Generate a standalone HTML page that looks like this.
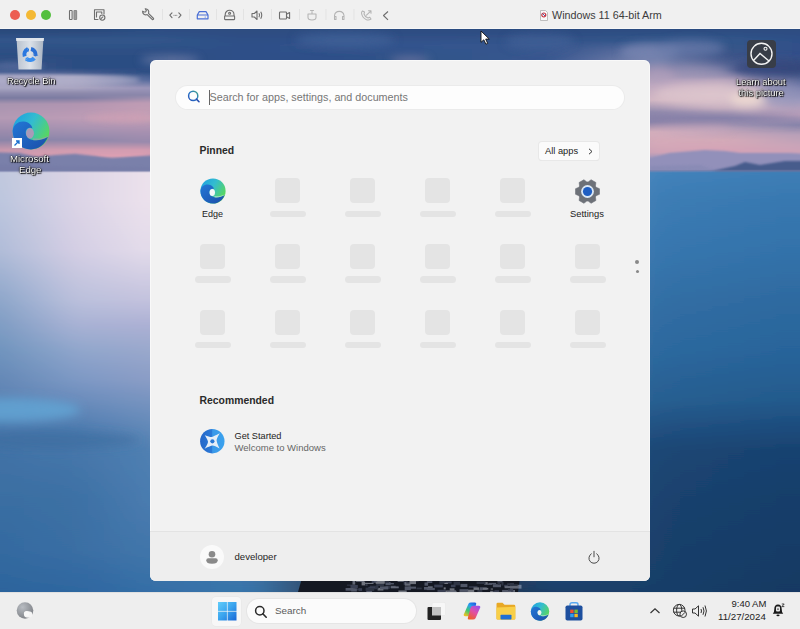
<!DOCTYPE html>
<html><head><meta charset="utf-8">
<style>
*{margin:0;padding:0;box-sizing:border-box}
html,body{width:800px;height:629px;overflow:hidden;background:#ececec;font-family:"Liberation Sans",sans-serif}
svg{display:block}
#titlebar{position:absolute;left:0;top:0;width:800px;height:29px;background:#f0f0f0;border-bottom:1px solid #f6f6f6}
#wall{position:absolute;left:0;top:29px;width:800px;height:563px;overflow:hidden;background:#3a6a9c}
#taskbar{position:absolute;left:0;top:592px;width:800px;height:37px;background:#eeeeee;border-top:1px solid #e0e0e0}
#start{position:absolute;left:150px;top:60px;width:500px;height:521px;background:#f2f2f2;border-radius:6px;overflow:hidden;box-shadow:inset 0 0 0 1px rgba(255,255,255,.55)}
#footer{position:absolute;left:0;top:471px;width:500px;height:50px;background:#eeeeee;border-top:1px solid #e3e3e3}
.ph{position:absolute;width:25px;height:25px;background:#e4e4e4;border-radius:4px}
.pl{position:absolute;width:36px;height:6.5px;background:#e4e4e4;border-radius:3.5px;margin-left:0.5px}
.t{position:absolute;white-space:nowrap;color:#1b1b1b;line-height:1}
.dt{position:absolute;white-space:nowrap;color:#fff;line-height:1;font-size:9.4px;text-align:center;text-shadow:0 0 1px #000,0 0 1px #000,1px 1px 1px #000,0 0 3px rgba(0,0,0,.5)}
.tl{position:absolute;width:10px;height:10px;border-radius:50%;top:10px}
#search{position:absolute;left:26px;top:26px;width:448px;height:23px;background:#fdfdfd;border-radius:12px;box-shadow:0 0 0 1px #ebebeb}
.sico{position:absolute;left:11px;top:4.2px}
#caret{position:absolute;left:33px;top:4px;width:1px;height:15px;background:#666}
#sph{left:33.5px;top:6px;font-size:10.75px;color:#767676}
.hd{font-size:10.4px;font-weight:bold;color:#2a2a2a}
#allapps{position:absolute;left:389px;top:82px;width:60px;height:18px;background:#fbfbfb;border-radius:3px;box-shadow:0 0 0 1px #e8e8e8,0 1px 0 #dcdcdc}
.dot{position:absolute;width:4px;height:4px;border-radius:50%;background:#888}
#avatar{position:absolute;left:50px;top:12.5px;width:24px;height:24px;border-radius:50%;background:#fafafa}
</style></head><body>
<div id="titlebar">
  <div class="tl" style="left:10px;background:#ec5d52"></div>
  <div class="tl" style="left:25.5px;background:#f4b935"></div>
  <div class="tl" style="left:41px;background:#54bf3e"></div>
  <svg style="position:absolute;left:0;top:0" width="400" height="29" viewBox="0 0 400 29">
   <g fill="none" stroke="#6e6e6e" stroke-width="1.1" stroke-linecap="round" stroke-linejoin="round">
    <rect x="69.5" y="10.5" width="2.6" height="9" rx="0.6"/>
    <rect x="74" y="10.5" width="2.6" height="9" rx="0.6" fill="#9a9a9a" stroke="#8a8a8a"/>
    <path d="M98 19.5 L94.5 19.5 L94.5 9.8 L104 9.8 L104 14"/>
    <path d="M96.5 17 L96.5 12 L101.8 12 L101.8 13.5"/>
    <circle cx="102.3" cy="17.6" r="2.6"/><path d="M101.2 18.4 L102.9 16.9"/>
    <path d="M142.6 11.2 A3.3 3.3 0 0 0 147.2 14.6 L152.4 19.7 A1 1 0 0 0 153.6 18.5 L148.5 13.3 A3.3 3.3 0 0 0 145.2 8.7 L146.4 10.6 L145.6 12 L144 12 Z"/>
    <path d="M172 12.8 L169.8 15.2 L172 17.6 M178.8 12.8 L181 15.2 L178.8 17.6"/>
    
   </g>
   <g fill="#6e6e6e"><circle cx="174" cy="15.2" r="0.5"/><circle cx="175.4" cy="15.2" r="0.5"/><circle cx="176.8" cy="15.2" r="0.5"/></g>
   <g fill="none" stroke="#4a6fd6" stroke-width="1.2" stroke-linejoin="round">
    <path d="M197.3 15 L199.3 11.6 L206 11.6 L208 15 L208 18.8 L197.3 18.8 Z M197.3 15 L208 15"/>
   </g>
   <circle cx="205.2" cy="17" r="0.6" fill="#4a6fd6"/>
   <g fill="none" stroke="#6e6e6e" stroke-width="1.1" stroke-linejoin="round">
    <path d="M225.2 16 L225.2 14.6 A4.4 4.4 0 0 1 234 14.6 L234 16"/><rect x="224.6" y="16" width="10" height="3.6" rx="0.5"/>
    <circle cx="229.6" cy="13.2" r="1"/>
    <path d="M252 13.5 L254.3 13.5 L257 11 L257 19.5 L254.3 17 L252 17 Z"/>
    <path d="M259 13.2 Q260.2 15.2 259 17.3 M260.7 11.8 Q262.8 15.2 260.7 18.7"/>
    <rect x="279.5" y="12" width="7" height="7" rx="0.8"/>
    <path d="M286.5 14.2 L289.6 12.5 L289.6 18.5 L286.5 16.8"/>
    <path d="M384 11.5 L388.5 15.5 L384 19.8" transform="translate(772,0) scale(-1,1)"/>
   </g>
   <g fill="none" stroke="#b4b4b4" stroke-width="1.05" stroke-linecap="round" stroke-linejoin="round">
    <path d="M308 14 L316 14 L316 17.5 A4 2.5 0 0 1 308 17.5 Z M312 14 L312 11.5 M310.5 10.5 L313.5 10.5"/>
    <path d="M334.5 19 L334.5 15.5 A4.8 4.8 0 0 1 344 15.5 L344 19 M334.5 16.5 L336 16.5 L336 19.5 L334.5 19.5 M344 16.5 L342.5 16.5 L342.5 19.5 L344 19.5"/>
    <path d="M362.5 11 L364.5 12 L364 14 Q365 17 368 18 L369.8 17.2 L371 19 Q369 20.5 366.5 19.8 Q362 17.5 361.5 13 Q361.7 11.5 362.5 11 Z M366.5 15.2 L371 10.8 M368.5 10.8 L371 10.8 L371 13.2"/>
   </g>
   <g stroke="#e3e3e3" stroke-width="1"><path d="M162.5 9 L162.5 20 M189.5 9 L189.5 20 M216.5 9 L216.5 20 M243.5 9 L243.5 20 M271.5 9 L271.5 20 M299.5 9 L299.5 20 M326 9 L326 20 M354 9 L354 20"/></g>
  </svg>
  <svg style="position:absolute;left:540px;top:9.5px" width="8" height="11" viewBox="0 0 8 11"><path d="M0.5 0.5 L5.5 0.5 L7.5 2.5 L7.5 10.5 L0.5 10.5Z" fill="#fafafa" stroke="#b0b0b0" stroke-width="0.8"/><circle cx="3.8" cy="5" r="2" fill="none" stroke="#c8303a" stroke-width="1.2"/><path d="M2.5 3.5 L5 6" stroke="#4050a0" stroke-width="0.9"/></svg>
  <span class="t" style="left:552px;top:9.5px;font-size:10.75px;color:#3c3c3c">Windows 11 64-bit Arm</span>
</div>
<div id="wall"><svg width="800" height="563" viewBox="0 0 800 563">
<defs><linearGradient id="c0" x1="0" y1="0" x2="0" y2="1"><stop offset="0.0000" stop-color="#2a4878"/><stop offset="0.0195" stop-color="#30548a"/><stop offset="0.0284" stop-color="#2f5287"/><stop offset="0.0373" stop-color="#2d5085"/><stop offset="0.0462" stop-color="#2c4e82"/><stop offset="0.0551" stop-color="#325285"/><stop offset="0.0586" stop-color="#355386"/><stop offset="0.0657" stop-color="#3a5688"/><stop offset="0.0693" stop-color="#3f5a8c"/><stop offset="0.0728" stop-color="#455e90"/><stop offset="0.0764" stop-color="#4a6294"/><stop offset="0.0782" stop-color="#60729f"/><stop offset="0.0835" stop-color="#a0a0c0"/><stop offset="0.0853" stop-color="#a1a0c0"/><stop offset="0.0906" stop-color="#a3a2c1"/><stop offset="0.0995" stop-color="#a6a4c2"/><stop offset="0.1048" stop-color="#a8a6c2"/><stop offset="0.1137" stop-color="#8e8cae"/><stop offset="0.1172" stop-color="#8685a8"/><stop offset="0.1226" stop-color="#7a7aa0"/><stop offset="0.1261" stop-color="#8983a5"/><stop offset="0.1314" stop-color="#a090ad"/><stop offset="0.1332" stop-color="#a894b0"/><stop offset="0.1403" stop-color="#ab96b1"/><stop offset="0.1474" stop-color="#af97b2"/><stop offset="0.1528" stop-color="#b199b3"/><stop offset="0.1581" stop-color="#b49ab4"/><stop offset="0.1652" stop-color="#ad95b2"/><stop offset="0.1705" stop-color="#a792b0"/><stop offset="0.1758" stop-color="#a18fae"/><stop offset="0.1829" stop-color="#9a8aac"/><stop offset="0.1883" stop-color="#9488aa"/><stop offset="0.1972" stop-color="#8a84a8"/><stop offset="0.2007" stop-color="#9688a9"/><stop offset="0.2060" stop-color="#a98eaa"/><stop offset="0.2149" stop-color="#c898ac"/><stop offset="0.2185" stop-color="#cc99ad"/><stop offset="0.2238" stop-color="#d29baf"/><stop offset="0.2256" stop-color="#d49cb0"/><stop offset="0.2327" stop-color="#7a7ea8"/><stop offset="0.2362" stop-color="#7a7ea8"/><stop offset="0.2433" stop-color="#7a7ea8"/><stop offset="0.2504" stop-color="#7a7ea8"/><stop offset="0.2522" stop-color="#c0c8de"/><stop offset="0.3037" stop-color="#bcc6de"/><stop offset="0.3925" stop-color="#b0bcd8"/><stop offset="0.4813" stop-color="#8ea6ca"/><stop offset="0.5258" stop-color="#7f9dc4"/><stop offset="0.5702" stop-color="#7094be"/><stop offset="0.6234" stop-color="#6488b6"/><stop offset="0.6501" stop-color="#5e84b4"/><stop offset="0.6590" stop-color="#5b82b3"/><stop offset="0.7034" stop-color="#4d7aad"/><stop offset="0.7123" stop-color="#4a78ac"/><stop offset="0.7478" stop-color="#4272a6"/><stop offset="0.8366" stop-color="#3a6ea2"/><stop offset="0.9254" stop-color="#346aa0"/><stop offset="0.9698" stop-color="#2f669e"/><stop offset="1.0000" stop-color="#2c649c"/></linearGradient><linearGradient id="c1" x1="0" y1="0" x2="0" y2="1"><stop offset="0.0000" stop-color="#2a4878"/><stop offset="0.0195" stop-color="#30548a"/><stop offset="0.0284" stop-color="#2f5287"/><stop offset="0.0373" stop-color="#2d5085"/><stop offset="0.0462" stop-color="#2c4e82"/><stop offset="0.0551" stop-color="#325285"/><stop offset="0.0586" stop-color="#355386"/><stop offset="0.0657" stop-color="#3a5688"/><stop offset="0.0693" stop-color="#3f5a8c"/><stop offset="0.0728" stop-color="#455e90"/><stop offset="0.0764" stop-color="#4a6294"/><stop offset="0.0782" stop-color="#60729f"/><stop offset="0.0835" stop-color="#a0a0c0"/><stop offset="0.0853" stop-color="#a1a0c0"/><stop offset="0.0906" stop-color="#a3a2c1"/><stop offset="0.0995" stop-color="#a6a4c2"/><stop offset="0.1048" stop-color="#a8a6c2"/><stop offset="0.1137" stop-color="#8e8cae"/><stop offset="0.1172" stop-color="#8685a8"/><stop offset="0.1226" stop-color="#7a7aa0"/><stop offset="0.1261" stop-color="#8983a5"/><stop offset="0.1314" stop-color="#a090ad"/><stop offset="0.1332" stop-color="#a894b0"/><stop offset="0.1403" stop-color="#ab96b1"/><stop offset="0.1474" stop-color="#af97b2"/><stop offset="0.1528" stop-color="#b199b3"/><stop offset="0.1581" stop-color="#b49ab4"/><stop offset="0.1652" stop-color="#ad95b2"/><stop offset="0.1705" stop-color="#a792b0"/><stop offset="0.1758" stop-color="#a18fae"/><stop offset="0.1829" stop-color="#9a8aac"/><stop offset="0.1883" stop-color="#9488aa"/><stop offset="0.1972" stop-color="#8a84a8"/><stop offset="0.2007" stop-color="#9688a9"/><stop offset="0.2060" stop-color="#a98eaa"/><stop offset="0.2149" stop-color="#c898ac"/><stop offset="0.2185" stop-color="#cc99ad"/><stop offset="0.2238" stop-color="#d29baf"/><stop offset="0.2256" stop-color="#d49cb0"/><stop offset="0.2327" stop-color="#7a7ea8"/><stop offset="0.2362" stop-color="#7a7ea8"/><stop offset="0.2433" stop-color="#7a7ea8"/><stop offset="0.2504" stop-color="#7a7ea8"/><stop offset="0.2522" stop-color="#c0c8de"/><stop offset="0.3037" stop-color="#bcc6de"/><stop offset="0.3925" stop-color="#b0bcd8"/><stop offset="0.4813" stop-color="#8ea6ca"/><stop offset="0.5258" stop-color="#7f9dc4"/><stop offset="0.5702" stop-color="#7094be"/><stop offset="0.6234" stop-color="#6488b6"/><stop offset="0.6501" stop-color="#5e84b4"/><stop offset="0.6590" stop-color="#5b82b3"/><stop offset="0.7034" stop-color="#4d7aad"/><stop offset="0.7123" stop-color="#4a78ac"/><stop offset="0.7478" stop-color="#4272a6"/><stop offset="0.8366" stop-color="#3a6ea2"/><stop offset="0.9254" stop-color="#346aa0"/><stop offset="0.9698" stop-color="#2f669e"/><stop offset="1.0000" stop-color="#2c649c"/></linearGradient><linearGradient id="c2" x1="0" y1="0" x2="0" y2="1"><stop offset="0.0000" stop-color="#2a4878"/><stop offset="0.0195" stop-color="#30548a"/><stop offset="0.0284" stop-color="#2f5287"/><stop offset="0.0373" stop-color="#2d5085"/><stop offset="0.0462" stop-color="#2c4e82"/><stop offset="0.0551" stop-color="#325285"/><stop offset="0.0586" stop-color="#355386"/><stop offset="0.0657" stop-color="#3a5688"/><stop offset="0.0693" stop-color="#3f5a8c"/><stop offset="0.0728" stop-color="#455e90"/><stop offset="0.0764" stop-color="#4a6294"/><stop offset="0.0782" stop-color="#60729f"/><stop offset="0.0835" stop-color="#a0a0c0"/><stop offset="0.0853" stop-color="#a1a0c0"/><stop offset="0.0906" stop-color="#a3a2c1"/><stop offset="0.0995" stop-color="#a6a4c2"/><stop offset="0.1048" stop-color="#a8a6c2"/><stop offset="0.1137" stop-color="#8e8cae"/><stop offset="0.1172" stop-color="#8685a8"/><stop offset="0.1226" stop-color="#7a7aa0"/><stop offset="0.1261" stop-color="#8983a5"/><stop offset="0.1314" stop-color="#a090ad"/><stop offset="0.1332" stop-color="#a894b0"/><stop offset="0.1403" stop-color="#ab96b1"/><stop offset="0.1474" stop-color="#af97b2"/><stop offset="0.1528" stop-color="#b199b3"/><stop offset="0.1581" stop-color="#b49ab4"/><stop offset="0.1652" stop-color="#ad95b2"/><stop offset="0.1705" stop-color="#a792b0"/><stop offset="0.1758" stop-color="#a18fae"/><stop offset="0.1829" stop-color="#9a8aac"/><stop offset="0.1883" stop-color="#9488aa"/><stop offset="0.1972" stop-color="#8a84a8"/><stop offset="0.2007" stop-color="#9688a9"/><stop offset="0.2060" stop-color="#a98eaa"/><stop offset="0.2149" stop-color="#c898ac"/><stop offset="0.2185" stop-color="#cc99ad"/><stop offset="0.2238" stop-color="#d29baf"/><stop offset="0.2256" stop-color="#d49cb0"/><stop offset="0.2327" stop-color="#7a7ea8"/><stop offset="0.2362" stop-color="#7a7ea8"/><stop offset="0.2433" stop-color="#7a7ea8"/><stop offset="0.2504" stop-color="#7a7ea8"/><stop offset="0.2522" stop-color="#c0c8de"/><stop offset="0.3037" stop-color="#bcc6de"/><stop offset="0.3925" stop-color="#b0bcd8"/><stop offset="0.4813" stop-color="#8ea6ca"/><stop offset="0.5258" stop-color="#7f9dc4"/><stop offset="0.5702" stop-color="#7094be"/><stop offset="0.6234" stop-color="#6488b6"/><stop offset="0.6501" stop-color="#5e84b4"/><stop offset="0.6590" stop-color="#5b82b3"/><stop offset="0.7034" stop-color="#4d7aad"/><stop offset="0.7123" stop-color="#4a78ac"/><stop offset="0.7478" stop-color="#4272a6"/><stop offset="0.8366" stop-color="#3a6ea2"/><stop offset="0.9254" stop-color="#346aa0"/><stop offset="0.9698" stop-color="#2f669e"/><stop offset="1.0000" stop-color="#2c649c"/></linearGradient><linearGradient id="c3" x1="0" y1="0" x2="0" y2="1"><stop offset="0.0000" stop-color="#2a4878"/><stop offset="0.0195" stop-color="#30548a"/><stop offset="0.0284" stop-color="#2f5287"/><stop offset="0.0373" stop-color="#2d5085"/><stop offset="0.0462" stop-color="#2c4e82"/><stop offset="0.0551" stop-color="#315184"/><stop offset="0.0586" stop-color="#335285"/><stop offset="0.0657" stop-color="#375487"/><stop offset="0.0693" stop-color="#3b578a"/><stop offset="0.0728" stop-color="#425c8e"/><stop offset="0.0764" stop-color="#496093"/><stop offset="0.0782" stop-color="#5b6d9c"/><stop offset="0.0835" stop-color="#9d9ebe"/><stop offset="0.0853" stop-color="#a3a2c1"/><stop offset="0.0906" stop-color="#a4a3c1"/><stop offset="0.0995" stop-color="#a7a5c2"/><stop offset="0.1048" stop-color="#a8a6c2"/><stop offset="0.1137" stop-color="#8e8cae"/><stop offset="0.1172" stop-color="#8685a8"/><stop offset="0.1226" stop-color="#7a7aa0"/><stop offset="0.1261" stop-color="#8a83a6"/><stop offset="0.1314" stop-color="#a290ad"/><stop offset="0.1332" stop-color="#aa94b0"/><stop offset="0.1403" stop-color="#ad96b1"/><stop offset="0.1474" stop-color="#b198b3"/><stop offset="0.1528" stop-color="#b399b3"/><stop offset="0.1581" stop-color="#b69ab4"/><stop offset="0.1652" stop-color="#ae96b2"/><stop offset="0.1705" stop-color="#a893b1"/><stop offset="0.1758" stop-color="#a390af"/><stop offset="0.1829" stop-color="#9b8bad"/><stop offset="0.1883" stop-color="#9589ab"/><stop offset="0.1972" stop-color="#8a84a8"/><stop offset="0.2007" stop-color="#9789a9"/><stop offset="0.2060" stop-color="#aa8fab"/><stop offset="0.2149" stop-color="#ca99ad"/><stop offset="0.2185" stop-color="#ce9aae"/><stop offset="0.2238" stop-color="#d49cb0"/><stop offset="0.2256" stop-color="#d69db0"/><stop offset="0.2327" stop-color="#7a7ea8"/><stop offset="0.2362" stop-color="#7a7ea8"/><stop offset="0.2433" stop-color="#7a7ea8"/><stop offset="0.2504" stop-color="#7a7ea8"/><stop offset="0.2522" stop-color="#c6cbdf"/><stop offset="0.3037" stop-color="#c3c9e0"/><stop offset="0.3925" stop-color="#b8c0db"/><stop offset="0.4813" stop-color="#97acce"/><stop offset="0.5258" stop-color="#88a1c7"/><stop offset="0.5702" stop-color="#7798c1"/><stop offset="0.6234" stop-color="#698bb9"/><stop offset="0.6501" stop-color="#6286b6"/><stop offset="0.6590" stop-color="#5e84b5"/><stop offset="0.7034" stop-color="#4e7aae"/><stop offset="0.7123" stop-color="#4a78ac"/><stop offset="0.7478" stop-color="#4373a7"/><stop offset="0.8366" stop-color="#3a6ea2"/><stop offset="0.9254" stop-color="#356ba1"/><stop offset="0.9698" stop-color="#30679e"/><stop offset="1.0000" stop-color="#2c649d"/></linearGradient><linearGradient id="c4" x1="0" y1="0" x2="0" y2="1"><stop offset="0.0000" stop-color="#2a4878"/><stop offset="0.0195" stop-color="#30548a"/><stop offset="0.0284" stop-color="#2f5287"/><stop offset="0.0373" stop-color="#2d5085"/><stop offset="0.0462" stop-color="#2c4e82"/><stop offset="0.0551" stop-color="#305084"/><stop offset="0.0586" stop-color="#315184"/><stop offset="0.0657" stop-color="#345285"/><stop offset="0.0693" stop-color="#375488"/><stop offset="0.0728" stop-color="#3f5a8c"/><stop offset="0.0764" stop-color="#475f91"/><stop offset="0.0782" stop-color="#566999"/><stop offset="0.0835" stop-color="#9a9cbc"/><stop offset="0.0853" stop-color="#a5a4c2"/><stop offset="0.0906" stop-color="#a6a4c2"/><stop offset="0.0995" stop-color="#a8a5c2"/><stop offset="0.1048" stop-color="#a9a6c2"/><stop offset="0.1137" stop-color="#8e8bad"/><stop offset="0.1172" stop-color="#8685a8"/><stop offset="0.1226" stop-color="#7b7ba1"/><stop offset="0.1261" stop-color="#8b83a6"/><stop offset="0.1314" stop-color="#a390ad"/><stop offset="0.1332" stop-color="#ab94b0"/><stop offset="0.1403" stop-color="#af96b1"/><stop offset="0.1474" stop-color="#b298b3"/><stop offset="0.1528" stop-color="#b599b4"/><stop offset="0.1581" stop-color="#b79bb5"/><stop offset="0.1652" stop-color="#b097b3"/><stop offset="0.1705" stop-color="#aa94b1"/><stop offset="0.1758" stop-color="#a491b0"/><stop offset="0.1829" stop-color="#9d8dae"/><stop offset="0.1883" stop-color="#968aac"/><stop offset="0.1972" stop-color="#8b85a9"/><stop offset="0.2007" stop-color="#9889aa"/><stop offset="0.2060" stop-color="#ab8fab"/><stop offset="0.2149" stop-color="#cb9aae"/><stop offset="0.2185" stop-color="#cf9baf"/><stop offset="0.2238" stop-color="#d59db0"/><stop offset="0.2256" stop-color="#d79eb1"/><stop offset="0.2327" stop-color="#7b7fa9"/><stop offset="0.2362" stop-color="#7b7fa9"/><stop offset="0.2433" stop-color="#7b7fa9"/><stop offset="0.2504" stop-color="#7b7fa9"/><stop offset="0.2522" stop-color="#cccde1"/><stop offset="0.3037" stop-color="#cacce1"/><stop offset="0.3925" stop-color="#bfc4dd"/><stop offset="0.4813" stop-color="#a1b1d2"/><stop offset="0.5258" stop-color="#90a6cb"/><stop offset="0.5702" stop-color="#7e9cc4"/><stop offset="0.6234" stop-color="#6e8fbc"/><stop offset="0.6501" stop-color="#6589b8"/><stop offset="0.6590" stop-color="#6186b7"/><stop offset="0.7034" stop-color="#4f7baf"/><stop offset="0.7123" stop-color="#4b79ad"/><stop offset="0.7478" stop-color="#4474a8"/><stop offset="0.8366" stop-color="#3b6fa3"/><stop offset="0.9254" stop-color="#376ca2"/><stop offset="0.9698" stop-color="#31689f"/><stop offset="1.0000" stop-color="#2d659e"/></linearGradient><linearGradient id="c5" x1="0" y1="0" x2="0" y2="1"><stop offset="0.0000" stop-color="#2a4878"/><stop offset="0.0195" stop-color="#31558a"/><stop offset="0.0284" stop-color="#2f5287"/><stop offset="0.0373" stop-color="#2e5085"/><stop offset="0.0462" stop-color="#2c4e82"/><stop offset="0.0551" stop-color="#2e4f83"/><stop offset="0.0586" stop-color="#2f4f83"/><stop offset="0.0657" stop-color="#315084"/><stop offset="0.0693" stop-color="#335286"/><stop offset="0.0728" stop-color="#3d578b"/><stop offset="0.0764" stop-color="#465d90"/><stop offset="0.0782" stop-color="#526595"/><stop offset="0.0835" stop-color="#9799ba"/><stop offset="0.0853" stop-color="#a7a5c3"/><stop offset="0.0906" stop-color="#a7a5c2"/><stop offset="0.0995" stop-color="#a9a6c2"/><stop offset="0.1048" stop-color="#a9a6c2"/><stop offset="0.1137" stop-color="#8e8bad"/><stop offset="0.1172" stop-color="#8785a8"/><stop offset="0.1226" stop-color="#7b7ba1"/><stop offset="0.1261" stop-color="#8c84a6"/><stop offset="0.1314" stop-color="#a590ae"/><stop offset="0.1332" stop-color="#ad94b0"/><stop offset="0.1403" stop-color="#b196b2"/><stop offset="0.1474" stop-color="#b498b3"/><stop offset="0.1528" stop-color="#b79ab4"/><stop offset="0.1581" stop-color="#b99bb5"/><stop offset="0.1652" stop-color="#b197b3"/><stop offset="0.1705" stop-color="#ab95b2"/><stop offset="0.1758" stop-color="#a692b0"/><stop offset="0.1829" stop-color="#9e8eaf"/><stop offset="0.1883" stop-color="#978bad"/><stop offset="0.1972" stop-color="#8b85a9"/><stop offset="0.2007" stop-color="#988aaa"/><stop offset="0.2060" stop-color="#ac90ac"/><stop offset="0.2149" stop-color="#cd9baf"/><stop offset="0.2185" stop-color="#d19caf"/><stop offset="0.2238" stop-color="#d79eb1"/><stop offset="0.2256" stop-color="#d99fb1"/><stop offset="0.2327" stop-color="#7b7fa9"/><stop offset="0.2362" stop-color="#7b7fa9"/><stop offset="0.2433" stop-color="#7b7fa9"/><stop offset="0.2504" stop-color="#7b7fa9"/><stop offset="0.2522" stop-color="#d2d0e2"/><stop offset="0.3037" stop-color="#d0cfe3"/><stop offset="0.3925" stop-color="#c7c8e0"/><stop offset="0.4813" stop-color="#aab7d6"/><stop offset="0.5258" stop-color="#99aace"/><stop offset="0.5702" stop-color="#84a0c7"/><stop offset="0.6234" stop-color="#7392bf"/><stop offset="0.6501" stop-color="#698bba"/><stop offset="0.6590" stop-color="#6589b9"/><stop offset="0.7034" stop-color="#507caf"/><stop offset="0.7123" stop-color="#4b79ad"/><stop offset="0.7478" stop-color="#4575a9"/><stop offset="0.8366" stop-color="#3b6fa3"/><stop offset="0.9254" stop-color="#386da3"/><stop offset="0.9698" stop-color="#3268a0"/><stop offset="1.0000" stop-color="#2d659f"/></linearGradient><linearGradient id="c6" x1="0" y1="0" x2="0" y2="1"><stop offset="0.0000" stop-color="#2a4878"/><stop offset="0.0195" stop-color="#31558a"/><stop offset="0.0284" stop-color="#2f5387"/><stop offset="0.0373" stop-color="#2e5085"/><stop offset="0.0462" stop-color="#2c4e82"/><stop offset="0.0551" stop-color="#2d4e82"/><stop offset="0.0586" stop-color="#2d4e83"/><stop offset="0.0657" stop-color="#2e4e83"/><stop offset="0.0693" stop-color="#2f4f83"/><stop offset="0.0728" stop-color="#3a5589"/><stop offset="0.0764" stop-color="#455c8e"/><stop offset="0.0782" stop-color="#4d6192"/><stop offset="0.0835" stop-color="#9497b8"/><stop offset="0.0853" stop-color="#a9a7c3"/><stop offset="0.0906" stop-color="#a9a7c3"/><stop offset="0.0995" stop-color="#a9a6c2"/><stop offset="0.1048" stop-color="#aaa6c2"/><stop offset="0.1137" stop-color="#8e8aac"/><stop offset="0.1172" stop-color="#8784a8"/><stop offset="0.1226" stop-color="#7c7ca2"/><stop offset="0.1261" stop-color="#8d84a6"/><stop offset="0.1314" stop-color="#a690ae"/><stop offset="0.1332" stop-color="#af94b0"/><stop offset="0.1403" stop-color="#b296b2"/><stop offset="0.1474" stop-color="#b698b3"/><stop offset="0.1528" stop-color="#b89ab4"/><stop offset="0.1581" stop-color="#bb9cb6"/><stop offset="0.1652" stop-color="#b398b4"/><stop offset="0.1705" stop-color="#ad95b3"/><stop offset="0.1758" stop-color="#a793b1"/><stop offset="0.1829" stop-color="#9f8faf"/><stop offset="0.1883" stop-color="#988cad"/><stop offset="0.1972" stop-color="#8c86aa"/><stop offset="0.2007" stop-color="#998aab"/><stop offset="0.2060" stop-color="#ad91ad"/><stop offset="0.2149" stop-color="#cf9baf"/><stop offset="0.2185" stop-color="#d39db0"/><stop offset="0.2238" stop-color="#d99fb1"/><stop offset="0.2256" stop-color="#db9fb2"/><stop offset="0.2327" stop-color="#7c80aa"/><stop offset="0.2362" stop-color="#7c80aa"/><stop offset="0.2433" stop-color="#7c80aa"/><stop offset="0.2504" stop-color="#7c80aa"/><stop offset="0.2522" stop-color="#d8d2e3"/><stop offset="0.3037" stop-color="#d7d2e5"/><stop offset="0.3925" stop-color="#cfcbe2"/><stop offset="0.4813" stop-color="#b4bcd9"/><stop offset="0.5258" stop-color="#a2afd2"/><stop offset="0.5702" stop-color="#8ba3ca"/><stop offset="0.6234" stop-color="#7896c2"/><stop offset="0.6501" stop-color="#6c8dbd"/><stop offset="0.6590" stop-color="#688bbb"/><stop offset="0.7034" stop-color="#507db0"/><stop offset="0.7123" stop-color="#4c7aae"/><stop offset="0.7478" stop-color="#4575a9"/><stop offset="0.8366" stop-color="#3c70a4"/><stop offset="0.9254" stop-color="#396da3"/><stop offset="0.9698" stop-color="#3269a1"/><stop offset="1.0000" stop-color="#2e669f"/></linearGradient><linearGradient id="c7" x1="0" y1="0" x2="0" y2="1"><stop offset="0.0000" stop-color="#2a4879"/><stop offset="0.0195" stop-color="#31558a"/><stop offset="0.0284" stop-color="#2f5387"/><stop offset="0.0373" stop-color="#2e5085"/><stop offset="0.0462" stop-color="#2c4e82"/><stop offset="0.0551" stop-color="#2c4e82"/><stop offset="0.0586" stop-color="#2c4d82"/><stop offset="0.0657" stop-color="#2c4d82"/><stop offset="0.0693" stop-color="#2c4d82"/><stop offset="0.0728" stop-color="#375387"/><stop offset="0.0764" stop-color="#425a8d"/><stop offset="0.0782" stop-color="#485d8f"/><stop offset="0.0835" stop-color="#8c92b4"/><stop offset="0.0853" stop-color="#a3a3c1"/><stop offset="0.0906" stop-color="#a4a3c1"/><stop offset="0.0995" stop-color="#a7a4c1"/><stop offset="0.1048" stop-color="#a9a5c1"/><stop offset="0.1137" stop-color="#8e8aac"/><stop offset="0.1172" stop-color="#8785a8"/><stop offset="0.1226" stop-color="#7e7da3"/><stop offset="0.1261" stop-color="#8f85a7"/><stop offset="0.1314" stop-color="#a991ae"/><stop offset="0.1332" stop-color="#b195b0"/><stop offset="0.1403" stop-color="#b497b2"/><stop offset="0.1474" stop-color="#b899b4"/><stop offset="0.1528" stop-color="#ba9bb5"/><stop offset="0.1581" stop-color="#bd9cb6"/><stop offset="0.1652" stop-color="#b599b4"/><stop offset="0.1705" stop-color="#af96b3"/><stop offset="0.1758" stop-color="#a994b2"/><stop offset="0.1829" stop-color="#a190b0"/><stop offset="0.1883" stop-color="#998cae"/><stop offset="0.1972" stop-color="#8d86aa"/><stop offset="0.2007" stop-color="#9a8aab"/><stop offset="0.2060" stop-color="#ae91ad"/><stop offset="0.2149" stop-color="#d09cb0"/><stop offset="0.2185" stop-color="#d49db1"/><stop offset="0.2238" stop-color="#da9fb2"/><stop offset="0.2256" stop-color="#dca0b2"/><stop offset="0.2327" stop-color="#7c80aa"/><stop offset="0.2362" stop-color="#7c80aa"/><stop offset="0.2433" stop-color="#7c80aa"/><stop offset="0.2504" stop-color="#7c80aa"/><stop offset="0.2522" stop-color="#ddd5e5"/><stop offset="0.3037" stop-color="#ddd5e6"/><stop offset="0.3925" stop-color="#d5cfe4"/><stop offset="0.4813" stop-color="#bbc0dc"/><stop offset="0.5258" stop-color="#a8b2d4"/><stop offset="0.5702" stop-color="#91a6cc"/><stop offset="0.6234" stop-color="#7d98c4"/><stop offset="0.6501" stop-color="#6f8fbe"/><stop offset="0.6590" stop-color="#6b8dbc"/><stop offset="0.7034" stop-color="#527eb1"/><stop offset="0.7123" stop-color="#4d7baf"/><stop offset="0.7478" stop-color="#4777ab"/><stop offset="0.8366" stop-color="#3d71a5"/><stop offset="0.9254" stop-color="#3b6fa4"/><stop offset="0.9698" stop-color="#336aa2"/><stop offset="1.0000" stop-color="#2e67a0"/></linearGradient><linearGradient id="c8" x1="0" y1="0" x2="0" y2="1"><stop offset="0.0000" stop-color="#2b497b"/><stop offset="0.0195" stop-color="#31558a"/><stop offset="0.0284" stop-color="#2f5388"/><stop offset="0.0373" stop-color="#2e5085"/><stop offset="0.0462" stop-color="#2c4e83"/><stop offset="0.0551" stop-color="#2c4e83"/><stop offset="0.0586" stop-color="#2c4e83"/><stop offset="0.0657" stop-color="#2c4d83"/><stop offset="0.0693" stop-color="#2c4d83"/><stop offset="0.0728" stop-color="#355287"/><stop offset="0.0764" stop-color="#3d578b"/><stop offset="0.0782" stop-color="#435a8d"/><stop offset="0.0835" stop-color="#7a85ac"/><stop offset="0.0853" stop-color="#8d93b6"/><stop offset="0.0906" stop-color="#9195b8"/><stop offset="0.0995" stop-color="#9e9dbc"/><stop offset="0.1048" stop-color="#a6a1bf"/><stop offset="0.1137" stop-color="#8e8aad"/><stop offset="0.1172" stop-color="#8885a9"/><stop offset="0.1226" stop-color="#8681a5"/><stop offset="0.1261" stop-color="#9688a9"/><stop offset="0.1314" stop-color="#ae93af"/><stop offset="0.1332" stop-color="#b596b1"/><stop offset="0.1403" stop-color="#b898b3"/><stop offset="0.1474" stop-color="#bb9ab4"/><stop offset="0.1528" stop-color="#bd9cb5"/><stop offset="0.1581" stop-color="#bf9db6"/><stop offset="0.1652" stop-color="#b799b4"/><stop offset="0.1705" stop-color="#b197b3"/><stop offset="0.1758" stop-color="#ab94b2"/><stop offset="0.1829" stop-color="#a290b0"/><stop offset="0.1883" stop-color="#9c8dae"/><stop offset="0.1972" stop-color="#9187ab"/><stop offset="0.2007" stop-color="#9a8aab"/><stop offset="0.2060" stop-color="#ae91ad"/><stop offset="0.2149" stop-color="#d19cb0"/><stop offset="0.2185" stop-color="#d59db1"/><stop offset="0.2238" stop-color="#da9fb2"/><stop offset="0.2256" stop-color="#dca0b2"/><stop offset="0.2327" stop-color="#7d81ab"/><stop offset="0.2362" stop-color="#7d81ab"/><stop offset="0.2433" stop-color="#7d81ab"/><stop offset="0.2504" stop-color="#7d81ab"/><stop offset="0.2522" stop-color="#e0d8e6"/><stop offset="0.3037" stop-color="#e0d8e8"/><stop offset="0.3925" stop-color="#d8d2e6"/><stop offset="0.4813" stop-color="#bdc1dd"/><stop offset="0.5258" stop-color="#a9b1d4"/><stop offset="0.5702" stop-color="#93a7cc"/><stop offset="0.6234" stop-color="#8099c5"/><stop offset="0.6501" stop-color="#7291bf"/><stop offset="0.6590" stop-color="#6e8ebd"/><stop offset="0.7034" stop-color="#5681b3"/><stop offset="0.7123" stop-color="#527eb1"/><stop offset="0.7478" stop-color="#4979ac"/><stop offset="0.8366" stop-color="#4073a7"/><stop offset="0.9254" stop-color="#3c70a6"/><stop offset="0.9698" stop-color="#356ba3"/><stop offset="1.0000" stop-color="#3068a2"/></linearGradient><linearGradient id="c9" x1="0" y1="0" x2="0" y2="1"><stop offset="0.0000" stop-color="#2b4a7d"/><stop offset="0.0195" stop-color="#31558a"/><stop offset="0.0284" stop-color="#2f5388"/><stop offset="0.0373" stop-color="#2e5085"/><stop offset="0.0462" stop-color="#2c4e83"/><stop offset="0.0551" stop-color="#2c4e83"/><stop offset="0.0586" stop-color="#2c4e83"/><stop offset="0.0657" stop-color="#2c4e83"/><stop offset="0.0693" stop-color="#2c4d83"/><stop offset="0.0728" stop-color="#325186"/><stop offset="0.0764" stop-color="#385489"/><stop offset="0.0782" stop-color="#3d588b"/><stop offset="0.0835" stop-color="#6978a3"/><stop offset="0.0853" stop-color="#7783ab"/><stop offset="0.0906" stop-color="#7e87af"/><stop offset="0.0995" stop-color="#9495b8"/><stop offset="0.1048" stop-color="#a29dbd"/><stop offset="0.1137" stop-color="#8e8aad"/><stop offset="0.1172" stop-color="#8885a9"/><stop offset="0.1226" stop-color="#8d85a8"/><stop offset="0.1261" stop-color="#9c8cab"/><stop offset="0.1314" stop-color="#b496b1"/><stop offset="0.1332" stop-color="#b898b2"/><stop offset="0.1403" stop-color="#bb9ab3"/><stop offset="0.1474" stop-color="#be9bb4"/><stop offset="0.1528" stop-color="#c09db5"/><stop offset="0.1581" stop-color="#c29eb6"/><stop offset="0.1652" stop-color="#b99ab4"/><stop offset="0.1705" stop-color="#b397b3"/><stop offset="0.1758" stop-color="#ad94b2"/><stop offset="0.1829" stop-color="#a490b0"/><stop offset="0.1883" stop-color="#9e8dae"/><stop offset="0.1972" stop-color="#9489ab"/><stop offset="0.2007" stop-color="#9a8aac"/><stop offset="0.2060" stop-color="#af91ad"/><stop offset="0.2149" stop-color="#d29cb0"/><stop offset="0.2185" stop-color="#d59db1"/><stop offset="0.2238" stop-color="#da9fb2"/><stop offset="0.2256" stop-color="#dca0b2"/><stop offset="0.2327" stop-color="#7e82ab"/><stop offset="0.2362" stop-color="#7e82ab"/><stop offset="0.2433" stop-color="#7e82ab"/><stop offset="0.2504" stop-color="#7e82ab"/><stop offset="0.2522" stop-color="#e4dbe8"/><stop offset="0.3037" stop-color="#e4dbe9"/><stop offset="0.3925" stop-color="#dcd5e7"/><stop offset="0.4813" stop-color="#bfc1dd"/><stop offset="0.5258" stop-color="#aab1d4"/><stop offset="0.5702" stop-color="#95a7cc"/><stop offset="0.6234" stop-color="#839ac5"/><stop offset="0.6501" stop-color="#7592c0"/><stop offset="0.6590" stop-color="#7190be"/><stop offset="0.7034" stop-color="#5a83b5"/><stop offset="0.7123" stop-color="#5681b3"/><stop offset="0.7478" stop-color="#4b7bae"/><stop offset="0.8366" stop-color="#4376aa"/><stop offset="0.9254" stop-color="#3e72a7"/><stop offset="0.9698" stop-color="#366da5"/><stop offset="1.0000" stop-color="#316aa3"/></linearGradient><linearGradient id="c10" x1="0" y1="0" x2="0" y2="1"><stop offset="0.0000" stop-color="#2b4c7f"/><stop offset="0.0195" stop-color="#31558a"/><stop offset="0.0284" stop-color="#2f5388"/><stop offset="0.0373" stop-color="#2e5086"/><stop offset="0.0462" stop-color="#2c4e83"/><stop offset="0.0551" stop-color="#2c4e83"/><stop offset="0.0586" stop-color="#2c4e83"/><stop offset="0.0657" stop-color="#2c4e83"/><stop offset="0.0693" stop-color="#2c4e83"/><stop offset="0.0728" stop-color="#305085"/><stop offset="0.0764" stop-color="#335287"/><stop offset="0.0782" stop-color="#385589"/><stop offset="0.0835" stop-color="#576b9b"/><stop offset="0.0853" stop-color="#6173a0"/><stop offset="0.0906" stop-color="#6a79a6"/><stop offset="0.0995" stop-color="#8b8db3"/><stop offset="0.1048" stop-color="#9f99bb"/><stop offset="0.1137" stop-color="#8e8aad"/><stop offset="0.1172" stop-color="#8986a9"/><stop offset="0.1226" stop-color="#9489aa"/><stop offset="0.1261" stop-color="#a38fad"/><stop offset="0.1314" stop-color="#b998b2"/><stop offset="0.1332" stop-color="#bc9ab3"/><stop offset="0.1403" stop-color="#be9bb4"/><stop offset="0.1474" stop-color="#c19db5"/><stop offset="0.1528" stop-color="#c39eb5"/><stop offset="0.1581" stop-color="#c49fb6"/><stop offset="0.1652" stop-color="#bc9bb4"/><stop offset="0.1705" stop-color="#b597b3"/><stop offset="0.1758" stop-color="#ae94b2"/><stop offset="0.1829" stop-color="#a690b0"/><stop offset="0.1883" stop-color="#a08eae"/><stop offset="0.1972" stop-color="#988aac"/><stop offset="0.2007" stop-color="#9a8aac"/><stop offset="0.2060" stop-color="#af91ad"/><stop offset="0.2149" stop-color="#d39cb0"/><stop offset="0.2185" stop-color="#d69db1"/><stop offset="0.2238" stop-color="#da9fb2"/><stop offset="0.2256" stop-color="#dca0b2"/><stop offset="0.2327" stop-color="#7f83ab"/><stop offset="0.2362" stop-color="#7f83ab"/><stop offset="0.2433" stop-color="#7f83ab"/><stop offset="0.2504" stop-color="#7f83ab"/><stop offset="0.2522" stop-color="#e7deea"/><stop offset="0.3037" stop-color="#e7deea"/><stop offset="0.3925" stop-color="#dfd8e8"/><stop offset="0.4813" stop-color="#c1c1dd"/><stop offset="0.5258" stop-color="#abb1d4"/><stop offset="0.5702" stop-color="#97a7cc"/><stop offset="0.6234" stop-color="#869bc5"/><stop offset="0.6501" stop-color="#7894c0"/><stop offset="0.6590" stop-color="#7492bf"/><stop offset="0.7034" stop-color="#5e86b6"/><stop offset="0.7123" stop-color="#5a84b5"/><stop offset="0.7478" stop-color="#4d7db0"/><stop offset="0.8366" stop-color="#4678ac"/><stop offset="0.9254" stop-color="#4074a8"/><stop offset="0.9698" stop-color="#386fa6"/><stop offset="1.0000" stop-color="#326ca4"/></linearGradient><linearGradient id="c11" x1="0" y1="0" x2="0" y2="1"><stop offset="0.0000" stop-color="#2c4d81"/><stop offset="0.0195" stop-color="#31558a"/><stop offset="0.0284" stop-color="#2f5388"/><stop offset="0.0373" stop-color="#2e5086"/><stop offset="0.0462" stop-color="#2c4e84"/><stop offset="0.0551" stop-color="#2c4e84"/><stop offset="0.0586" stop-color="#2c4e84"/><stop offset="0.0657" stop-color="#2c4e84"/><stop offset="0.0693" stop-color="#2c4e84"/><stop offset="0.0728" stop-color="#2d4e84"/><stop offset="0.0764" stop-color="#2e4f85"/><stop offset="0.0782" stop-color="#335287"/><stop offset="0.0835" stop-color="#455f92"/><stop offset="0.0853" stop-color="#4b6396"/><stop offset="0.0906" stop-color="#576b9d"/><stop offset="0.0995" stop-color="#8286ae"/><stop offset="0.1048" stop-color="#9b95b9"/><stop offset="0.1137" stop-color="#8f8aae"/><stop offset="0.1172" stop-color="#8a86aa"/><stop offset="0.1226" stop-color="#9c8dad"/><stop offset="0.1261" stop-color="#a992af"/><stop offset="0.1314" stop-color="#be9bb3"/><stop offset="0.1332" stop-color="#bf9cb4"/><stop offset="0.1403" stop-color="#c19db4"/><stop offset="0.1474" stop-color="#c49eb5"/><stop offset="0.1528" stop-color="#c59fb6"/><stop offset="0.1581" stop-color="#c7a0b6"/><stop offset="0.1652" stop-color="#be9bb4"/><stop offset="0.1705" stop-color="#b798b3"/><stop offset="0.1758" stop-color="#b094b2"/><stop offset="0.1829" stop-color="#a790b0"/><stop offset="0.1883" stop-color="#a38eaf"/><stop offset="0.1972" stop-color="#9b8bad"/><stop offset="0.2007" stop-color="#9a8aac"/><stop offset="0.2060" stop-color="#b091ad"/><stop offset="0.2149" stop-color="#d49cb0"/><stop offset="0.2185" stop-color="#d69db1"/><stop offset="0.2238" stop-color="#db9fb2"/><stop offset="0.2256" stop-color="#dca0b2"/><stop offset="0.2327" stop-color="#8084ac"/><stop offset="0.2362" stop-color="#8084ac"/><stop offset="0.2433" stop-color="#8084ac"/><stop offset="0.2504" stop-color="#8084ac"/><stop offset="0.2522" stop-color="#ebe1eb"/><stop offset="0.3037" stop-color="#ebe1ec"/><stop offset="0.3925" stop-color="#e3dbea"/><stop offset="0.4813" stop-color="#c3c2de"/><stop offset="0.5258" stop-color="#acb0d4"/><stop offset="0.5702" stop-color="#99a8cc"/><stop offset="0.6234" stop-color="#899cc6"/><stop offset="0.6501" stop-color="#7b95c1"/><stop offset="0.6590" stop-color="#7793c0"/><stop offset="0.7034" stop-color="#6289b8"/><stop offset="0.7123" stop-color="#5e87b7"/><stop offset="0.7478" stop-color="#4f7fb1"/><stop offset="0.8366" stop-color="#497baf"/><stop offset="0.9254" stop-color="#4175aa"/><stop offset="0.9698" stop-color="#3971a7"/><stop offset="1.0000" stop-color="#346da6"/></linearGradient><linearGradient id="c12" x1="0" y1="0" x2="0" y2="1"><stop offset="0.0000" stop-color="#2c4d82"/><stop offset="0.0195" stop-color="#31548a"/><stop offset="0.0284" stop-color="#2f5288"/><stop offset="0.0373" stop-color="#2e5086"/><stop offset="0.0462" stop-color="#2c4e84"/><stop offset="0.0551" stop-color="#2c4e84"/><stop offset="0.0586" stop-color="#2c4e84"/><stop offset="0.0657" stop-color="#2d4e84"/><stop offset="0.0693" stop-color="#2d4e84"/><stop offset="0.0728" stop-color="#2d4f84"/><stop offset="0.0764" stop-color="#2d4f84"/><stop offset="0.0782" stop-color="#325287"/><stop offset="0.0835" stop-color="#405c90"/><stop offset="0.0853" stop-color="#455f93"/><stop offset="0.0906" stop-color="#53699c"/><stop offset="0.0995" stop-color="#8086af"/><stop offset="0.1048" stop-color="#9995b9"/><stop offset="0.1137" stop-color="#8f8cb0"/><stop offset="0.1172" stop-color="#8a88ac"/><stop offset="0.1226" stop-color="#9d90af"/><stop offset="0.1261" stop-color="#a994b1"/><stop offset="0.1314" stop-color="#bb9cb5"/><stop offset="0.1332" stop-color="#bb9cb5"/><stop offset="0.1403" stop-color="#bd9db5"/><stop offset="0.1474" stop-color="#bf9eb6"/><stop offset="0.1528" stop-color="#c09eb6"/><stop offset="0.1581" stop-color="#c29fb6"/><stop offset="0.1652" stop-color="#b99bb5"/><stop offset="0.1705" stop-color="#b397b3"/><stop offset="0.1758" stop-color="#ad94b2"/><stop offset="0.1829" stop-color="#a590b0"/><stop offset="0.1883" stop-color="#a18eaf"/><stop offset="0.1972" stop-color="#9a8bad"/><stop offset="0.2007" stop-color="#988aad"/><stop offset="0.2060" stop-color="#ab90ae"/><stop offset="0.2149" stop-color="#cc9ab0"/><stop offset="0.2185" stop-color="#ce9bb1"/><stop offset="0.2238" stop-color="#d29db1"/><stop offset="0.2256" stop-color="#d39eb2"/><stop offset="0.2327" stop-color="#8084ac"/><stop offset="0.2362" stop-color="#8084ac"/><stop offset="0.2433" stop-color="#8084ac"/><stop offset="0.2504" stop-color="#8084ac"/><stop offset="0.2522" stop-color="#ece2ec"/><stop offset="0.3037" stop-color="#ebe1eb"/><stop offset="0.3925" stop-color="#e1dae9"/><stop offset="0.4813" stop-color="#c2c2dd"/><stop offset="0.5258" stop-color="#acb1d4"/><stop offset="0.5702" stop-color="#9aa9cc"/><stop offset="0.6234" stop-color="#8a9dc6"/><stop offset="0.6501" stop-color="#7e97c2"/><stop offset="0.6590" stop-color="#7995c0"/><stop offset="0.7034" stop-color="#668bba"/><stop offset="0.7123" stop-color="#628ab8"/><stop offset="0.7478" stop-color="#5382b3"/><stop offset="0.8366" stop-color="#4b7db0"/><stop offset="0.9254" stop-color="#4276aa"/><stop offset="0.9698" stop-color="#3a72a8"/><stop offset="1.0000" stop-color="#356fa7"/></linearGradient><linearGradient id="c13" x1="0" y1="0" x2="0" y2="1"><stop offset="0.0000" stop-color="#2c4d81"/><stop offset="0.0195" stop-color="#305389"/><stop offset="0.0284" stop-color="#2f5288"/><stop offset="0.0373" stop-color="#2e5087"/><stop offset="0.0462" stop-color="#2d4f85"/><stop offset="0.0551" stop-color="#2d4f85"/><stop offset="0.0586" stop-color="#2d4f85"/><stop offset="0.0657" stop-color="#2e4f85"/><stop offset="0.0693" stop-color="#2f4f85"/><stop offset="0.0728" stop-color="#2f4f85"/><stop offset="0.0764" stop-color="#305085"/><stop offset="0.0782" stop-color="#355388"/><stop offset="0.0835" stop-color="#445f92"/><stop offset="0.0853" stop-color="#496295"/><stop offset="0.0906" stop-color="#586d9e"/><stop offset="0.0995" stop-color="#838ab2"/><stop offset="0.1048" stop-color="#9797ba"/><stop offset="0.1137" stop-color="#8f8fb2"/><stop offset="0.1172" stop-color="#8b8caf"/><stop offset="0.1226" stop-color="#9a92b2"/><stop offset="0.1261" stop-color="#a496b3"/><stop offset="0.1314" stop-color="#b39bb6"/><stop offset="0.1332" stop-color="#b39cb6"/><stop offset="0.1403" stop-color="#b49cb6"/><stop offset="0.1474" stop-color="#b69db6"/><stop offset="0.1528" stop-color="#b79db6"/><stop offset="0.1581" stop-color="#b89db7"/><stop offset="0.1652" stop-color="#b199b5"/><stop offset="0.1705" stop-color="#ac97b4"/><stop offset="0.1758" stop-color="#a694b3"/><stop offset="0.1829" stop-color="#9f90b1"/><stop offset="0.1883" stop-color="#9c8fb0"/><stop offset="0.1972" stop-color="#978cae"/><stop offset="0.2007" stop-color="#958bae"/><stop offset="0.2060" stop-color="#a590af"/><stop offset="0.2149" stop-color="#bf97b0"/><stop offset="0.2185" stop-color="#c198b1"/><stop offset="0.2238" stop-color="#c49ab1"/><stop offset="0.2256" stop-color="#c59ab1"/><stop offset="0.2327" stop-color="#8085ad"/><stop offset="0.2362" stop-color="#8085ac"/><stop offset="0.2433" stop-color="#8084ac"/><stop offset="0.2504" stop-color="#8084ac"/><stop offset="0.2522" stop-color="#ede3ec"/><stop offset="0.3037" stop-color="#e9e0eb"/><stop offset="0.3925" stop-color="#ddd8e7"/><stop offset="0.4813" stop-color="#c0c1dc"/><stop offset="0.5258" stop-color="#abb2d3"/><stop offset="0.5702" stop-color="#9baacc"/><stop offset="0.6234" stop-color="#8b9fc6"/><stop offset="0.6501" stop-color="#7f99c2"/><stop offset="0.6590" stop-color="#7b97c1"/><stop offset="0.7034" stop-color="#698eba"/><stop offset="0.7123" stop-color="#668cb9"/><stop offset="0.7478" stop-color="#5885b4"/><stop offset="0.8366" stop-color="#4d7eb0"/><stop offset="0.9254" stop-color="#4175a9"/><stop offset="0.9698" stop-color="#3a72a8"/><stop offset="1.0000" stop-color="#3670a8"/></linearGradient><linearGradient id="c14" x1="0" y1="0" x2="0" y2="1"><stop offset="0.0000" stop-color="#2c4d81"/><stop offset="0.0195" stop-color="#2f5288"/><stop offset="0.0284" stop-color="#2f5288"/><stop offset="0.0373" stop-color="#2e5087"/><stop offset="0.0462" stop-color="#2d4f86"/><stop offset="0.0551" stop-color="#2d4f86"/><stop offset="0.0586" stop-color="#2e4f86"/><stop offset="0.0657" stop-color="#2f5086"/><stop offset="0.0693" stop-color="#305086"/><stop offset="0.0728" stop-color="#315086"/><stop offset="0.0764" stop-color="#325186"/><stop offset="0.0782" stop-color="#375589"/><stop offset="0.0835" stop-color="#476193"/><stop offset="0.0853" stop-color="#4d6597"/><stop offset="0.0906" stop-color="#5d72a1"/><stop offset="0.0995" stop-color="#868fb5"/><stop offset="0.1048" stop-color="#9699bb"/><stop offset="0.1137" stop-color="#8f92b5"/><stop offset="0.1172" stop-color="#8c90b2"/><stop offset="0.1226" stop-color="#9794b4"/><stop offset="0.1261" stop-color="#9f97b5"/><stop offset="0.1314" stop-color="#aa9bb7"/><stop offset="0.1332" stop-color="#ab9bb7"/><stop offset="0.1403" stop-color="#ac9bb7"/><stop offset="0.1474" stop-color="#ac9bb7"/><stop offset="0.1528" stop-color="#ad9bb7"/><stop offset="0.1581" stop-color="#ae9bb7"/><stop offset="0.1652" stop-color="#a898b6"/><stop offset="0.1705" stop-color="#a496b5"/><stop offset="0.1758" stop-color="#a093b3"/><stop offset="0.1829" stop-color="#9a90b2"/><stop offset="0.1883" stop-color="#988fb1"/><stop offset="0.1972" stop-color="#938caf"/><stop offset="0.2007" stop-color="#918baf"/><stop offset="0.2060" stop-color="#9e8faf"/><stop offset="0.2149" stop-color="#b295b0"/><stop offset="0.2185" stop-color="#b495b0"/><stop offset="0.2238" stop-color="#b696b1"/><stop offset="0.2256" stop-color="#b696b1"/><stop offset="0.2327" stop-color="#8185ad"/><stop offset="0.2362" stop-color="#8185ad"/><stop offset="0.2433" stop-color="#8085ac"/><stop offset="0.2504" stop-color="#8084ac"/><stop offset="0.2522" stop-color="#eee3ec"/><stop offset="0.3037" stop-color="#e8dfea"/><stop offset="0.3925" stop-color="#d9d6e5"/><stop offset="0.4813" stop-color="#bdc0da"/><stop offset="0.5258" stop-color="#aab3d2"/><stop offset="0.5702" stop-color="#9babcc"/><stop offset="0.6234" stop-color="#8ca0c6"/><stop offset="0.6501" stop-color="#819bc2"/><stop offset="0.6590" stop-color="#7d99c1"/><stop offset="0.7034" stop-color="#6d90bb"/><stop offset="0.7123" stop-color="#698eba"/><stop offset="0.7478" stop-color="#5c87b5"/><stop offset="0.8366" stop-color="#4f7fb0"/><stop offset="0.9254" stop-color="#4075a9"/><stop offset="0.9698" stop-color="#3a73a9"/><stop offset="1.0000" stop-color="#3771a9"/></linearGradient><linearGradient id="c15" x1="0" y1="0" x2="0" y2="1"><stop offset="0.0000" stop-color="#2c4c81"/><stop offset="0.0195" stop-color="#2f5187"/><stop offset="0.0284" stop-color="#2f5188"/><stop offset="0.0373" stop-color="#2e5087"/><stop offset="0.0462" stop-color="#2d4f86"/><stop offset="0.0551" stop-color="#2d4f86"/><stop offset="0.0586" stop-color="#2e5086"/><stop offset="0.0657" stop-color="#315086"/><stop offset="0.0693" stop-color="#325186"/><stop offset="0.0728" stop-color="#335186"/><stop offset="0.0764" stop-color="#345186"/><stop offset="0.0782" stop-color="#3a568a"/><stop offset="0.0835" stop-color="#4b6495"/><stop offset="0.0853" stop-color="#516999"/><stop offset="0.0906" stop-color="#6277a4"/><stop offset="0.0995" stop-color="#8994b8"/><stop offset="0.1048" stop-color="#949abc"/><stop offset="0.1137" stop-color="#8f95b7"/><stop offset="0.1172" stop-color="#8c93b5"/><stop offset="0.1226" stop-color="#9596b7"/><stop offset="0.1261" stop-color="#9a98b7"/><stop offset="0.1314" stop-color="#a29bb9"/><stop offset="0.1332" stop-color="#a29bb8"/><stop offset="0.1403" stop-color="#a39ab8"/><stop offset="0.1474" stop-color="#a39ab8"/><stop offset="0.1528" stop-color="#a49ab8"/><stop offset="0.1581" stop-color="#a49ab7"/><stop offset="0.1652" stop-color="#a097b6"/><stop offset="0.1705" stop-color="#9c95b5"/><stop offset="0.1758" stop-color="#9993b4"/><stop offset="0.1829" stop-color="#9590b3"/><stop offset="0.1883" stop-color="#938fb2"/><stop offset="0.1972" stop-color="#8f8db0"/><stop offset="0.2007" stop-color="#8e8cb0"/><stop offset="0.2060" stop-color="#978eb0"/><stop offset="0.2149" stop-color="#a592b0"/><stop offset="0.2185" stop-color="#a692b0"/><stop offset="0.2238" stop-color="#a892b0"/><stop offset="0.2256" stop-color="#a892b0"/><stop offset="0.2327" stop-color="#8186ad"/><stop offset="0.2362" stop-color="#8186ad"/><stop offset="0.2433" stop-color="#8085ad"/><stop offset="0.2504" stop-color="#8084ac"/><stop offset="0.2522" stop-color="#eee3ec"/><stop offset="0.3037" stop-color="#e6dee9"/><stop offset="0.3925" stop-color="#d5d3e3"/><stop offset="0.4813" stop-color="#bac0d9"/><stop offset="0.5258" stop-color="#a9b4d2"/><stop offset="0.5702" stop-color="#9baccc"/><stop offset="0.6234" stop-color="#8ca2c6"/><stop offset="0.6501" stop-color="#829dc3"/><stop offset="0.6590" stop-color="#7f9bc2"/><stop offset="0.7034" stop-color="#7093bc"/><stop offset="0.7123" stop-color="#6d91bb"/><stop offset="0.7478" stop-color="#618ab7"/><stop offset="0.8366" stop-color="#5180b1"/><stop offset="0.9254" stop-color="#4075a9"/><stop offset="0.9698" stop-color="#3b74a9"/><stop offset="1.0000" stop-color="#3773a9"/></linearGradient><linearGradient id="c16" x1="0" y1="0" x2="0" y2="1"><stop offset="0.0000" stop-color="#2c4c81"/><stop offset="0.0195" stop-color="#2e5087"/><stop offset="0.0284" stop-color="#2e5188"/><stop offset="0.0373" stop-color="#2e5087"/><stop offset="0.0462" stop-color="#2d4f87"/><stop offset="0.0551" stop-color="#2d4f87"/><stop offset="0.0586" stop-color="#2f5087"/><stop offset="0.0657" stop-color="#325187"/><stop offset="0.0693" stop-color="#335187"/><stop offset="0.0728" stop-color="#355287"/><stop offset="0.0764" stop-color="#365287"/><stop offset="0.0782" stop-color="#3c588b"/><stop offset="0.0835" stop-color="#4f6797"/><stop offset="0.0853" stop-color="#556c9a"/><stop offset="0.0906" stop-color="#677ba6"/><stop offset="0.0995" stop-color="#8b98bb"/><stop offset="0.1048" stop-color="#929cbd"/><stop offset="0.1137" stop-color="#8f98ba"/><stop offset="0.1172" stop-color="#8d97b9"/><stop offset="0.1226" stop-color="#9298b9"/><stop offset="0.1261" stop-color="#9599b9"/><stop offset="0.1314" stop-color="#9a9bba"/><stop offset="0.1332" stop-color="#9a9aba"/><stop offset="0.1403" stop-color="#9a9ab9"/><stop offset="0.1474" stop-color="#9a99b8"/><stop offset="0.1528" stop-color="#9a98b8"/><stop offset="0.1581" stop-color="#9a98b8"/><stop offset="0.1652" stop-color="#9796b7"/><stop offset="0.1705" stop-color="#9594b6"/><stop offset="0.1758" stop-color="#9393b5"/><stop offset="0.1829" stop-color="#9090b4"/><stop offset="0.1883" stop-color="#8e8fb3"/><stop offset="0.1972" stop-color="#8c8db1"/><stop offset="0.2007" stop-color="#8b8cb1"/><stop offset="0.2060" stop-color="#908db1"/><stop offset="0.2149" stop-color="#998fb1"/><stop offset="0.2185" stop-color="#998fb0"/><stop offset="0.2238" stop-color="#9a8fb0"/><stop offset="0.2256" stop-color="#9a8fb0"/><stop offset="0.2327" stop-color="#8186ae"/><stop offset="0.2362" stop-color="#8186ad"/><stop offset="0.2433" stop-color="#8185ad"/><stop offset="0.2504" stop-color="#8084ac"/><stop offset="0.2522" stop-color="#efe3ec"/><stop offset="0.3037" stop-color="#e5dde8"/><stop offset="0.3925" stop-color="#d1d1e1"/><stop offset="0.4813" stop-color="#b8bfd7"/><stop offset="0.5258" stop-color="#a9b5d1"/><stop offset="0.5702" stop-color="#9badcc"/><stop offset="0.6234" stop-color="#8da4c6"/><stop offset="0.6501" stop-color="#849fc3"/><stop offset="0.6590" stop-color="#819dc2"/><stop offset="0.7034" stop-color="#7395bd"/><stop offset="0.7123" stop-color="#7193bc"/><stop offset="0.7478" stop-color="#658db8"/><stop offset="0.8366" stop-color="#5281b1"/><stop offset="0.9254" stop-color="#3f75a9"/><stop offset="0.9698" stop-color="#3b74aa"/><stop offset="1.0000" stop-color="#3874aa"/></linearGradient><linearGradient id="c17" x1="0" y1="0" x2="0" y2="1"><stop offset="0.0000" stop-color="#2c4c80"/><stop offset="0.0195" stop-color="#2e4f86"/><stop offset="0.0284" stop-color="#2e5088"/><stop offset="0.0373" stop-color="#2e5088"/><stop offset="0.0462" stop-color="#2e5088"/><stop offset="0.0551" stop-color="#2e5088"/><stop offset="0.0586" stop-color="#305088"/><stop offset="0.0657" stop-color="#335288"/><stop offset="0.0693" stop-color="#355288"/><stop offset="0.0728" stop-color="#375388"/><stop offset="0.0764" stop-color="#395388"/><stop offset="0.0782" stop-color="#3f598c"/><stop offset="0.0835" stop-color="#526a98"/><stop offset="0.0853" stop-color="#596f9c"/><stop offset="0.0906" stop-color="#6c80a9"/><stop offset="0.0995" stop-color="#8e9dbe"/><stop offset="0.1048" stop-color="#909ebf"/><stop offset="0.1137" stop-color="#8f9bbd"/><stop offset="0.1172" stop-color="#8e9abc"/><stop offset="0.1226" stop-color="#8f9abb"/><stop offset="0.1261" stop-color="#909abb"/><stop offset="0.1314" stop-color="#929abb"/><stop offset="0.1332" stop-color="#929abb"/><stop offset="0.1403" stop-color="#9199ba"/><stop offset="0.1474" stop-color="#9198b9"/><stop offset="0.1528" stop-color="#9097b9"/><stop offset="0.1581" stop-color="#9096b8"/><stop offset="0.1652" stop-color="#8e95b7"/><stop offset="0.1705" stop-color="#8d93b6"/><stop offset="0.1758" stop-color="#8c92b5"/><stop offset="0.1829" stop-color="#8a90b4"/><stop offset="0.1883" stop-color="#8a8fb4"/><stop offset="0.1972" stop-color="#888eb2"/><stop offset="0.2007" stop-color="#878db2"/><stop offset="0.2060" stop-color="#898db1"/><stop offset="0.2149" stop-color="#8c8cb1"/><stop offset="0.2185" stop-color="#8c8cb0"/><stop offset="0.2238" stop-color="#8c8bb0"/><stop offset="0.2256" stop-color="#8c8bb0"/><stop offset="0.2327" stop-color="#8287ae"/><stop offset="0.2362" stop-color="#8186ae"/><stop offset="0.2433" stop-color="#8185ad"/><stop offset="0.2504" stop-color="#8084ac"/><stop offset="0.2522" stop-color="#f0e4ec"/><stop offset="0.3037" stop-color="#e3dce7"/><stop offset="0.3925" stop-color="#cdcedf"/><stop offset="0.4813" stop-color="#b5bed6"/><stop offset="0.5258" stop-color="#a8b6d1"/><stop offset="0.5702" stop-color="#9caecc"/><stop offset="0.6234" stop-color="#8da5c6"/><stop offset="0.6501" stop-color="#86a1c4"/><stop offset="0.6590" stop-color="#839fc3"/><stop offset="0.7034" stop-color="#7797be"/><stop offset="0.7123" stop-color="#7496bd"/><stop offset="0.7478" stop-color="#6a90b9"/><stop offset="0.8366" stop-color="#5482b1"/><stop offset="0.9254" stop-color="#3e74a8"/><stop offset="0.9698" stop-color="#3b75aa"/><stop offset="1.0000" stop-color="#3975ab"/></linearGradient><linearGradient id="c18" x1="0" y1="0" x2="0" y2="1"><stop offset="0.0000" stop-color="#2c4c80"/><stop offset="0.0195" stop-color="#2e4f86"/><stop offset="0.0284" stop-color="#2e5088"/><stop offset="0.0373" stop-color="#2e5088"/><stop offset="0.0462" stop-color="#2e5088"/><stop offset="0.0551" stop-color="#2e5088"/><stop offset="0.0586" stop-color="#305188"/><stop offset="0.0657" stop-color="#345288"/><stop offset="0.0693" stop-color="#365388"/><stop offset="0.0728" stop-color="#385388"/><stop offset="0.0764" stop-color="#3a5488"/><stop offset="0.0782" stop-color="#415a8c"/><stop offset="0.0835" stop-color="#546b99"/><stop offset="0.0853" stop-color="#5b719e"/><stop offset="0.0906" stop-color="#6f83aa"/><stop offset="0.0995" stop-color="#90a0c0"/><stop offset="0.1048" stop-color="#8f9fbf"/><stop offset="0.1137" stop-color="#8e9dbe"/><stop offset="0.1172" stop-color="#8e9dbe"/><stop offset="0.1226" stop-color="#8e9cbd"/><stop offset="0.1261" stop-color="#8d9bbc"/><stop offset="0.1314" stop-color="#8d9abc"/><stop offset="0.1332" stop-color="#8c9abc"/><stop offset="0.1403" stop-color="#8c98bb"/><stop offset="0.1474" stop-color="#8b97ba"/><stop offset="0.1528" stop-color="#8a96b9"/><stop offset="0.1581" stop-color="#8a95b8"/><stop offset="0.1652" stop-color="#8994b7"/><stop offset="0.1705" stop-color="#8893b7"/><stop offset="0.1758" stop-color="#8892b6"/><stop offset="0.1829" stop-color="#8791b5"/><stop offset="0.1883" stop-color="#8790b4"/><stop offset="0.1972" stop-color="#868eb3"/><stop offset="0.2007" stop-color="#858db3"/><stop offset="0.2060" stop-color="#858cb2"/><stop offset="0.2149" stop-color="#848bb1"/><stop offset="0.2185" stop-color="#838ab0"/><stop offset="0.2238" stop-color="#8389b0"/><stop offset="0.2256" stop-color="#8389af"/><stop offset="0.2327" stop-color="#8287ae"/><stop offset="0.2362" stop-color="#8287ae"/><stop offset="0.2433" stop-color="#8185ad"/><stop offset="0.2504" stop-color="#8084ac"/><stop offset="0.2522" stop-color="#f0e4ec"/><stop offset="0.3037" stop-color="#e2dbe7"/><stop offset="0.3925" stop-color="#cbcdde"/><stop offset="0.4813" stop-color="#b3bed5"/><stop offset="0.5258" stop-color="#a8b6d0"/><stop offset="0.5702" stop-color="#9cafcc"/><stop offset="0.6234" stop-color="#8ea6c7"/><stop offset="0.6501" stop-color="#87a2c4"/><stop offset="0.6590" stop-color="#84a0c3"/><stop offset="0.7034" stop-color="#7999be"/><stop offset="0.7123" stop-color="#7697be"/><stop offset="0.7478" stop-color="#6d92ba"/><stop offset="0.8366" stop-color="#5583b1"/><stop offset="0.9254" stop-color="#3e74a8"/><stop offset="0.9698" stop-color="#3b71a4"/><stop offset="1.0000" stop-color="#3972a6"/></linearGradient><linearGradient id="c19" x1="0" y1="0" x2="0" y2="1"><stop offset="0.0000" stop-color="#2c4c80"/><stop offset="0.0195" stop-color="#2e4f86"/><stop offset="0.0284" stop-color="#2f5089"/><stop offset="0.0373" stop-color="#2f5089"/><stop offset="0.0462" stop-color="#2e5088"/><stop offset="0.0551" stop-color="#2e5088"/><stop offset="0.0586" stop-color="#305188"/><stop offset="0.0657" stop-color="#345288"/><stop offset="0.0693" stop-color="#365388"/><stop offset="0.0728" stop-color="#385388"/><stop offset="0.0764" stop-color="#3a5488"/><stop offset="0.0782" stop-color="#415a8c"/><stop offset="0.0835" stop-color="#546b99"/><stop offset="0.0853" stop-color="#5b719e"/><stop offset="0.0906" stop-color="#6f83aa"/><stop offset="0.0995" stop-color="#90a0c0"/><stop offset="0.1048" stop-color="#8f9fbf"/><stop offset="0.1137" stop-color="#8e9dbe"/><stop offset="0.1172" stop-color="#8e9dbe"/><stop offset="0.1226" stop-color="#8e9cbd"/><stop offset="0.1261" stop-color="#8d9bbc"/><stop offset="0.1314" stop-color="#8d9abc"/><stop offset="0.1332" stop-color="#8c9abc"/><stop offset="0.1403" stop-color="#8c98bb"/><stop offset="0.1474" stop-color="#8b97ba"/><stop offset="0.1528" stop-color="#8a96b9"/><stop offset="0.1581" stop-color="#8a95b8"/><stop offset="0.1652" stop-color="#8994b7"/><stop offset="0.1705" stop-color="#8893b7"/><stop offset="0.1758" stop-color="#8892b6"/><stop offset="0.1829" stop-color="#8791b5"/><stop offset="0.1883" stop-color="#8790b4"/><stop offset="0.1972" stop-color="#868eb3"/><stop offset="0.2007" stop-color="#858db3"/><stop offset="0.2060" stop-color="#858cb2"/><stop offset="0.2149" stop-color="#848bb1"/><stop offset="0.2185" stop-color="#838ab0"/><stop offset="0.2238" stop-color="#8389b0"/><stop offset="0.2256" stop-color="#8389af"/><stop offset="0.2327" stop-color="#8287ae"/><stop offset="0.2362" stop-color="#8287ae"/><stop offset="0.2433" stop-color="#8185ad"/><stop offset="0.2504" stop-color="#8084ac"/><stop offset="0.2522" stop-color="#f0e4ec"/><stop offset="0.3037" stop-color="#e2dbe7"/><stop offset="0.3925" stop-color="#cbcdde"/><stop offset="0.4813" stop-color="#b3bed5"/><stop offset="0.5258" stop-color="#a8b6d0"/><stop offset="0.5702" stop-color="#9cafcc"/><stop offset="0.6234" stop-color="#8ea6c7"/><stop offset="0.6501" stop-color="#87a2c4"/><stop offset="0.6590" stop-color="#84a0c3"/><stop offset="0.7034" stop-color="#7999be"/><stop offset="0.7123" stop-color="#7697be"/><stop offset="0.7478" stop-color="#6d92ba"/><stop offset="0.8366" stop-color="#5583b1"/><stop offset="0.9254" stop-color="#3e74a8"/><stop offset="0.9698" stop-color="#386795"/><stop offset="1.0000" stop-color="#366796"/></linearGradient><linearGradient id="c20" x1="0" y1="0" x2="0" y2="1"><stop offset="0.0000" stop-color="#2c4c80"/><stop offset="0.0195" stop-color="#2e4f87"/><stop offset="0.0284" stop-color="#30518a"/><stop offset="0.0373" stop-color="#2f5189"/><stop offset="0.0462" stop-color="#2f5089"/><stop offset="0.0551" stop-color="#2e5088"/><stop offset="0.0586" stop-color="#305188"/><stop offset="0.0657" stop-color="#345288"/><stop offset="0.0693" stop-color="#365388"/><stop offset="0.0728" stop-color="#385388"/><stop offset="0.0764" stop-color="#3a5488"/><stop offset="0.0782" stop-color="#415a8c"/><stop offset="0.0835" stop-color="#546b99"/><stop offset="0.0853" stop-color="#5b719e"/><stop offset="0.0906" stop-color="#6f83aa"/><stop offset="0.0995" stop-color="#90a0c0"/><stop offset="0.1048" stop-color="#8f9fbf"/><stop offset="0.1137" stop-color="#8e9dbe"/><stop offset="0.1172" stop-color="#8e9dbe"/><stop offset="0.1226" stop-color="#8e9cbd"/><stop offset="0.1261" stop-color="#8d9bbc"/><stop offset="0.1314" stop-color="#8d9abc"/><stop offset="0.1332" stop-color="#8c9abc"/><stop offset="0.1403" stop-color="#8c98bb"/><stop offset="0.1474" stop-color="#8b97ba"/><stop offset="0.1528" stop-color="#8a96b9"/><stop offset="0.1581" stop-color="#8a95b8"/><stop offset="0.1652" stop-color="#8994b7"/><stop offset="0.1705" stop-color="#8893b7"/><stop offset="0.1758" stop-color="#8892b6"/><stop offset="0.1829" stop-color="#8791b5"/><stop offset="0.1883" stop-color="#8790b4"/><stop offset="0.1972" stop-color="#868eb3"/><stop offset="0.2007" stop-color="#858db3"/><stop offset="0.2060" stop-color="#858cb2"/><stop offset="0.2149" stop-color="#848bb1"/><stop offset="0.2185" stop-color="#838ab0"/><stop offset="0.2238" stop-color="#8389b0"/><stop offset="0.2256" stop-color="#8389af"/><stop offset="0.2327" stop-color="#8287ae"/><stop offset="0.2362" stop-color="#8287ae"/><stop offset="0.2433" stop-color="#8185ad"/><stop offset="0.2504" stop-color="#8084ac"/><stop offset="0.2522" stop-color="#f0e4ec"/><stop offset="0.3037" stop-color="#e2dbe7"/><stop offset="0.3925" stop-color="#cbcdde"/><stop offset="0.4813" stop-color="#b3bed5"/><stop offset="0.5258" stop-color="#a8b6d0"/><stop offset="0.5702" stop-color="#9cafcc"/><stop offset="0.6234" stop-color="#8ea6c7"/><stop offset="0.6501" stop-color="#87a2c4"/><stop offset="0.6590" stop-color="#84a0c3"/><stop offset="0.7034" stop-color="#7999be"/><stop offset="0.7123" stop-color="#7697be"/><stop offset="0.7478" stop-color="#6d92ba"/><stop offset="0.8366" stop-color="#5583b1"/><stop offset="0.9254" stop-color="#3e74a8"/><stop offset="0.9698" stop-color="#355c85"/><stop offset="1.0000" stop-color="#345d86"/></linearGradient><linearGradient id="c21" x1="0" y1="0" x2="0" y2="1"><stop offset="0.0000" stop-color="#2c4c80"/><stop offset="0.0195" stop-color="#2f4f87"/><stop offset="0.0284" stop-color="#30518a"/><stop offset="0.0373" stop-color="#2f5189"/><stop offset="0.0462" stop-color="#2f5089"/><stop offset="0.0551" stop-color="#2e5088"/><stop offset="0.0586" stop-color="#305188"/><stop offset="0.0657" stop-color="#345288"/><stop offset="0.0693" stop-color="#365388"/><stop offset="0.0728" stop-color="#385388"/><stop offset="0.0764" stop-color="#3a5488"/><stop offset="0.0782" stop-color="#415a8c"/><stop offset="0.0835" stop-color="#546b99"/><stop offset="0.0853" stop-color="#5b719e"/><stop offset="0.0906" stop-color="#6f83aa"/><stop offset="0.0995" stop-color="#90a0c0"/><stop offset="0.1048" stop-color="#8f9fbf"/><stop offset="0.1137" stop-color="#8e9dbe"/><stop offset="0.1172" stop-color="#8e9dbe"/><stop offset="0.1226" stop-color="#8e9cbd"/><stop offset="0.1261" stop-color="#8d9bbc"/><stop offset="0.1314" stop-color="#8d9abc"/><stop offset="0.1332" stop-color="#8c9abc"/><stop offset="0.1403" stop-color="#8c98bb"/><stop offset="0.1474" stop-color="#8b97ba"/><stop offset="0.1528" stop-color="#8a96b9"/><stop offset="0.1581" stop-color="#8a95b8"/><stop offset="0.1652" stop-color="#8994b7"/><stop offset="0.1705" stop-color="#8893b7"/><stop offset="0.1758" stop-color="#8892b6"/><stop offset="0.1829" stop-color="#8791b5"/><stop offset="0.1883" stop-color="#8790b4"/><stop offset="0.1972" stop-color="#868eb3"/><stop offset="0.2007" stop-color="#858db3"/><stop offset="0.2060" stop-color="#858cb2"/><stop offset="0.2149" stop-color="#848bb1"/><stop offset="0.2185" stop-color="#838ab0"/><stop offset="0.2238" stop-color="#8389b0"/><stop offset="0.2256" stop-color="#8389af"/><stop offset="0.2327" stop-color="#8287ae"/><stop offset="0.2362" stop-color="#8287ae"/><stop offset="0.2433" stop-color="#8185ad"/><stop offset="0.2504" stop-color="#8084ac"/><stop offset="0.2522" stop-color="#f0e4ec"/><stop offset="0.3037" stop-color="#e2dbe7"/><stop offset="0.3925" stop-color="#cbcdde"/><stop offset="0.4813" stop-color="#b3bed5"/><stop offset="0.5258" stop-color="#a8b6d0"/><stop offset="0.5702" stop-color="#9cafcc"/><stop offset="0.6234" stop-color="#8ea6c7"/><stop offset="0.6501" stop-color="#87a2c4"/><stop offset="0.6590" stop-color="#84a0c3"/><stop offset="0.7034" stop-color="#7999be"/><stop offset="0.7123" stop-color="#7697be"/><stop offset="0.7478" stop-color="#6d92ba"/><stop offset="0.8366" stop-color="#5583b1"/><stop offset="0.9254" stop-color="#3e74a8"/><stop offset="0.9698" stop-color="#325275"/><stop offset="1.0000" stop-color="#315276"/></linearGradient><linearGradient id="c22" x1="0" y1="0" x2="0" y2="1"><stop offset="0.0000" stop-color="#2c4c80"/><stop offset="0.0195" stop-color="#2f5087"/><stop offset="0.0284" stop-color="#31518b"/><stop offset="0.0373" stop-color="#30518a"/><stop offset="0.0462" stop-color="#2f5089"/><stop offset="0.0551" stop-color="#2e5088"/><stop offset="0.0586" stop-color="#305188"/><stop offset="0.0657" stop-color="#345288"/><stop offset="0.0693" stop-color="#365388"/><stop offset="0.0728" stop-color="#385388"/><stop offset="0.0764" stop-color="#3a5488"/><stop offset="0.0782" stop-color="#415a8c"/><stop offset="0.0835" stop-color="#546b99"/><stop offset="0.0853" stop-color="#5b719e"/><stop offset="0.0906" stop-color="#6f83aa"/><stop offset="0.0995" stop-color="#90a0c0"/><stop offset="0.1048" stop-color="#8f9fbf"/><stop offset="0.1137" stop-color="#8e9dbe"/><stop offset="0.1172" stop-color="#8e9dbe"/><stop offset="0.1226" stop-color="#8e9cbd"/><stop offset="0.1261" stop-color="#8d9bbc"/><stop offset="0.1314" stop-color="#8d9abc"/><stop offset="0.1332" stop-color="#8c9abc"/><stop offset="0.1403" stop-color="#8c98bb"/><stop offset="0.1474" stop-color="#8b97ba"/><stop offset="0.1528" stop-color="#8a96b9"/><stop offset="0.1581" stop-color="#8a95b8"/><stop offset="0.1652" stop-color="#8994b7"/><stop offset="0.1705" stop-color="#8893b7"/><stop offset="0.1758" stop-color="#8892b6"/><stop offset="0.1829" stop-color="#8791b5"/><stop offset="0.1883" stop-color="#8790b4"/><stop offset="0.1972" stop-color="#868eb3"/><stop offset="0.2007" stop-color="#858db3"/><stop offset="0.2060" stop-color="#858cb2"/><stop offset="0.2149" stop-color="#848bb1"/><stop offset="0.2185" stop-color="#838ab0"/><stop offset="0.2238" stop-color="#8389b0"/><stop offset="0.2256" stop-color="#8389af"/><stop offset="0.2327" stop-color="#8287ae"/><stop offset="0.2362" stop-color="#8287ae"/><stop offset="0.2433" stop-color="#8185ad"/><stop offset="0.2504" stop-color="#8084ac"/><stop offset="0.2522" stop-color="#f0e4ec"/><stop offset="0.3037" stop-color="#e2dbe7"/><stop offset="0.3925" stop-color="#cbcdde"/><stop offset="0.4813" stop-color="#b3bed5"/><stop offset="0.5258" stop-color="#a8b6d0"/><stop offset="0.5702" stop-color="#9cafcc"/><stop offset="0.6234" stop-color="#8ea6c7"/><stop offset="0.6501" stop-color="#87a2c4"/><stop offset="0.6590" stop-color="#84a0c3"/><stop offset="0.7034" stop-color="#7999be"/><stop offset="0.7123" stop-color="#7697be"/><stop offset="0.7478" stop-color="#6d92ba"/><stop offset="0.8366" stop-color="#5583b1"/><stop offset="0.9254" stop-color="#3e74a8"/><stop offset="0.9698" stop-color="#2f4866"/><stop offset="1.0000" stop-color="#2f4866"/></linearGradient><linearGradient id="c23" x1="0" y1="0" x2="0" y2="1"><stop offset="0.0000" stop-color="#2c4c80"/><stop offset="0.0195" stop-color="#305088"/><stop offset="0.0284" stop-color="#31528b"/><stop offset="0.0373" stop-color="#30518a"/><stop offset="0.0462" stop-color="#2f5189"/><stop offset="0.0551" stop-color="#2e5088"/><stop offset="0.0586" stop-color="#305188"/><stop offset="0.0657" stop-color="#345288"/><stop offset="0.0693" stop-color="#365388"/><stop offset="0.0728" stop-color="#385388"/><stop offset="0.0764" stop-color="#3a5488"/><stop offset="0.0782" stop-color="#415a8c"/><stop offset="0.0835" stop-color="#546b99"/><stop offset="0.0853" stop-color="#5b719e"/><stop offset="0.0906" stop-color="#6f83aa"/><stop offset="0.0995" stop-color="#90a0c0"/><stop offset="0.1048" stop-color="#8f9fbf"/><stop offset="0.1137" stop-color="#8e9dbe"/><stop offset="0.1172" stop-color="#8e9dbe"/><stop offset="0.1226" stop-color="#8e9cbd"/><stop offset="0.1261" stop-color="#8d9bbc"/><stop offset="0.1314" stop-color="#8d9abc"/><stop offset="0.1332" stop-color="#8c9abc"/><stop offset="0.1403" stop-color="#8c98bb"/><stop offset="0.1474" stop-color="#8b97ba"/><stop offset="0.1528" stop-color="#8a96b9"/><stop offset="0.1581" stop-color="#8a95b8"/><stop offset="0.1652" stop-color="#8994b7"/><stop offset="0.1705" stop-color="#8893b7"/><stop offset="0.1758" stop-color="#8892b6"/><stop offset="0.1829" stop-color="#8791b5"/><stop offset="0.1883" stop-color="#8790b4"/><stop offset="0.1972" stop-color="#868eb3"/><stop offset="0.2007" stop-color="#858db3"/><stop offset="0.2060" stop-color="#858cb2"/><stop offset="0.2149" stop-color="#848bb1"/><stop offset="0.2185" stop-color="#838ab0"/><stop offset="0.2238" stop-color="#8389b0"/><stop offset="0.2256" stop-color="#8389af"/><stop offset="0.2327" stop-color="#8287ae"/><stop offset="0.2362" stop-color="#8287ae"/><stop offset="0.2433" stop-color="#8185ad"/><stop offset="0.2504" stop-color="#8084ac"/><stop offset="0.2522" stop-color="#f0e4ec"/><stop offset="0.3037" stop-color="#e2dbe7"/><stop offset="0.3925" stop-color="#cbcdde"/><stop offset="0.4813" stop-color="#b3bed5"/><stop offset="0.5258" stop-color="#a8b6d0"/><stop offset="0.5702" stop-color="#9cafcc"/><stop offset="0.6234" stop-color="#8ea6c7"/><stop offset="0.6501" stop-color="#87a2c4"/><stop offset="0.6590" stop-color="#84a0c3"/><stop offset="0.7034" stop-color="#7999be"/><stop offset="0.7123" stop-color="#7697be"/><stop offset="0.7478" stop-color="#6d92ba"/><stop offset="0.8366" stop-color="#5583b1"/><stop offset="0.9254" stop-color="#3e74a8"/><stop offset="0.9698" stop-color="#2c3d56"/><stop offset="1.0000" stop-color="#2c3d56"/></linearGradient><linearGradient id="c24" x1="0" y1="0" x2="0" y2="1"><stop offset="0.0000" stop-color="#2c4c80"/><stop offset="0.0195" stop-color="#305088"/><stop offset="0.0284" stop-color="#32528c"/><stop offset="0.0373" stop-color="#31518b"/><stop offset="0.0462" stop-color="#2f5189"/><stop offset="0.0551" stop-color="#2e5088"/><stop offset="0.0586" stop-color="#305188"/><stop offset="0.0657" stop-color="#345288"/><stop offset="0.0693" stop-color="#365388"/><stop offset="0.0728" stop-color="#385388"/><stop offset="0.0764" stop-color="#3a5488"/><stop offset="0.0782" stop-color="#415a8c"/><stop offset="0.0835" stop-color="#546b99"/><stop offset="0.0853" stop-color="#5b719e"/><stop offset="0.0906" stop-color="#6f83aa"/><stop offset="0.0995" stop-color="#90a0c0"/><stop offset="0.1048" stop-color="#8f9fbf"/><stop offset="0.1137" stop-color="#8e9dbe"/><stop offset="0.1172" stop-color="#8e9dbe"/><stop offset="0.1226" stop-color="#8e9cbd"/><stop offset="0.1261" stop-color="#8d9bbc"/><stop offset="0.1314" stop-color="#8d9abc"/><stop offset="0.1332" stop-color="#8c9abc"/><stop offset="0.1403" stop-color="#8c98bb"/><stop offset="0.1474" stop-color="#8b97ba"/><stop offset="0.1528" stop-color="#8a96b9"/><stop offset="0.1581" stop-color="#8a95b8"/><stop offset="0.1652" stop-color="#8994b7"/><stop offset="0.1705" stop-color="#8893b7"/><stop offset="0.1758" stop-color="#8892b6"/><stop offset="0.1829" stop-color="#8791b5"/><stop offset="0.1883" stop-color="#8790b4"/><stop offset="0.1972" stop-color="#868eb3"/><stop offset="0.2007" stop-color="#858db3"/><stop offset="0.2060" stop-color="#858cb2"/><stop offset="0.2149" stop-color="#848bb1"/><stop offset="0.2185" stop-color="#838ab0"/><stop offset="0.2238" stop-color="#8389b0"/><stop offset="0.2256" stop-color="#8389af"/><stop offset="0.2327" stop-color="#8287ae"/><stop offset="0.2362" stop-color="#8287ae"/><stop offset="0.2433" stop-color="#8185ad"/><stop offset="0.2504" stop-color="#8084ac"/><stop offset="0.2522" stop-color="#f0e4ec"/><stop offset="0.3037" stop-color="#e2dbe7"/><stop offset="0.3925" stop-color="#cbccde"/><stop offset="0.4813" stop-color="#b3bed5"/><stop offset="0.5258" stop-color="#a7b6d0"/><stop offset="0.5702" stop-color="#9cafcc"/><stop offset="0.6234" stop-color="#8ea6c6"/><stop offset="0.6501" stop-color="#87a2c4"/><stop offset="0.6590" stop-color="#84a0c3"/><stop offset="0.7034" stop-color="#7899be"/><stop offset="0.7123" stop-color="#7697bd"/><stop offset="0.7478" stop-color="#6d91ba"/><stop offset="0.8366" stop-color="#5583b1"/><stop offset="0.9254" stop-color="#3e74a8"/><stop offset="0.9698" stop-color="#2a3448"/><stop offset="1.0000" stop-color="#2a3448"/></linearGradient><linearGradient id="c25" x1="0" y1="0" x2="0" y2="1"><stop offset="0.0000" stop-color="#2c4c80"/><stop offset="0.0195" stop-color="#305088"/><stop offset="0.0284" stop-color="#32528c"/><stop offset="0.0373" stop-color="#31528b"/><stop offset="0.0462" stop-color="#30518a"/><stop offset="0.0551" stop-color="#2f5188"/><stop offset="0.0586" stop-color="#305188"/><stop offset="0.0657" stop-color="#345288"/><stop offset="0.0693" stop-color="#365388"/><stop offset="0.0728" stop-color="#385388"/><stop offset="0.0764" stop-color="#3a5488"/><stop offset="0.0782" stop-color="#415a8c"/><stop offset="0.0835" stop-color="#546b99"/><stop offset="0.0853" stop-color="#5b719e"/><stop offset="0.0906" stop-color="#6f83aa"/><stop offset="0.0995" stop-color="#90a0c0"/><stop offset="0.1048" stop-color="#8f9fbf"/><stop offset="0.1137" stop-color="#8e9dbe"/><stop offset="0.1172" stop-color="#8e9dbe"/><stop offset="0.1226" stop-color="#8e9cbd"/><stop offset="0.1261" stop-color="#8d9bbc"/><stop offset="0.1314" stop-color="#8d9abc"/><stop offset="0.1332" stop-color="#8c9abc"/><stop offset="0.1403" stop-color="#8c98bb"/><stop offset="0.1474" stop-color="#8b97ba"/><stop offset="0.1528" stop-color="#8a96b9"/><stop offset="0.1581" stop-color="#8a95b8"/><stop offset="0.1652" stop-color="#8994b7"/><stop offset="0.1705" stop-color="#8893b7"/><stop offset="0.1758" stop-color="#8892b6"/><stop offset="0.1829" stop-color="#8791b5"/><stop offset="0.1883" stop-color="#8790b4"/><stop offset="0.1972" stop-color="#868eb3"/><stop offset="0.2007" stop-color="#858db3"/><stop offset="0.2060" stop-color="#858cb2"/><stop offset="0.2149" stop-color="#848bb1"/><stop offset="0.2185" stop-color="#838ab0"/><stop offset="0.2238" stop-color="#8389b0"/><stop offset="0.2256" stop-color="#8389af"/><stop offset="0.2327" stop-color="#8287ae"/><stop offset="0.2362" stop-color="#8287ae"/><stop offset="0.2433" stop-color="#8185ad"/><stop offset="0.2504" stop-color="#8084ac"/><stop offset="0.2522" stop-color="#efe3eb"/><stop offset="0.3037" stop-color="#e1dae6"/><stop offset="0.3925" stop-color="#c9cbdd"/><stop offset="0.4813" stop-color="#b2bcd4"/><stop offset="0.5258" stop-color="#a6b5cf"/><stop offset="0.5702" stop-color="#9aadca"/><stop offset="0.6234" stop-color="#8ca4c5"/><stop offset="0.6501" stop-color="#85a0c2"/><stop offset="0.6590" stop-color="#829ec1"/><stop offset="0.7034" stop-color="#7797bd"/><stop offset="0.7123" stop-color="#7495bc"/><stop offset="0.7478" stop-color="#6b8fb8"/><stop offset="0.8366" stop-color="#5380af"/><stop offset="0.9254" stop-color="#3b71a5"/><stop offset="0.9698" stop-color="#2a3347"/><stop offset="1.0000" stop-color="#2a3347"/></linearGradient><linearGradient id="c26" x1="0" y1="0" x2="0" y2="1"><stop offset="0.0000" stop-color="#2c4c80"/><stop offset="0.0195" stop-color="#315189"/><stop offset="0.0284" stop-color="#33538d"/><stop offset="0.0373" stop-color="#31528b"/><stop offset="0.0462" stop-color="#30528a"/><stop offset="0.0551" stop-color="#2f5289"/><stop offset="0.0586" stop-color="#315289"/><stop offset="0.0657" stop-color="#355388"/><stop offset="0.0693" stop-color="#365388"/><stop offset="0.0728" stop-color="#385488"/><stop offset="0.0764" stop-color="#3a5488"/><stop offset="0.0782" stop-color="#415a8c"/><stop offset="0.0835" stop-color="#546b99"/><stop offset="0.0853" stop-color="#5b719e"/><stop offset="0.0906" stop-color="#6f83aa"/><stop offset="0.0995" stop-color="#90a0c0"/><stop offset="0.1048" stop-color="#8f9fbf"/><stop offset="0.1137" stop-color="#8e9dbe"/><stop offset="0.1172" stop-color="#8e9dbe"/><stop offset="0.1226" stop-color="#8e9cbd"/><stop offset="0.1261" stop-color="#8d9bbc"/><stop offset="0.1314" stop-color="#8d9abc"/><stop offset="0.1332" stop-color="#8c9abc"/><stop offset="0.1403" stop-color="#8c98bb"/><stop offset="0.1474" stop-color="#8b97ba"/><stop offset="0.1528" stop-color="#8a96b9"/><stop offset="0.1581" stop-color="#8a95b8"/><stop offset="0.1652" stop-color="#8994b7"/><stop offset="0.1705" stop-color="#8893b7"/><stop offset="0.1758" stop-color="#8892b6"/><stop offset="0.1829" stop-color="#8791b5"/><stop offset="0.1883" stop-color="#8790b4"/><stop offset="0.1972" stop-color="#868eb3"/><stop offset="0.2007" stop-color="#858db3"/><stop offset="0.2060" stop-color="#858cb2"/><stop offset="0.2149" stop-color="#848bb1"/><stop offset="0.2185" stop-color="#838ab0"/><stop offset="0.2238" stop-color="#8389b0"/><stop offset="0.2256" stop-color="#8389af"/><stop offset="0.2327" stop-color="#8287ae"/><stop offset="0.2362" stop-color="#8287ae"/><stop offset="0.2433" stop-color="#8185ad"/><stop offset="0.2504" stop-color="#8084ac"/><stop offset="0.2522" stop-color="#ede1eb"/><stop offset="0.3037" stop-color="#e0d9e5"/><stop offset="0.3925" stop-color="#c8cadc"/><stop offset="0.4813" stop-color="#b0bad2"/><stop offset="0.5258" stop-color="#a4b3ce"/><stop offset="0.5702" stop-color="#98abc9"/><stop offset="0.6234" stop-color="#8aa2c3"/><stop offset="0.6501" stop-color="#839ec0"/><stop offset="0.6590" stop-color="#809cbf"/><stop offset="0.7034" stop-color="#7595bb"/><stop offset="0.7123" stop-color="#7293ba"/><stop offset="0.7478" stop-color="#698db6"/><stop offset="0.8366" stop-color="#517ead"/><stop offset="0.9254" stop-color="#396fa3"/><stop offset="0.9698" stop-color="#293345"/><stop offset="1.0000" stop-color="#293345"/></linearGradient><linearGradient id="c27" x1="0" y1="0" x2="0" y2="1"><stop offset="0.0000" stop-color="#2c4c80"/><stop offset="0.0195" stop-color="#315189"/><stop offset="0.0284" stop-color="#33538d"/><stop offset="0.0373" stop-color="#32538c"/><stop offset="0.0462" stop-color="#31538a"/><stop offset="0.0551" stop-color="#305289"/><stop offset="0.0586" stop-color="#315389"/><stop offset="0.0657" stop-color="#355388"/><stop offset="0.0693" stop-color="#365488"/><stop offset="0.0728" stop-color="#385488"/><stop offset="0.0764" stop-color="#3a5488"/><stop offset="0.0782" stop-color="#415a8c"/><stop offset="0.0835" stop-color="#546b99"/><stop offset="0.0853" stop-color="#5b719e"/><stop offset="0.0906" stop-color="#6f83aa"/><stop offset="0.0995" stop-color="#90a0c0"/><stop offset="0.1048" stop-color="#8f9fbf"/><stop offset="0.1137" stop-color="#8e9dbe"/><stop offset="0.1172" stop-color="#8e9dbe"/><stop offset="0.1226" stop-color="#8e9cbd"/><stop offset="0.1261" stop-color="#8d9bbc"/><stop offset="0.1314" stop-color="#8d9abc"/><stop offset="0.1332" stop-color="#8c9abc"/><stop offset="0.1403" stop-color="#8c98bb"/><stop offset="0.1474" stop-color="#8b97ba"/><stop offset="0.1528" stop-color="#8a96b9"/><stop offset="0.1581" stop-color="#8a95b8"/><stop offset="0.1652" stop-color="#8994b7"/><stop offset="0.1705" stop-color="#8893b7"/><stop offset="0.1758" stop-color="#8892b6"/><stop offset="0.1829" stop-color="#8791b5"/><stop offset="0.1883" stop-color="#8790b4"/><stop offset="0.1972" stop-color="#868eb3"/><stop offset="0.2007" stop-color="#858db3"/><stop offset="0.2060" stop-color="#858cb2"/><stop offset="0.2149" stop-color="#848bb1"/><stop offset="0.2185" stop-color="#838ab0"/><stop offset="0.2238" stop-color="#8389b0"/><stop offset="0.2256" stop-color="#8389af"/><stop offset="0.2327" stop-color="#8287ae"/><stop offset="0.2362" stop-color="#8287ae"/><stop offset="0.2433" stop-color="#8185ad"/><stop offset="0.2504" stop-color="#8084ac"/><stop offset="0.2522" stop-color="#ece0ea"/><stop offset="0.3037" stop-color="#ded7e4"/><stop offset="0.3925" stop-color="#c6c8db"/><stop offset="0.4813" stop-color="#aeb9d1"/><stop offset="0.5258" stop-color="#a2b1cc"/><stop offset="0.5702" stop-color="#97aac8"/><stop offset="0.6234" stop-color="#88a1c2"/><stop offset="0.6501" stop-color="#819cbf"/><stop offset="0.6590" stop-color="#7f9bbe"/><stop offset="0.7034" stop-color="#7393b9"/><stop offset="0.7123" stop-color="#7091b8"/><stop offset="0.7478" stop-color="#678bb4"/><stop offset="0.8366" stop-color="#4f7cab"/><stop offset="0.9254" stop-color="#376da1"/><stop offset="0.9698" stop-color="#293244"/><stop offset="1.0000" stop-color="#293244"/></linearGradient><linearGradient id="c28" x1="0" y1="0" x2="0" y2="1"><stop offset="0.0000" stop-color="#2c4c80"/><stop offset="0.0195" stop-color="#315189"/><stop offset="0.0284" stop-color="#33538d"/><stop offset="0.0373" stop-color="#32538c"/><stop offset="0.0462" stop-color="#31538b"/><stop offset="0.0551" stop-color="#305389"/><stop offset="0.0586" stop-color="#325389"/><stop offset="0.0657" stop-color="#355489"/><stop offset="0.0693" stop-color="#375488"/><stop offset="0.0728" stop-color="#385488"/><stop offset="0.0764" stop-color="#3a5488"/><stop offset="0.0782" stop-color="#415a8c"/><stop offset="0.0835" stop-color="#546b99"/><stop offset="0.0853" stop-color="#5b719e"/><stop offset="0.0906" stop-color="#6f83aa"/><stop offset="0.0995" stop-color="#90a0c0"/><stop offset="0.1048" stop-color="#8f9fbf"/><stop offset="0.1137" stop-color="#8e9dbe"/><stop offset="0.1172" stop-color="#8e9dbe"/><stop offset="0.1226" stop-color="#8e9cbd"/><stop offset="0.1261" stop-color="#8d9bbc"/><stop offset="0.1314" stop-color="#8d9abc"/><stop offset="0.1332" stop-color="#8c9abc"/><stop offset="0.1403" stop-color="#8c98bb"/><stop offset="0.1474" stop-color="#8b97ba"/><stop offset="0.1528" stop-color="#8a96b9"/><stop offset="0.1581" stop-color="#8a95b8"/><stop offset="0.1652" stop-color="#8994b7"/><stop offset="0.1705" stop-color="#8893b7"/><stop offset="0.1758" stop-color="#8892b6"/><stop offset="0.1829" stop-color="#8791b5"/><stop offset="0.1883" stop-color="#8790b4"/><stop offset="0.1972" stop-color="#868eb3"/><stop offset="0.2007" stop-color="#858db3"/><stop offset="0.2060" stop-color="#858cb2"/><stop offset="0.2149" stop-color="#848bb1"/><stop offset="0.2185" stop-color="#838ab0"/><stop offset="0.2238" stop-color="#8389b0"/><stop offset="0.2256" stop-color="#8389af"/><stop offset="0.2327" stop-color="#8287ae"/><stop offset="0.2362" stop-color="#8287ae"/><stop offset="0.2433" stop-color="#8185ad"/><stop offset="0.2504" stop-color="#8084ac"/><stop offset="0.2522" stop-color="#ebdfe9"/><stop offset="0.3037" stop-color="#ddd6e4"/><stop offset="0.3925" stop-color="#c5c7da"/><stop offset="0.4813" stop-color="#adb7d0"/><stop offset="0.5258" stop-color="#a1b0cb"/><stop offset="0.5702" stop-color="#95a8c6"/><stop offset="0.6234" stop-color="#869fc0"/><stop offset="0.6501" stop-color="#7f9abd"/><stop offset="0.6590" stop-color="#7d99bc"/><stop offset="0.7034" stop-color="#7191b7"/><stop offset="0.7123" stop-color="#6e8fb6"/><stop offset="0.7478" stop-color="#6589b2"/><stop offset="0.8366" stop-color="#4d7aa9"/><stop offset="0.9254" stop-color="#356b9f"/><stop offset="0.9698" stop-color="#293143"/><stop offset="1.0000" stop-color="#293143"/></linearGradient><linearGradient id="c29" x1="0" y1="0" x2="0" y2="1"><stop offset="0.0000" stop-color="#2c4c80"/><stop offset="0.0195" stop-color="#315189"/><stop offset="0.0284" stop-color="#34548e"/><stop offset="0.0373" stop-color="#33548c"/><stop offset="0.0462" stop-color="#32548b"/><stop offset="0.0551" stop-color="#30548a"/><stop offset="0.0586" stop-color="#325489"/><stop offset="0.0657" stop-color="#355489"/><stop offset="0.0693" stop-color="#375489"/><stop offset="0.0728" stop-color="#385488"/><stop offset="0.0764" stop-color="#3a5488"/><stop offset="0.0782" stop-color="#415a8c"/><stop offset="0.0835" stop-color="#546b99"/><stop offset="0.0853" stop-color="#5b719e"/><stop offset="0.0906" stop-color="#6f83aa"/><stop offset="0.0995" stop-color="#90a0c0"/><stop offset="0.1048" stop-color="#8f9fbf"/><stop offset="0.1137" stop-color="#8e9dbe"/><stop offset="0.1172" stop-color="#8e9dbe"/><stop offset="0.1226" stop-color="#8e9cbd"/><stop offset="0.1261" stop-color="#8d9bbc"/><stop offset="0.1314" stop-color="#8d9abc"/><stop offset="0.1332" stop-color="#8c9abc"/><stop offset="0.1403" stop-color="#8c98bb"/><stop offset="0.1474" stop-color="#8b97ba"/><stop offset="0.1528" stop-color="#8a96b9"/><stop offset="0.1581" stop-color="#8a95b8"/><stop offset="0.1652" stop-color="#8994b7"/><stop offset="0.1705" stop-color="#8893b7"/><stop offset="0.1758" stop-color="#8892b6"/><stop offset="0.1829" stop-color="#8791b5"/><stop offset="0.1883" stop-color="#8790b4"/><stop offset="0.1972" stop-color="#868eb3"/><stop offset="0.2007" stop-color="#858db3"/><stop offset="0.2060" stop-color="#858cb2"/><stop offset="0.2149" stop-color="#848bb1"/><stop offset="0.2185" stop-color="#838ab0"/><stop offset="0.2238" stop-color="#8389b0"/><stop offset="0.2256" stop-color="#8389af"/><stop offset="0.2327" stop-color="#8287ae"/><stop offset="0.2362" stop-color="#8287ae"/><stop offset="0.2433" stop-color="#8185ad"/><stop offset="0.2504" stop-color="#8084ac"/><stop offset="0.2522" stop-color="#e9dde9"/><stop offset="0.3037" stop-color="#dbd4e3"/><stop offset="0.3925" stop-color="#c3c5d9"/><stop offset="0.4813" stop-color="#abb6cf"/><stop offset="0.5258" stop-color="#9faeca"/><stop offset="0.5702" stop-color="#93a6c5"/><stop offset="0.6234" stop-color="#859dbf"/><stop offset="0.6501" stop-color="#7d98bc"/><stop offset="0.6590" stop-color="#7b97bb"/><stop offset="0.7034" stop-color="#6f8fb6"/><stop offset="0.7123" stop-color="#6c8eb5"/><stop offset="0.7478" stop-color="#6387b1"/><stop offset="0.8366" stop-color="#4b78a7"/><stop offset="0.9254" stop-color="#33699d"/><stop offset="0.9698" stop-color="#283141"/><stop offset="1.0000" stop-color="#283141"/></linearGradient><linearGradient id="c30" x1="0" y1="0" x2="0" y2="1"><stop offset="0.0000" stop-color="#2c4c80"/><stop offset="0.0195" stop-color="#31518a"/><stop offset="0.0284" stop-color="#34548e"/><stop offset="0.0373" stop-color="#33548d"/><stop offset="0.0462" stop-color="#32558b"/><stop offset="0.0551" stop-color="#31558a"/><stop offset="0.0586" stop-color="#32558a"/><stop offset="0.0657" stop-color="#355489"/><stop offset="0.0693" stop-color="#375489"/><stop offset="0.0728" stop-color="#385488"/><stop offset="0.0764" stop-color="#3a5488"/><stop offset="0.0782" stop-color="#415a8c"/><stop offset="0.0835" stop-color="#546b99"/><stop offset="0.0853" stop-color="#5b719e"/><stop offset="0.0906" stop-color="#6f83aa"/><stop offset="0.0995" stop-color="#90a0c0"/><stop offset="0.1048" stop-color="#8f9fbf"/><stop offset="0.1137" stop-color="#8e9dbe"/><stop offset="0.1172" stop-color="#8e9dbe"/><stop offset="0.1226" stop-color="#8e9cbd"/><stop offset="0.1261" stop-color="#8d9bbc"/><stop offset="0.1314" stop-color="#8d9abc"/><stop offset="0.1332" stop-color="#8c9abc"/><stop offset="0.1403" stop-color="#8c98bb"/><stop offset="0.1474" stop-color="#8b97ba"/><stop offset="0.1528" stop-color="#8a96b9"/><stop offset="0.1581" stop-color="#8a95b8"/><stop offset="0.1652" stop-color="#8994b7"/><stop offset="0.1705" stop-color="#8893b7"/><stop offset="0.1758" stop-color="#8892b6"/><stop offset="0.1829" stop-color="#8791b5"/><stop offset="0.1883" stop-color="#8790b4"/><stop offset="0.1972" stop-color="#868eb3"/><stop offset="0.2007" stop-color="#858db3"/><stop offset="0.2060" stop-color="#858cb2"/><stop offset="0.2149" stop-color="#848bb1"/><stop offset="0.2185" stop-color="#838ab0"/><stop offset="0.2238" stop-color="#8389b0"/><stop offset="0.2256" stop-color="#8389af"/><stop offset="0.2327" stop-color="#8287ae"/><stop offset="0.2362" stop-color="#8287ae"/><stop offset="0.2433" stop-color="#8185ad"/><stop offset="0.2504" stop-color="#8084ac"/><stop offset="0.2522" stop-color="#e8dce8"/><stop offset="0.3037" stop-color="#dad3e2"/><stop offset="0.3925" stop-color="#c2c4d8"/><stop offset="0.4813" stop-color="#aab4ce"/><stop offset="0.5258" stop-color="#9dacc8"/><stop offset="0.5702" stop-color="#91a4c3"/><stop offset="0.6234" stop-color="#839bbd"/><stop offset="0.6501" stop-color="#7b96ba"/><stop offset="0.6590" stop-color="#7995b9"/><stop offset="0.7034" stop-color="#6d8db4"/><stop offset="0.7123" stop-color="#6b8cb3"/><stop offset="0.7478" stop-color="#6185af"/><stop offset="0.8366" stop-color="#4976a5"/><stop offset="0.9254" stop-color="#30669a"/><stop offset="0.9698" stop-color="#283040"/><stop offset="1.0000" stop-color="#283040"/></linearGradient><linearGradient id="c31" x1="0" y1="0" x2="0" y2="1"><stop offset="0.0000" stop-color="#2c4c80"/><stop offset="0.0195" stop-color="#325289"/><stop offset="0.0284" stop-color="#34548e"/><stop offset="0.0373" stop-color="#33548d"/><stop offset="0.0462" stop-color="#33558c"/><stop offset="0.0551" stop-color="#32558b"/><stop offset="0.0586" stop-color="#34558a"/><stop offset="0.0657" stop-color="#37558a"/><stop offset="0.0693" stop-color="#385589"/><stop offset="0.0728" stop-color="#395589"/><stop offset="0.0764" stop-color="#3b5589"/><stop offset="0.0782" stop-color="#415a8d"/><stop offset="0.0835" stop-color="#556c9a"/><stop offset="0.0853" stop-color="#5c729e"/><stop offset="0.0906" stop-color="#6f83ab"/><stop offset="0.0995" stop-color="#90a0c0"/><stop offset="0.1048" stop-color="#8f9fbf"/><stop offset="0.1137" stop-color="#8e9dbe"/><stop offset="0.1172" stop-color="#8e9dbe"/><stop offset="0.1226" stop-color="#8e9cbd"/><stop offset="0.1261" stop-color="#8d9bbc"/><stop offset="0.1314" stop-color="#8d9abc"/><stop offset="0.1332" stop-color="#8c9abc"/><stop offset="0.1403" stop-color="#8c98bb"/><stop offset="0.1474" stop-color="#8b97ba"/><stop offset="0.1528" stop-color="#8a96b9"/><stop offset="0.1581" stop-color="#8a95b8"/><stop offset="0.1652" stop-color="#8994b7"/><stop offset="0.1705" stop-color="#8893b7"/><stop offset="0.1758" stop-color="#8892b6"/><stop offset="0.1829" stop-color="#8791b5"/><stop offset="0.1883" stop-color="#8790b4"/><stop offset="0.1972" stop-color="#868eb3"/><stop offset="0.2007" stop-color="#858db3"/><stop offset="0.2060" stop-color="#858cb2"/><stop offset="0.2149" stop-color="#848bb1"/><stop offset="0.2185" stop-color="#838ab0"/><stop offset="0.2238" stop-color="#8389b0"/><stop offset="0.2256" stop-color="#8389af"/><stop offset="0.2327" stop-color="#8287ae"/><stop offset="0.2362" stop-color="#8287ae"/><stop offset="0.2433" stop-color="#8185ad"/><stop offset="0.2504" stop-color="#8084ac"/><stop offset="0.2522" stop-color="#dfd7e5"/><stop offset="0.3037" stop-color="#d1cedf"/><stop offset="0.3925" stop-color="#babfd5"/><stop offset="0.4813" stop-color="#a3b0ca"/><stop offset="0.5258" stop-color="#97a8c5"/><stop offset="0.5702" stop-color="#8ba0c0"/><stop offset="0.6234" stop-color="#7d97ba"/><stop offset="0.6501" stop-color="#7693b7"/><stop offset="0.6590" stop-color="#7491b5"/><stop offset="0.7034" stop-color="#6889b0"/><stop offset="0.7123" stop-color="#6688af"/><stop offset="0.7478" stop-color="#5d82ab"/><stop offset="0.8366" stop-color="#4572a1"/><stop offset="0.9254" stop-color="#2e6396"/><stop offset="0.9698" stop-color="#273347"/><stop offset="1.0000" stop-color="#263246"/></linearGradient><linearGradient id="c32" x1="0" y1="0" x2="0" y2="1"><stop offset="0.0000" stop-color="#2c4c80"/><stop offset="0.0195" stop-color="#325289"/><stop offset="0.0284" stop-color="#34548d"/><stop offset="0.0373" stop-color="#34558d"/><stop offset="0.0462" stop-color="#34558c"/><stop offset="0.0551" stop-color="#34568c"/><stop offset="0.0586" stop-color="#35568b"/><stop offset="0.0657" stop-color="#38568a"/><stop offset="0.0693" stop-color="#39558a"/><stop offset="0.0728" stop-color="#3a558a"/><stop offset="0.0764" stop-color="#3c5589"/><stop offset="0.0782" stop-color="#425b8d"/><stop offset="0.0835" stop-color="#566c9a"/><stop offset="0.0853" stop-color="#5c729e"/><stop offset="0.0906" stop-color="#7083ab"/><stop offset="0.0995" stop-color="#90a0c0"/><stop offset="0.1048" stop-color="#8f9fbf"/><stop offset="0.1137" stop-color="#8e9dbe"/><stop offset="0.1172" stop-color="#8e9dbe"/><stop offset="0.1226" stop-color="#8e9cbd"/><stop offset="0.1261" stop-color="#8d9bbc"/><stop offset="0.1314" stop-color="#8d9abc"/><stop offset="0.1332" stop-color="#8c9abc"/><stop offset="0.1403" stop-color="#8c98bb"/><stop offset="0.1474" stop-color="#8b97ba"/><stop offset="0.1528" stop-color="#8a96b9"/><stop offset="0.1581" stop-color="#8a95b8"/><stop offset="0.1652" stop-color="#8994b7"/><stop offset="0.1705" stop-color="#8893b7"/><stop offset="0.1758" stop-color="#8892b6"/><stop offset="0.1829" stop-color="#8791b5"/><stop offset="0.1883" stop-color="#8790b4"/><stop offset="0.1972" stop-color="#868eb3"/><stop offset="0.2007" stop-color="#858db3"/><stop offset="0.2060" stop-color="#858cb2"/><stop offset="0.2149" stop-color="#848bb1"/><stop offset="0.2185" stop-color="#838ab0"/><stop offset="0.2238" stop-color="#8389b0"/><stop offset="0.2256" stop-color="#8389af"/><stop offset="0.2327" stop-color="#8287ae"/><stop offset="0.2362" stop-color="#8287ae"/><stop offset="0.2433" stop-color="#8185ad"/><stop offset="0.2504" stop-color="#8084ac"/><stop offset="0.2522" stop-color="#d5d1e2"/><stop offset="0.3037" stop-color="#c8c9dc"/><stop offset="0.3925" stop-color="#b2bad1"/><stop offset="0.4813" stop-color="#9babc7"/><stop offset="0.5258" stop-color="#90a3c1"/><stop offset="0.5702" stop-color="#859cbc"/><stop offset="0.6234" stop-color="#7893b6"/><stop offset="0.6501" stop-color="#718eb3"/><stop offset="0.6590" stop-color="#6f8db2"/><stop offset="0.7034" stop-color="#6485ac"/><stop offset="0.7123" stop-color="#6184ab"/><stop offset="0.7478" stop-color="#587ea7"/><stop offset="0.8366" stop-color="#426f9c"/><stop offset="0.9254" stop-color="#2c6092"/><stop offset="0.9698" stop-color="#25374f"/><stop offset="1.0000" stop-color="#24344d"/></linearGradient><linearGradient id="c33" x1="0" y1="0" x2="0" y2="1"><stop offset="0.0000" stop-color="#2c4c80"/><stop offset="0.0195" stop-color="#325289"/><stop offset="0.0284" stop-color="#34548d"/><stop offset="0.0373" stop-color="#34558d"/><stop offset="0.0462" stop-color="#35568d"/><stop offset="0.0551" stop-color="#35568d"/><stop offset="0.0586" stop-color="#36568c"/><stop offset="0.0657" stop-color="#39568b"/><stop offset="0.0693" stop-color="#3a568b"/><stop offset="0.0728" stop-color="#3b568a"/><stop offset="0.0764" stop-color="#3d568a"/><stop offset="0.0782" stop-color="#435c8e"/><stop offset="0.0835" stop-color="#566d9b"/><stop offset="0.0853" stop-color="#5d729f"/><stop offset="0.0906" stop-color="#7083ab"/><stop offset="0.0995" stop-color="#90a0c0"/><stop offset="0.1048" stop-color="#8f9fbf"/><stop offset="0.1137" stop-color="#8e9dbe"/><stop offset="0.1172" stop-color="#8e9dbe"/><stop offset="0.1226" stop-color="#8e9cbd"/><stop offset="0.1261" stop-color="#8d9bbc"/><stop offset="0.1314" stop-color="#8d9abc"/><stop offset="0.1332" stop-color="#8c9abc"/><stop offset="0.1403" stop-color="#8c98bb"/><stop offset="0.1474" stop-color="#8b97ba"/><stop offset="0.1528" stop-color="#8a96b9"/><stop offset="0.1581" stop-color="#8a95b8"/><stop offset="0.1652" stop-color="#8994b7"/><stop offset="0.1705" stop-color="#8893b7"/><stop offset="0.1758" stop-color="#8892b6"/><stop offset="0.1829" stop-color="#8791b5"/><stop offset="0.1883" stop-color="#8790b4"/><stop offset="0.1972" stop-color="#868eb3"/><stop offset="0.2007" stop-color="#858db3"/><stop offset="0.2060" stop-color="#858cb2"/><stop offset="0.2149" stop-color="#848bb1"/><stop offset="0.2185" stop-color="#838ab0"/><stop offset="0.2238" stop-color="#8389b0"/><stop offset="0.2256" stop-color="#8389af"/><stop offset="0.2327" stop-color="#8287ae"/><stop offset="0.2362" stop-color="#8287ae"/><stop offset="0.2433" stop-color="#8185ad"/><stop offset="0.2504" stop-color="#8084ac"/><stop offset="0.2522" stop-color="#cbcbdf"/><stop offset="0.3037" stop-color="#bec3d9"/><stop offset="0.3925" stop-color="#a9b4ce"/><stop offset="0.4813" stop-color="#94a6c3"/><stop offset="0.5258" stop-color="#899ebe"/><stop offset="0.5702" stop-color="#7f97b8"/><stop offset="0.6234" stop-color="#728eb2"/><stop offset="0.6501" stop-color="#6b8aaf"/><stop offset="0.6590" stop-color="#6989ae"/><stop offset="0.7034" stop-color="#5f81a8"/><stop offset="0.7123" stop-color="#5d80a7"/><stop offset="0.7478" stop-color="#547aa3"/><stop offset="0.8366" stop-color="#3f6b98"/><stop offset="0.9254" stop-color="#2a5d8e"/><stop offset="0.9698" stop-color="#243a57"/><stop offset="1.0000" stop-color="#223653"/></linearGradient><linearGradient id="c34" x1="0" y1="0" x2="0" y2="1"><stop offset="0.0000" stop-color="#2c4c80"/><stop offset="0.0195" stop-color="#325289"/><stop offset="0.0284" stop-color="#34548d"/><stop offset="0.0373" stop-color="#35558d"/><stop offset="0.0462" stop-color="#36568d"/><stop offset="0.0551" stop-color="#37578e"/><stop offset="0.0586" stop-color="#38578d"/><stop offset="0.0657" stop-color="#3a578c"/><stop offset="0.0693" stop-color="#3b578c"/><stop offset="0.0728" stop-color="#3d578b"/><stop offset="0.0764" stop-color="#3e568a"/><stop offset="0.0782" stop-color="#445c8f"/><stop offset="0.0835" stop-color="#576d9b"/><stop offset="0.0853" stop-color="#5d739f"/><stop offset="0.0906" stop-color="#7084ab"/><stop offset="0.0995" stop-color="#90a0c0"/><stop offset="0.1048" stop-color="#8f9fbf"/><stop offset="0.1137" stop-color="#8e9dbe"/><stop offset="0.1172" stop-color="#8e9dbe"/><stop offset="0.1226" stop-color="#8e9cbd"/><stop offset="0.1261" stop-color="#8d9bbc"/><stop offset="0.1314" stop-color="#8d9abc"/><stop offset="0.1332" stop-color="#8c9abc"/><stop offset="0.1403" stop-color="#8c98bb"/><stop offset="0.1474" stop-color="#8b97ba"/><stop offset="0.1528" stop-color="#8a96b9"/><stop offset="0.1581" stop-color="#8a95b8"/><stop offset="0.1652" stop-color="#8994b7"/><stop offset="0.1705" stop-color="#8893b7"/><stop offset="0.1758" stop-color="#8892b6"/><stop offset="0.1829" stop-color="#8791b5"/><stop offset="0.1883" stop-color="#8790b4"/><stop offset="0.1972" stop-color="#868eb3"/><stop offset="0.2007" stop-color="#858db3"/><stop offset="0.2060" stop-color="#858cb2"/><stop offset="0.2149" stop-color="#848bb1"/><stop offset="0.2185" stop-color="#838ab0"/><stop offset="0.2238" stop-color="#8389b0"/><stop offset="0.2256" stop-color="#8389af"/><stop offset="0.2327" stop-color="#8287ae"/><stop offset="0.2362" stop-color="#8287ae"/><stop offset="0.2433" stop-color="#8185ad"/><stop offset="0.2504" stop-color="#8084ac"/><stop offset="0.2522" stop-color="#c0c6dc"/><stop offset="0.3037" stop-color="#b5bdd5"/><stop offset="0.3925" stop-color="#a0afca"/><stop offset="0.4813" stop-color="#8ca1c0"/><stop offset="0.5258" stop-color="#829aba"/><stop offset="0.5702" stop-color="#7893b5"/><stop offset="0.6234" stop-color="#6c8aae"/><stop offset="0.6501" stop-color="#6686ab"/><stop offset="0.6590" stop-color="#6484aa"/><stop offset="0.7034" stop-color="#5a7da4"/><stop offset="0.7123" stop-color="#587ca3"/><stop offset="0.7478" stop-color="#50769f"/><stop offset="0.8366" stop-color="#3c6894"/><stop offset="0.9254" stop-color="#275a89"/><stop offset="0.9698" stop-color="#223e5f"/><stop offset="1.0000" stop-color="#21395a"/></linearGradient><linearGradient id="c35" x1="0" y1="0" x2="0" y2="1"><stop offset="0.0000" stop-color="#2c4c80"/><stop offset="0.0195" stop-color="#325289"/><stop offset="0.0284" stop-color="#34548c"/><stop offset="0.0373" stop-color="#35558d"/><stop offset="0.0462" stop-color="#37568e"/><stop offset="0.0551" stop-color="#38578f"/><stop offset="0.0586" stop-color="#39578e"/><stop offset="0.0657" stop-color="#3b578d"/><stop offset="0.0693" stop-color="#3c578c"/><stop offset="0.0728" stop-color="#3e578c"/><stop offset="0.0764" stop-color="#3f578b"/><stop offset="0.0782" stop-color="#455d8f"/><stop offset="0.0835" stop-color="#586e9b"/><stop offset="0.0853" stop-color="#5e739f"/><stop offset="0.0906" stop-color="#7184ac"/><stop offset="0.0995" stop-color="#90a0c0"/><stop offset="0.1048" stop-color="#8f9fbf"/><stop offset="0.1137" stop-color="#8e9dbe"/><stop offset="0.1172" stop-color="#8e9dbe"/><stop offset="0.1226" stop-color="#8e9cbd"/><stop offset="0.1261" stop-color="#8d9bbc"/><stop offset="0.1314" stop-color="#8d9abc"/><stop offset="0.1332" stop-color="#8c9abc"/><stop offset="0.1403" stop-color="#8c98bb"/><stop offset="0.1474" stop-color="#8b97ba"/><stop offset="0.1528" stop-color="#8a96b9"/><stop offset="0.1581" stop-color="#8a95b8"/><stop offset="0.1652" stop-color="#8994b7"/><stop offset="0.1705" stop-color="#8893b7"/><stop offset="0.1758" stop-color="#8892b6"/><stop offset="0.1829" stop-color="#8791b5"/><stop offset="0.1883" stop-color="#8790b4"/><stop offset="0.1972" stop-color="#868eb3"/><stop offset="0.2007" stop-color="#858db3"/><stop offset="0.2060" stop-color="#858cb2"/><stop offset="0.2149" stop-color="#848bb1"/><stop offset="0.2185" stop-color="#838ab0"/><stop offset="0.2238" stop-color="#8389b0"/><stop offset="0.2256" stop-color="#8389af"/><stop offset="0.2327" stop-color="#8287ae"/><stop offset="0.2362" stop-color="#8287ae"/><stop offset="0.2433" stop-color="#8185ad"/><stop offset="0.2504" stop-color="#8084ac"/><stop offset="0.2522" stop-color="#b6c0d8"/><stop offset="0.3037" stop-color="#abb8d2"/><stop offset="0.3925" stop-color="#98aac7"/><stop offset="0.4813" stop-color="#859cbc"/><stop offset="0.5258" stop-color="#7b95b6"/><stop offset="0.5702" stop-color="#728eb1"/><stop offset="0.6234" stop-color="#6686aa"/><stop offset="0.6501" stop-color="#6082a7"/><stop offset="0.6590" stop-color="#5e80a6"/><stop offset="0.7034" stop-color="#5579a0"/><stop offset="0.7123" stop-color="#53789f"/><stop offset="0.7478" stop-color="#4b729b"/><stop offset="0.8366" stop-color="#386490"/><stop offset="0.9254" stop-color="#255685"/><stop offset="0.9698" stop-color="#214167"/><stop offset="1.0000" stop-color="#1f3b61"/></linearGradient><linearGradient id="c36" x1="0" y1="0" x2="0" y2="1"><stop offset="0.0000" stop-color="#2c4c80"/><stop offset="0.0195" stop-color="#325288"/><stop offset="0.0284" stop-color="#34548c"/><stop offset="0.0373" stop-color="#36558d"/><stop offset="0.0462" stop-color="#38578e"/><stop offset="0.0551" stop-color="#395890"/><stop offset="0.0586" stop-color="#3a588f"/><stop offset="0.0657" stop-color="#3d588e"/><stop offset="0.0693" stop-color="#3e588d"/><stop offset="0.0728" stop-color="#3f588c"/><stop offset="0.0764" stop-color="#40588c"/><stop offset="0.0782" stop-color="#465d90"/><stop offset="0.0835" stop-color="#586e9c"/><stop offset="0.0853" stop-color="#5f74a0"/><stop offset="0.0906" stop-color="#7184ac"/><stop offset="0.0995" stop-color="#90a0c0"/><stop offset="0.1048" stop-color="#8f9fbf"/><stop offset="0.1137" stop-color="#8e9dbe"/><stop offset="0.1172" stop-color="#8e9dbe"/><stop offset="0.1226" stop-color="#8e9cbd"/><stop offset="0.1261" stop-color="#8d9bbc"/><stop offset="0.1314" stop-color="#8d9abc"/><stop offset="0.1332" stop-color="#8c9abc"/><stop offset="0.1403" stop-color="#8c98bb"/><stop offset="0.1474" stop-color="#8b97ba"/><stop offset="0.1528" stop-color="#8a96b9"/><stop offset="0.1581" stop-color="#8a95b8"/><stop offset="0.1652" stop-color="#8994b7"/><stop offset="0.1705" stop-color="#8893b7"/><stop offset="0.1758" stop-color="#8892b6"/><stop offset="0.1829" stop-color="#8791b5"/><stop offset="0.1883" stop-color="#8790b4"/><stop offset="0.1972" stop-color="#868eb3"/><stop offset="0.2007" stop-color="#858db3"/><stop offset="0.2060" stop-color="#858cb2"/><stop offset="0.2149" stop-color="#848bb1"/><stop offset="0.2185" stop-color="#838ab0"/><stop offset="0.2238" stop-color="#8389b0"/><stop offset="0.2256" stop-color="#8389af"/><stop offset="0.2327" stop-color="#8287ae"/><stop offset="0.2362" stop-color="#8287ae"/><stop offset="0.2433" stop-color="#8185ad"/><stop offset="0.2504" stop-color="#8084ac"/><stop offset="0.2522" stop-color="#acbad5"/><stop offset="0.3037" stop-color="#a1b2cf"/><stop offset="0.3925" stop-color="#8fa5c4"/><stop offset="0.4813" stop-color="#7d97b8"/><stop offset="0.5258" stop-color="#7490b3"/><stop offset="0.5702" stop-color="#6b8aad"/><stop offset="0.6234" stop-color="#6081a7"/><stop offset="0.6501" stop-color="#5b7da3"/><stop offset="0.6590" stop-color="#597ca2"/><stop offset="0.7034" stop-color="#50759d"/><stop offset="0.7123" stop-color="#4e749b"/><stop offset="0.7478" stop-color="#476e97"/><stop offset="0.8366" stop-color="#35618c"/><stop offset="0.9254" stop-color="#235381"/><stop offset="0.9698" stop-color="#1f456f"/><stop offset="1.0000" stop-color="#1d3d67"/></linearGradient><linearGradient id="c37" x1="0" y1="0" x2="0" y2="1"><stop offset="0.0000" stop-color="#2c4c80"/><stop offset="0.0195" stop-color="#315288"/><stop offset="0.0284" stop-color="#36558d"/><stop offset="0.0373" stop-color="#3a588f"/><stop offset="0.0462" stop-color="#3d5a91"/><stop offset="0.0551" stop-color="#405c93"/><stop offset="0.0586" stop-color="#425d93"/><stop offset="0.0657" stop-color="#455d92"/><stop offset="0.0693" stop-color="#475e91"/><stop offset="0.0728" stop-color="#485e91"/><stop offset="0.0764" stop-color="#4a5e90"/><stop offset="0.0782" stop-color="#4f6394"/><stop offset="0.0835" stop-color="#61739f"/><stop offset="0.0853" stop-color="#6778a2"/><stop offset="0.0906" stop-color="#7887ae"/><stop offset="0.0995" stop-color="#95a1c0"/><stop offset="0.1048" stop-color="#95a0bf"/><stop offset="0.1137" stop-color="#959fbf"/><stop offset="0.1172" stop-color="#949fbe"/><stop offset="0.1226" stop-color="#949ebe"/><stop offset="0.1261" stop-color="#949ebd"/><stop offset="0.1314" stop-color="#929cbc"/><stop offset="0.1332" stop-color="#919bbc"/><stop offset="0.1403" stop-color="#8e98ba"/><stop offset="0.1474" stop-color="#8b96b8"/><stop offset="0.1528" stop-color="#8b95b8"/><stop offset="0.1581" stop-color="#8a93b7"/><stop offset="0.1652" stop-color="#8992b6"/><stop offset="0.1705" stop-color="#8b93b6"/><stop offset="0.1758" stop-color="#8d93b6"/><stop offset="0.1829" stop-color="#8f94b6"/><stop offset="0.1883" stop-color="#8f93b5"/><stop offset="0.1972" stop-color="#8e91b4"/><stop offset="0.2007" stop-color="#8d90b3"/><stop offset="0.2060" stop-color="#8d8fb2"/><stop offset="0.2149" stop-color="#8c8db1"/><stop offset="0.2185" stop-color="#8b8db1"/><stop offset="0.2238" stop-color="#898bb0"/><stop offset="0.2256" stop-color="#888bb0"/><stop offset="0.2327" stop-color="#8489b0"/><stop offset="0.2362" stop-color="#8488af"/><stop offset="0.2433" stop-color="#8387ae"/><stop offset="0.2504" stop-color="#8285ad"/><stop offset="0.2522" stop-color="#9eb3d2"/><stop offset="0.3037" stop-color="#94abcb"/><stop offset="0.3925" stop-color="#849ec0"/><stop offset="0.4813" stop-color="#7391b5"/><stop offset="0.5258" stop-color="#6b8bb0"/><stop offset="0.5702" stop-color="#6385ab"/><stop offset="0.6234" stop-color="#597da4"/><stop offset="0.6501" stop-color="#5479a0"/><stop offset="0.6590" stop-color="#52789f"/><stop offset="0.7034" stop-color="#4a7099"/><stop offset="0.7123" stop-color="#486f97"/><stop offset="0.7478" stop-color="#416992"/><stop offset="0.8366" stop-color="#315d87"/><stop offset="0.9254" stop-color="#21507d"/><stop offset="0.9698" stop-color="#1e4572"/><stop offset="1.0000" stop-color="#1c3e6a"/></linearGradient><linearGradient id="c38" x1="0" y1="0" x2="0" y2="1"><stop offset="0.0000" stop-color="#2c4c80"/><stop offset="0.0195" stop-color="#315289"/><stop offset="0.0284" stop-color="#39588e"/><stop offset="0.0373" stop-color="#415c92"/><stop offset="0.0462" stop-color="#466095"/><stop offset="0.0551" stop-color="#4b6398"/><stop offset="0.0586" stop-color="#4d6498"/><stop offset="0.0657" stop-color="#526697"/><stop offset="0.0693" stop-color="#546697"/><stop offset="0.0728" stop-color="#576797"/><stop offset="0.0764" stop-color="#596896"/><stop offset="0.0782" stop-color="#5e6c9a"/><stop offset="0.0835" stop-color="#6e7aa3"/><stop offset="0.0853" stop-color="#737ea6"/><stop offset="0.0906" stop-color="#838cb0"/><stop offset="0.0995" stop-color="#9ca2c0"/><stop offset="0.1048" stop-color="#9da2c0"/><stop offset="0.1137" stop-color="#9ea2bf"/><stop offset="0.1172" stop-color="#9fa2bf"/><stop offset="0.1226" stop-color="#9fa3bf"/><stop offset="0.1261" stop-color="#a0a3be"/><stop offset="0.1314" stop-color="#9b9fbc"/><stop offset="0.1332" stop-color="#999dbc"/><stop offset="0.1403" stop-color="#9398b9"/><stop offset="0.1474" stop-color="#8c93b6"/><stop offset="0.1528" stop-color="#8b92b5"/><stop offset="0.1581" stop-color="#8a91b4"/><stop offset="0.1652" stop-color="#898fb3"/><stop offset="0.1705" stop-color="#8f92b4"/><stop offset="0.1758" stop-color="#9595b5"/><stop offset="0.1829" stop-color="#9c99b7"/><stop offset="0.1883" stop-color="#9c97b6"/><stop offset="0.1972" stop-color="#9a95b5"/><stop offset="0.2007" stop-color="#9a95b4"/><stop offset="0.2060" stop-color="#9993b3"/><stop offset="0.2149" stop-color="#9891b2"/><stop offset="0.2185" stop-color="#9791b2"/><stop offset="0.2238" stop-color="#928eb2"/><stop offset="0.2256" stop-color="#908eb2"/><stop offset="0.2327" stop-color="#888bb2"/><stop offset="0.2362" stop-color="#878ab1"/><stop offset="0.2433" stop-color="#8689b0"/><stop offset="0.2504" stop-color="#8487af"/><stop offset="0.2522" stop-color="#8eaace"/><stop offset="0.3037" stop-color="#85a3c7"/><stop offset="0.3925" stop-color="#7697bd"/><stop offset="0.4813" stop-color="#688bb2"/><stop offset="0.5258" stop-color="#6186ad"/><stop offset="0.5702" stop-color="#5980a9"/><stop offset="0.6234" stop-color="#5178a1"/><stop offset="0.6501" stop-color="#4c759e"/><stop offset="0.6590" stop-color="#4b739d"/><stop offset="0.7034" stop-color="#436b95"/><stop offset="0.7123" stop-color="#416993"/><stop offset="0.7478" stop-color="#3b638d"/><stop offset="0.8366" stop-color="#2d5883"/><stop offset="0.9254" stop-color="#204d7a"/><stop offset="0.9698" stop-color="#1d4470"/><stop offset="1.0000" stop-color="#1b3e69"/></linearGradient><linearGradient id="c39" x1="0" y1="0" x2="0" y2="1"><stop offset="0.0000" stop-color="#2c4c80"/><stop offset="0.0195" stop-color="#315389"/><stop offset="0.0284" stop-color="#3d5a90"/><stop offset="0.0373" stop-color="#486195"/><stop offset="0.0462" stop-color="#4e6699"/><stop offset="0.0551" stop-color="#556a9c"/><stop offset="0.0586" stop-color="#586c9d"/><stop offset="0.0657" stop-color="#5f6e9d"/><stop offset="0.0693" stop-color="#626f9d"/><stop offset="0.0728" stop-color="#65709d"/><stop offset="0.0764" stop-color="#68719d"/><stop offset="0.0782" stop-color="#6d75a0"/><stop offset="0.0835" stop-color="#7b81a8"/><stop offset="0.0853" stop-color="#7f84aa"/><stop offset="0.0906" stop-color="#8d90b2"/><stop offset="0.0995" stop-color="#a4a3c0"/><stop offset="0.1048" stop-color="#a6a4c0"/><stop offset="0.1137" stop-color="#a8a5c0"/><stop offset="0.1172" stop-color="#a9a6c0"/><stop offset="0.1226" stop-color="#aaa7c0"/><stop offset="0.1261" stop-color="#aba7c0"/><stop offset="0.1314" stop-color="#a3a2bd"/><stop offset="0.1332" stop-color="#a1a0bc"/><stop offset="0.1403" stop-color="#9798b8"/><stop offset="0.1474" stop-color="#8d91b4"/><stop offset="0.1528" stop-color="#8c8fb3"/><stop offset="0.1581" stop-color="#8b8eb2"/><stop offset="0.1652" stop-color="#898cb1"/><stop offset="0.1705" stop-color="#9392b3"/><stop offset="0.1758" stop-color="#9c97b5"/><stop offset="0.1829" stop-color="#a99eb8"/><stop offset="0.1883" stop-color="#a89cb7"/><stop offset="0.1972" stop-color="#a79ab6"/><stop offset="0.2007" stop-color="#a799b5"/><stop offset="0.2060" stop-color="#a698b4"/><stop offset="0.2149" stop-color="#a496b3"/><stop offset="0.2185" stop-color="#a495b3"/><stop offset="0.2238" stop-color="#9b92b3"/><stop offset="0.2256" stop-color="#9891b3"/><stop offset="0.2327" stop-color="#8c8db4"/><stop offset="0.2362" stop-color="#8b8cb3"/><stop offset="0.2433" stop-color="#898ab2"/><stop offset="0.2504" stop-color="#8789b1"/><stop offset="0.2522" stop-color="#7ea2ca"/><stop offset="0.3037" stop-color="#759bc3"/><stop offset="0.3925" stop-color="#6990ba"/><stop offset="0.4813" stop-color="#5c85af"/><stop offset="0.5258" stop-color="#5680ab"/><stop offset="0.5702" stop-color="#507ba6"/><stop offset="0.6234" stop-color="#48749f"/><stop offset="0.6501" stop-color="#45709b"/><stop offset="0.6590" stop-color="#436f9a"/><stop offset="0.7034" stop-color="#3c6691"/><stop offset="0.7123" stop-color="#3a648f"/><stop offset="0.7478" stop-color="#345d88"/><stop offset="0.8366" stop-color="#29547f"/><stop offset="0.9254" stop-color="#1f4a77"/><stop offset="0.9698" stop-color="#1c436f"/><stop offset="1.0000" stop-color="#1b3e69"/></linearGradient><linearGradient id="c40" x1="0" y1="0" x2="0" y2="1"><stop offset="0.0000" stop-color="#2c4c80"/><stop offset="0.0195" stop-color="#315489"/><stop offset="0.0284" stop-color="#405c91"/><stop offset="0.0373" stop-color="#4e6598"/><stop offset="0.0462" stop-color="#576b9d"/><stop offset="0.0551" stop-color="#6072a1"/><stop offset="0.0586" stop-color="#6374a2"/><stop offset="0.0657" stop-color="#6b77a3"/><stop offset="0.0693" stop-color="#6f78a3"/><stop offset="0.0728" stop-color="#7479a3"/><stop offset="0.0764" stop-color="#787ba3"/><stop offset="0.0782" stop-color="#7c7ea5"/><stop offset="0.0835" stop-color="#8888ac"/><stop offset="0.0853" stop-color="#8c8bae"/><stop offset="0.0906" stop-color="#9895b5"/><stop offset="0.0995" stop-color="#aca5c0"/><stop offset="0.1048" stop-color="#aea6c0"/><stop offset="0.1137" stop-color="#b1a8c0"/><stop offset="0.1172" stop-color="#b3a9c1"/><stop offset="0.1226" stop-color="#b5abc1"/><stop offset="0.1261" stop-color="#b6acc1"/><stop offset="0.1314" stop-color="#aca4bd"/><stop offset="0.1332" stop-color="#a9a2bc"/><stop offset="0.1403" stop-color="#9b98b7"/><stop offset="0.1474" stop-color="#8e8eb2"/><stop offset="0.1528" stop-color="#8d8db1"/><stop offset="0.1581" stop-color="#8b8bb0"/><stop offset="0.1652" stop-color="#8a89ae"/><stop offset="0.1705" stop-color="#9791b2"/><stop offset="0.1758" stop-color="#a499b5"/><stop offset="0.1829" stop-color="#b6a3b9"/><stop offset="0.1883" stop-color="#b5a1b8"/><stop offset="0.1972" stop-color="#b49fb7"/><stop offset="0.2007" stop-color="#b39eb6"/><stop offset="0.2060" stop-color="#b39cb5"/><stop offset="0.2149" stop-color="#b19ab4"/><stop offset="0.2185" stop-color="#b099b4"/><stop offset="0.2238" stop-color="#a495b5"/><stop offset="0.2256" stop-color="#a094b5"/><stop offset="0.2327" stop-color="#908fb6"/><stop offset="0.2362" stop-color="#8f8eb6"/><stop offset="0.2433" stop-color="#8c8cb4"/><stop offset="0.2504" stop-color="#898bb3"/><stop offset="0.2522" stop-color="#6d99c6"/><stop offset="0.3037" stop-color="#6693bf"/><stop offset="0.3925" stop-color="#5b89b7"/><stop offset="0.4813" stop-color="#517fad"/><stop offset="0.5258" stop-color="#4c7ba8"/><stop offset="0.5702" stop-color="#4676a4"/><stop offset="0.6234" stop-color="#406f9d"/><stop offset="0.6501" stop-color="#3d6c99"/><stop offset="0.6590" stop-color="#3c6a98"/><stop offset="0.7034" stop-color="#35608d"/><stop offset="0.7123" stop-color="#335e8b"/><stop offset="0.7478" stop-color="#2e5783"/><stop offset="0.8366" stop-color="#254f7a"/><stop offset="0.9254" stop-color="#1d4873"/><stop offset="0.9698" stop-color="#1c426d"/><stop offset="1.0000" stop-color="#1a3e69"/></linearGradient><linearGradient id="c41" x1="0" y1="0" x2="0" y2="1"><stop offset="0.0000" stop-color="#2c4c80"/><stop offset="0.0195" stop-color="#31548a"/><stop offset="0.0284" stop-color="#435f93"/><stop offset="0.0373" stop-color="#55699b"/><stop offset="0.0462" stop-color="#5f71a0"/><stop offset="0.0551" stop-color="#6a79a6"/><stop offset="0.0586" stop-color="#6e7ca8"/><stop offset="0.0657" stop-color="#787fa8"/><stop offset="0.0693" stop-color="#7d81a9"/><stop offset="0.0728" stop-color="#8283a9"/><stop offset="0.0764" stop-color="#8784aa"/><stop offset="0.0782" stop-color="#8a87ab"/><stop offset="0.0835" stop-color="#958fb0"/><stop offset="0.0853" stop-color="#9891b2"/><stop offset="0.0906" stop-color="#a299b7"/><stop offset="0.0995" stop-color="#b4a6c0"/><stop offset="0.1048" stop-color="#b6a8c0"/><stop offset="0.1137" stop-color="#bbacc1"/><stop offset="0.1172" stop-color="#bdadc1"/><stop offset="0.1226" stop-color="#c0afc2"/><stop offset="0.1261" stop-color="#c2b0c2"/><stop offset="0.1314" stop-color="#b5a7bd"/><stop offset="0.1332" stop-color="#b1a4bc"/><stop offset="0.1403" stop-color="#a098b6"/><stop offset="0.1474" stop-color="#8f8cb0"/><stop offset="0.1528" stop-color="#8d8aae"/><stop offset="0.1581" stop-color="#8c89ad"/><stop offset="0.1652" stop-color="#8a87ac"/><stop offset="0.1705" stop-color="#9b91b0"/><stop offset="0.1758" stop-color="#ac9bb4"/><stop offset="0.1829" stop-color="#c3a8ba"/><stop offset="0.1883" stop-color="#c2a6b9"/><stop offset="0.1972" stop-color="#c1a3b8"/><stop offset="0.2007" stop-color="#c0a2b7"/><stop offset="0.2060" stop-color="#bfa1b6"/><stop offset="0.2149" stop-color="#bd9eb5"/><stop offset="0.2185" stop-color="#bc9db5"/><stop offset="0.2238" stop-color="#ad99b6"/><stop offset="0.2256" stop-color="#a897b6"/><stop offset="0.2327" stop-color="#9491b8"/><stop offset="0.2362" stop-color="#9290b8"/><stop offset="0.2433" stop-color="#8f8eb6"/><stop offset="0.2504" stop-color="#8c8db5"/><stop offset="0.2522" stop-color="#5d91c2"/><stop offset="0.3037" stop-color="#568abb"/><stop offset="0.3925" stop-color="#4e82b4"/><stop offset="0.4813" stop-color="#4679aa"/><stop offset="0.5258" stop-color="#4175a6"/><stop offset="0.5702" stop-color="#3d71a2"/><stop offset="0.6234" stop-color="#386a9a"/><stop offset="0.6501" stop-color="#356796"/><stop offset="0.6590" stop-color="#346695"/><stop offset="0.7034" stop-color="#2d5b89"/><stop offset="0.7123" stop-color="#2c5987"/><stop offset="0.7478" stop-color="#27517d"/><stop offset="0.8366" stop-color="#214a76"/><stop offset="0.9254" stop-color="#1c4570"/><stop offset="0.9698" stop-color="#1b416c"/><stop offset="1.0000" stop-color="#1a3e69"/></linearGradient><linearGradient id="c42" x1="0" y1="0" x2="0" y2="1"><stop offset="0.0000" stop-color="#2c4c80"/><stop offset="0.0195" stop-color="#31558a"/><stop offset="0.0284" stop-color="#466194"/><stop offset="0.0373" stop-color="#5c6d9e"/><stop offset="0.0462" stop-color="#6876a4"/><stop offset="0.0551" stop-color="#7480aa"/><stop offset="0.0586" stop-color="#7983ad"/><stop offset="0.0657" stop-color="#8588ae"/><stop offset="0.0693" stop-color="#8b8aaf"/><stop offset="0.0728" stop-color="#918caf"/><stop offset="0.0764" stop-color="#968eb0"/><stop offset="0.0782" stop-color="#9990b1"/><stop offset="0.0835" stop-color="#a296b5"/><stop offset="0.0853" stop-color="#a598b6"/><stop offset="0.0906" stop-color="#ad9eba"/><stop offset="0.0995" stop-color="#bba7c0"/><stop offset="0.1048" stop-color="#bfaac1"/><stop offset="0.1137" stop-color="#c5afc2"/><stop offset="0.1172" stop-color="#c7b0c2"/><stop offset="0.1226" stop-color="#cbb3c3"/><stop offset="0.1261" stop-color="#cdb5c3"/><stop offset="0.1314" stop-color="#beaabe"/><stop offset="0.1332" stop-color="#b8a7bc"/><stop offset="0.1403" stop-color="#a498b5"/><stop offset="0.1474" stop-color="#8f8aad"/><stop offset="0.1528" stop-color="#8e88ac"/><stop offset="0.1581" stop-color="#8c86ab"/><stop offset="0.1652" stop-color="#8a84aa"/><stop offset="0.1705" stop-color="#9f90af"/><stop offset="0.1758" stop-color="#b49cb4"/><stop offset="0.1829" stop-color="#d0adbb"/><stop offset="0.1883" stop-color="#cfabba"/><stop offset="0.1972" stop-color="#cea8b9"/><stop offset="0.2007" stop-color="#cda7b8"/><stop offset="0.2060" stop-color="#cca5b7"/><stop offset="0.2149" stop-color="#c9a2b6"/><stop offset="0.2185" stop-color="#c8a1b5"/><stop offset="0.2238" stop-color="#b69cb7"/><stop offset="0.2256" stop-color="#b09ab8"/><stop offset="0.2327" stop-color="#9893bb"/><stop offset="0.2362" stop-color="#9692ba"/><stop offset="0.2433" stop-color="#9290b8"/><stop offset="0.2504" stop-color="#8e8fb7"/><stop offset="0.2522" stop-color="#4d88be"/><stop offset="0.3037" stop-color="#4782b7"/><stop offset="0.3925" stop-color="#407bb1"/><stop offset="0.4813" stop-color="#3a73a7"/><stop offset="0.5258" stop-color="#376fa4"/><stop offset="0.5702" stop-color="#336ca0"/><stop offset="0.6234" stop-color="#2f6698"/><stop offset="0.6501" stop-color="#2d6394"/><stop offset="0.6590" stop-color="#2d6293"/><stop offset="0.7034" stop-color="#265585"/><stop offset="0.7123" stop-color="#255383"/><stop offset="0.7478" stop-color="#214b78"/><stop offset="0.8366" stop-color="#1d4672"/><stop offset="0.9254" stop-color="#1b426d"/><stop offset="0.9698" stop-color="#1a406a"/><stop offset="1.0000" stop-color="#193e68"/></linearGradient><linearGradient id="c43" x1="0" y1="0" x2="0" y2="1"><stop offset="0.0000" stop-color="#2c4c80"/><stop offset="0.0195" stop-color="#31558a"/><stop offset="0.0284" stop-color="#476194"/><stop offset="0.0373" stop-color="#5d6e9e"/><stop offset="0.0462" stop-color="#6977a4"/><stop offset="0.0551" stop-color="#7681ab"/><stop offset="0.0586" stop-color="#7c85ad"/><stop offset="0.0657" stop-color="#8889af"/><stop offset="0.0693" stop-color="#8e8cb0"/><stop offset="0.0728" stop-color="#958eb1"/><stop offset="0.0764" stop-color="#9c91b2"/><stop offset="0.0782" stop-color="#9f93b3"/><stop offset="0.0835" stop-color="#a899b7"/><stop offset="0.0853" stop-color="#ab9bb8"/><stop offset="0.0906" stop-color="#b4a1bb"/><stop offset="0.0995" stop-color="#c0a9c0"/><stop offset="0.1048" stop-color="#c5acc1"/><stop offset="0.1137" stop-color="#ccb2c3"/><stop offset="0.1172" stop-color="#cfb4c3"/><stop offset="0.1226" stop-color="#d2b7c4"/><stop offset="0.1261" stop-color="#d4b8c4"/><stop offset="0.1314" stop-color="#c4adbf"/><stop offset="0.1332" stop-color="#bfa9bd"/><stop offset="0.1403" stop-color="#a99ab5"/><stop offset="0.1474" stop-color="#928aad"/><stop offset="0.1528" stop-color="#8f87ab"/><stop offset="0.1581" stop-color="#8c84aa"/><stop offset="0.1652" stop-color="#8b83a9"/><stop offset="0.1705" stop-color="#a290ae"/><stop offset="0.1758" stop-color="#b99eb4"/><stop offset="0.1829" stop-color="#d6afbc"/><stop offset="0.1883" stop-color="#d6adbb"/><stop offset="0.1972" stop-color="#d5abb9"/><stop offset="0.2007" stop-color="#d5aab9"/><stop offset="0.2060" stop-color="#d4a8b8"/><stop offset="0.2149" stop-color="#d1a5b7"/><stop offset="0.2185" stop-color="#d0a4b6"/><stop offset="0.2238" stop-color="#bc9eb8"/><stop offset="0.2256" stop-color="#b59cb9"/><stop offset="0.2327" stop-color="#9a94bc"/><stop offset="0.2362" stop-color="#9792bb"/><stop offset="0.2433" stop-color="#8f8eb7"/><stop offset="0.2504" stop-color="#8a8cb4"/><stop offset="0.2522" stop-color="#4383bb"/><stop offset="0.3037" stop-color="#3d7db5"/><stop offset="0.3925" stop-color="#3877af"/><stop offset="0.4813" stop-color="#336fa5"/><stop offset="0.5258" stop-color="#306ca2"/><stop offset="0.5702" stop-color="#2d699f"/><stop offset="0.6234" stop-color="#2a6396"/><stop offset="0.6501" stop-color="#286092"/><stop offset="0.6590" stop-color="#285f91"/><stop offset="0.7034" stop-color="#225283"/><stop offset="0.7123" stop-color="#215080"/><stop offset="0.7478" stop-color="#1d4775"/><stop offset="0.8366" stop-color="#1b436f"/><stop offset="0.9254" stop-color="#1a406b"/><stop offset="0.9698" stop-color="#193f69"/><stop offset="1.0000" stop-color="#193e68"/></linearGradient><linearGradient id="c44" x1="0" y1="0" x2="0" y2="1"><stop offset="0.0000" stop-color="#2c4c80"/><stop offset="0.0195" stop-color="#31558a"/><stop offset="0.0284" stop-color="#435e92"/><stop offset="0.0373" stop-color="#546899"/><stop offset="0.0462" stop-color="#5f6f9e"/><stop offset="0.0551" stop-color="#6b78a4"/><stop offset="0.0586" stop-color="#707ba6"/><stop offset="0.0657" stop-color="#7c80a8"/><stop offset="0.0693" stop-color="#8182aa"/><stop offset="0.0728" stop-color="#8785ab"/><stop offset="0.0764" stop-color="#918aad"/><stop offset="0.0782" stop-color="#958daf"/><stop offset="0.0835" stop-color="#a396b4"/><stop offset="0.0853" stop-color="#a799b6"/><stop offset="0.0906" stop-color="#b5a1bc"/><stop offset="0.0995" stop-color="#c1aac0"/><stop offset="0.1048" stop-color="#c6aec2"/><stop offset="0.1137" stop-color="#ceb5c4"/><stop offset="0.1172" stop-color="#d2b8c5"/><stop offset="0.1226" stop-color="#d3b9c5"/><stop offset="0.1261" stop-color="#d4b9c5"/><stop offset="0.1314" stop-color="#c7afc0"/><stop offset="0.1332" stop-color="#c2acbe"/><stop offset="0.1403" stop-color="#b09fb8"/><stop offset="0.1474" stop-color="#998faf"/><stop offset="0.1528" stop-color="#9289ad"/><stop offset="0.1581" stop-color="#8c84aa"/><stop offset="0.1652" stop-color="#8f86aa"/><stop offset="0.1705" stop-color="#a492b0"/><stop offset="0.1758" stop-color="#b99eb5"/><stop offset="0.1829" stop-color="#d1acbb"/><stop offset="0.1883" stop-color="#d3acba"/><stop offset="0.1972" stop-color="#d5abb9"/><stop offset="0.2007" stop-color="#d5aab9"/><stop offset="0.2060" stop-color="#d4a8b8"/><stop offset="0.2149" stop-color="#d2a5b7"/><stop offset="0.2185" stop-color="#d1a3b6"/><stop offset="0.2238" stop-color="#bd9eb9"/><stop offset="0.2256" stop-color="#b69cba"/><stop offset="0.2327" stop-color="#9c95bd"/><stop offset="0.2362" stop-color="#9390b9"/><stop offset="0.2433" stop-color="#8085b0"/><stop offset="0.2504" stop-color="#7a81ab"/><stop offset="0.2522" stop-color="#4282ba"/><stop offset="0.3037" stop-color="#3c7cb4"/><stop offset="0.3925" stop-color="#3776ae"/><stop offset="0.4813" stop-color="#326ea4"/><stop offset="0.5258" stop-color="#2f6ba1"/><stop offset="0.5702" stop-color="#2c689e"/><stop offset="0.6234" stop-color="#296296"/><stop offset="0.6501" stop-color="#285f92"/><stop offset="0.6590" stop-color="#275e90"/><stop offset="0.7034" stop-color="#215182"/><stop offset="0.7123" stop-color="#204f7f"/><stop offset="0.7478" stop-color="#1c4674"/><stop offset="0.8366" stop-color="#1a426e"/><stop offset="0.9254" stop-color="#193f6a"/><stop offset="0.9698" stop-color="#193e68"/><stop offset="1.0000" stop-color="#183d67"/></linearGradient><linearGradient id="c45" x1="0" y1="0" x2="0" y2="1"><stop offset="0.0000" stop-color="#2c4c80"/><stop offset="0.0195" stop-color="#31558a"/><stop offset="0.0284" stop-color="#3e5b8f"/><stop offset="0.0373" stop-color="#4c6294"/><stop offset="0.0462" stop-color="#546797"/><stop offset="0.0551" stop-color="#606f9d"/><stop offset="0.0586" stop-color="#65729f"/><stop offset="0.0657" stop-color="#6f77a2"/><stop offset="0.0693" stop-color="#7479a3"/><stop offset="0.0728" stop-color="#797ca4"/><stop offset="0.0764" stop-color="#8683a9"/><stop offset="0.0782" stop-color="#8c87ab"/><stop offset="0.0835" stop-color="#9e93b2"/><stop offset="0.0853" stop-color="#a496b5"/><stop offset="0.0906" stop-color="#b6a2bc"/><stop offset="0.0995" stop-color="#c2abc1"/><stop offset="0.1048" stop-color="#c8b0c3"/><stop offset="0.1137" stop-color="#d1b8c6"/><stop offset="0.1172" stop-color="#d5bbc7"/><stop offset="0.1226" stop-color="#d4bbc6"/><stop offset="0.1261" stop-color="#d4bac6"/><stop offset="0.1314" stop-color="#c9b2c1"/><stop offset="0.1332" stop-color="#c6afc0"/><stop offset="0.1403" stop-color="#b8a4ba"/><stop offset="0.1474" stop-color="#a093b2"/><stop offset="0.1528" stop-color="#958cae"/><stop offset="0.1581" stop-color="#8b84aa"/><stop offset="0.1652" stop-color="#9389ac"/><stop offset="0.1705" stop-color="#a694b1"/><stop offset="0.1758" stop-color="#b89fb6"/><stop offset="0.1829" stop-color="#cdaaba"/><stop offset="0.1883" stop-color="#d0aaba"/><stop offset="0.1972" stop-color="#d5abb9"/><stop offset="0.2007" stop-color="#d4a9b8"/><stop offset="0.2060" stop-color="#d4a7b8"/><stop offset="0.2149" stop-color="#d3a4b6"/><stop offset="0.2185" stop-color="#d2a3b6"/><stop offset="0.2238" stop-color="#be9eb9"/><stop offset="0.2256" stop-color="#b89dba"/><stop offset="0.2327" stop-color="#9d96be"/><stop offset="0.2362" stop-color="#8f8eb7"/><stop offset="0.2433" stop-color="#727daa"/><stop offset="0.2504" stop-color="#6b76a2"/><stop offset="0.2522" stop-color="#4181b9"/><stop offset="0.3037" stop-color="#3b7bb3"/><stop offset="0.3925" stop-color="#3675ad"/><stop offset="0.4813" stop-color="#316da3"/><stop offset="0.5258" stop-color="#2e6aa0"/><stop offset="0.5702" stop-color="#2b679d"/><stop offset="0.6234" stop-color="#286195"/><stop offset="0.6501" stop-color="#275e91"/><stop offset="0.6590" stop-color="#265d8f"/><stop offset="0.7034" stop-color="#205081"/><stop offset="0.7123" stop-color="#1f4e7f"/><stop offset="0.7478" stop-color="#1b4573"/><stop offset="0.8366" stop-color="#19416d"/><stop offset="0.9254" stop-color="#183e69"/><stop offset="0.9698" stop-color="#183d68"/><stop offset="1.0000" stop-color="#173c66"/></linearGradient><linearGradient id="c46" x1="0" y1="0" x2="0" y2="1"><stop offset="0.0000" stop-color="#2c4c80"/><stop offset="0.0195" stop-color="#31558a"/><stop offset="0.0284" stop-color="#3a598d"/><stop offset="0.0373" stop-color="#435c8f"/><stop offset="0.0462" stop-color="#4a5f91"/><stop offset="0.0551" stop-color="#556696"/><stop offset="0.0586" stop-color="#596998"/><stop offset="0.0657" stop-color="#626d9b"/><stop offset="0.0693" stop-color="#67709d"/><stop offset="0.0728" stop-color="#6c729e"/><stop offset="0.0764" stop-color="#7b7ca4"/><stop offset="0.0782" stop-color="#8381a7"/><stop offset="0.0835" stop-color="#998fb0"/><stop offset="0.0853" stop-color="#a094b3"/><stop offset="0.0906" stop-color="#b7a3bc"/><stop offset="0.0995" stop-color="#c3adc1"/><stop offset="0.1048" stop-color="#c9b2c3"/><stop offset="0.1137" stop-color="#d4bbc8"/><stop offset="0.1172" stop-color="#d8bfc9"/><stop offset="0.1226" stop-color="#d6bdc8"/><stop offset="0.1261" stop-color="#d4bbc6"/><stop offset="0.1314" stop-color="#ccb4c3"/><stop offset="0.1332" stop-color="#c9b2c2"/><stop offset="0.1403" stop-color="#bfa9bd"/><stop offset="0.1474" stop-color="#a698b4"/><stop offset="0.1528" stop-color="#998eaf"/><stop offset="0.1581" stop-color="#8b84aa"/><stop offset="0.1652" stop-color="#978cad"/><stop offset="0.1705" stop-color="#a895b2"/><stop offset="0.1758" stop-color="#b89fb7"/><stop offset="0.1829" stop-color="#c8a7b9"/><stop offset="0.1883" stop-color="#cca8b9"/><stop offset="0.1972" stop-color="#d4aab8"/><stop offset="0.2007" stop-color="#d4a9b8"/><stop offset="0.2060" stop-color="#d4a7b7"/><stop offset="0.2149" stop-color="#d3a4b6"/><stop offset="0.2185" stop-color="#d3a3b6"/><stop offset="0.2238" stop-color="#bf9eb9"/><stop offset="0.2256" stop-color="#b99dba"/><stop offset="0.2327" stop-color="#9e97bf"/><stop offset="0.2362" stop-color="#8b8bb6"/><stop offset="0.2433" stop-color="#6374a3"/><stop offset="0.2504" stop-color="#5b6b98"/><stop offset="0.2522" stop-color="#4181b9"/><stop offset="0.3037" stop-color="#3b7bb3"/><stop offset="0.3925" stop-color="#3675ad"/><stop offset="0.4813" stop-color="#316da3"/><stop offset="0.5258" stop-color="#2e6aa0"/><stop offset="0.5702" stop-color="#2b679d"/><stop offset="0.6234" stop-color="#286194"/><stop offset="0.6501" stop-color="#265e90"/><stop offset="0.6590" stop-color="#265d8f"/><stop offset="0.7034" stop-color="#205081"/><stop offset="0.7123" stop-color="#1f4e7e"/><stop offset="0.7478" stop-color="#1b4573"/><stop offset="0.8366" stop-color="#19416d"/><stop offset="0.9254" stop-color="#183e69"/><stop offset="0.9698" stop-color="#173d67"/><stop offset="1.0000" stop-color="#173c66"/></linearGradient><linearGradient id="c47" x1="0" y1="0" x2="0" y2="1"><stop offset="0.0000" stop-color="#2c4c80"/><stop offset="0.0195" stop-color="#31558a"/><stop offset="0.0284" stop-color="#36568a"/><stop offset="0.0373" stop-color="#3b568a"/><stop offset="0.0462" stop-color="#3f578a"/><stop offset="0.0551" stop-color="#4a5d8f"/><stop offset="0.0586" stop-color="#4e5f91"/><stop offset="0.0657" stop-color="#566494"/><stop offset="0.0693" stop-color="#5a6796"/><stop offset="0.0728" stop-color="#5e6998"/><stop offset="0.0764" stop-color="#70759f"/><stop offset="0.0782" stop-color="#797ba3"/><stop offset="0.0835" stop-color="#948cae"/><stop offset="0.0853" stop-color="#9d92b1"/><stop offset="0.0906" stop-color="#b8a4bc"/><stop offset="0.0995" stop-color="#c4aec1"/><stop offset="0.1048" stop-color="#cbb4c4"/><stop offset="0.1137" stop-color="#d6bfc9"/><stop offset="0.1172" stop-color="#dbc3cb"/><stop offset="0.1226" stop-color="#d7bfc9"/><stop offset="0.1261" stop-color="#d4bcc7"/><stop offset="0.1314" stop-color="#cfb7c4"/><stop offset="0.1332" stop-color="#cdb5c3"/><stop offset="0.1403" stop-color="#c6aebf"/><stop offset="0.1474" stop-color="#ad9db6"/><stop offset="0.1528" stop-color="#9c90b0"/><stop offset="0.1581" stop-color="#8a84aa"/><stop offset="0.1652" stop-color="#9b8eaf"/><stop offset="0.1705" stop-color="#aa97b3"/><stop offset="0.1758" stop-color="#b8a0b8"/><stop offset="0.1829" stop-color="#c3a4b8"/><stop offset="0.1883" stop-color="#c9a6b8"/><stop offset="0.1972" stop-color="#d4aab8"/><stop offset="0.2007" stop-color="#d4a9b8"/><stop offset="0.2060" stop-color="#d4a7b7"/><stop offset="0.2149" stop-color="#d4a3b6"/><stop offset="0.2185" stop-color="#d4a2b6"/><stop offset="0.2238" stop-color="#c09eba"/><stop offset="0.2256" stop-color="#ba9dbb"/><stop offset="0.2327" stop-color="#a098c0"/><stop offset="0.2362" stop-color="#8789b4"/><stop offset="0.2433" stop-color="#556b9c"/><stop offset="0.2504" stop-color="#4b5f8f"/><stop offset="0.2522" stop-color="#4080b8"/><stop offset="0.3037" stop-color="#3a7ab2"/><stop offset="0.3925" stop-color="#3574ac"/><stop offset="0.4813" stop-color="#306ca2"/><stop offset="0.5258" stop-color="#2d699f"/><stop offset="0.5702" stop-color="#2a669c"/><stop offset="0.6234" stop-color="#276094"/><stop offset="0.6501" stop-color="#265d90"/><stop offset="0.6590" stop-color="#255c8e"/><stop offset="0.7034" stop-color="#1f4f80"/><stop offset="0.7123" stop-color="#1e4d7d"/><stop offset="0.7478" stop-color="#1a4472"/><stop offset="0.8366" stop-color="#18406c"/><stop offset="0.9254" stop-color="#173d68"/><stop offset="0.9698" stop-color="#173c66"/><stop offset="1.0000" stop-color="#163b65"/></linearGradient><linearGradient id="c48" x1="0" y1="0" x2="0" y2="1"><stop offset="0.0000" stop-color="#2c4c80"/><stop offset="0.0195" stop-color="#31548a"/><stop offset="0.0284" stop-color="#345489"/><stop offset="0.0373" stop-color="#375489"/><stop offset="0.0462" stop-color="#3b5388"/><stop offset="0.0551" stop-color="#44598c"/><stop offset="0.0586" stop-color="#475b8d"/><stop offset="0.0657" stop-color="#4e5f90"/><stop offset="0.0693" stop-color="#526192"/><stop offset="0.0728" stop-color="#556393"/><stop offset="0.0764" stop-color="#666e9a"/><stop offset="0.0782" stop-color="#6f749e"/><stop offset="0.0835" stop-color="#8885a9"/><stop offset="0.0853" stop-color="#918aac"/><stop offset="0.0906" stop-color="#aa9bb7"/><stop offset="0.0995" stop-color="#b7a6bd"/><stop offset="0.1048" stop-color="#bfadc1"/><stop offset="0.1137" stop-color="#ccb8c7"/><stop offset="0.1172" stop-color="#d1bdc9"/><stop offset="0.1226" stop-color="#cfbac7"/><stop offset="0.1261" stop-color="#ceb8c6"/><stop offset="0.1314" stop-color="#cab4c4"/><stop offset="0.1332" stop-color="#c9b3c3"/><stop offset="0.1403" stop-color="#c5aec0"/><stop offset="0.1474" stop-color="#b09fb8"/><stop offset="0.1528" stop-color="#a193b2"/><stop offset="0.1581" stop-color="#8f87ac"/><stop offset="0.1652" stop-color="#9b8faf"/><stop offset="0.1705" stop-color="#a595b2"/><stop offset="0.1758" stop-color="#b39db7"/><stop offset="0.1829" stop-color="#bea2b7"/><stop offset="0.1883" stop-color="#c6a5b8"/><stop offset="0.1972" stop-color="#d1a9b8"/><stop offset="0.2007" stop-color="#d2a8b8"/><stop offset="0.2060" stop-color="#d2a6b7"/><stop offset="0.2149" stop-color="#d3a3b6"/><stop offset="0.2185" stop-color="#d3a2b6"/><stop offset="0.2238" stop-color="#c39fb9"/><stop offset="0.2256" stop-color="#ba9cb9"/><stop offset="0.2327" stop-color="#9993bb"/><stop offset="0.2362" stop-color="#7d82ae"/><stop offset="0.2433" stop-color="#4f6799"/><stop offset="0.2504" stop-color="#475d8d"/><stop offset="0.2522" stop-color="#4080b8"/><stop offset="0.3037" stop-color="#3a7ab2"/><stop offset="0.3925" stop-color="#3574ac"/><stop offset="0.4813" stop-color="#306ca2"/><stop offset="0.5258" stop-color="#2d699f"/><stop offset="0.5702" stop-color="#2a669c"/><stop offset="0.6234" stop-color="#276093"/><stop offset="0.6501" stop-color="#255d8f"/><stop offset="0.6590" stop-color="#255c8e"/><stop offset="0.7034" stop-color="#1f4f80"/><stop offset="0.7123" stop-color="#1e4d7d"/><stop offset="0.7478" stop-color="#1a4472"/><stop offset="0.8366" stop-color="#18406c"/><stop offset="0.9254" stop-color="#173d68"/><stop offset="0.9698" stop-color="#163c66"/><stop offset="1.0000" stop-color="#163b65"/></linearGradient><linearGradient id="c49" x1="0" y1="0" x2="0" y2="1"><stop offset="0.0000" stop-color="#2c4c80"/><stop offset="0.0195" stop-color="#305389"/><stop offset="0.0284" stop-color="#335389"/><stop offset="0.0373" stop-color="#365389"/><stop offset="0.0462" stop-color="#395389"/><stop offset="0.0551" stop-color="#40578b"/><stop offset="0.0586" stop-color="#43588c"/><stop offset="0.0657" stop-color="#495c8d"/><stop offset="0.0693" stop-color="#4c5d8e"/><stop offset="0.0728" stop-color="#4e5f8f"/><stop offset="0.0764" stop-color="#5d6895"/><stop offset="0.0782" stop-color="#646d99"/><stop offset="0.0835" stop-color="#797ca2"/><stop offset="0.0853" stop-color="#8180a6"/><stop offset="0.0906" stop-color="#968faf"/><stop offset="0.0995" stop-color="#a49ab7"/><stop offset="0.1048" stop-color="#ada1bb"/><stop offset="0.1137" stop-color="#bcadc2"/><stop offset="0.1172" stop-color="#c2b2c4"/><stop offset="0.1226" stop-color="#c3b2c5"/><stop offset="0.1261" stop-color="#c4b2c5"/><stop offset="0.1314" stop-color="#c3afc3"/><stop offset="0.1332" stop-color="#c2aec2"/><stop offset="0.1403" stop-color="#c0aabf"/><stop offset="0.1474" stop-color="#b29fb9"/><stop offset="0.1528" stop-color="#a897b4"/><stop offset="0.1581" stop-color="#968bae"/><stop offset="0.1652" stop-color="#9a8eaf"/><stop offset="0.1705" stop-color="#9d91b0"/><stop offset="0.1758" stop-color="#ab99b4"/><stop offset="0.1829" stop-color="#b99fb6"/><stop offset="0.1883" stop-color="#c2a4b8"/><stop offset="0.1972" stop-color="#cda7b8"/><stop offset="0.2007" stop-color="#cea7b8"/><stop offset="0.2060" stop-color="#d0a6b7"/><stop offset="0.2149" stop-color="#d1a3b7"/><stop offset="0.2185" stop-color="#d2a2b6"/><stop offset="0.2238" stop-color="#c6a0b8"/><stop offset="0.2256" stop-color="#bb9bb7"/><stop offset="0.2327" stop-color="#8f8bb3"/><stop offset="0.2362" stop-color="#707aa7"/><stop offset="0.2433" stop-color="#4e6596"/><stop offset="0.2504" stop-color="#475d8d"/><stop offset="0.2522" stop-color="#3f7fb7"/><stop offset="0.3037" stop-color="#3979b1"/><stop offset="0.3925" stop-color="#3473ab"/><stop offset="0.4813" stop-color="#2f6ba1"/><stop offset="0.5258" stop-color="#2c689e"/><stop offset="0.5702" stop-color="#29659b"/><stop offset="0.6234" stop-color="#265f93"/><stop offset="0.6501" stop-color="#255c8f"/><stop offset="0.6590" stop-color="#245b8d"/><stop offset="0.7034" stop-color="#1e4e7f"/><stop offset="0.7123" stop-color="#1d4c7c"/><stop offset="0.7478" stop-color="#194371"/><stop offset="0.8366" stop-color="#173f6b"/><stop offset="0.9254" stop-color="#163c67"/><stop offset="0.9698" stop-color="#163b65"/><stop offset="1.0000" stop-color="#153a64"/></linearGradient><linearGradient id="c50" x1="0" y1="0" x2="0" y2="1"><stop offset="0.0000" stop-color="#2c4c80"/><stop offset="0.0195" stop-color="#2f5289"/><stop offset="0.0284" stop-color="#325289"/><stop offset="0.0373" stop-color="#355289"/><stop offset="0.0462" stop-color="#375289"/><stop offset="0.0551" stop-color="#3d558a"/><stop offset="0.0586" stop-color="#3f568a"/><stop offset="0.0657" stop-color="#43588a"/><stop offset="0.0693" stop-color="#45598a"/><stop offset="0.0728" stop-color="#485b8b"/><stop offset="0.0764" stop-color="#536290"/><stop offset="0.0782" stop-color="#596693"/><stop offset="0.0835" stop-color="#6b729c"/><stop offset="0.0853" stop-color="#71769f"/><stop offset="0.0906" stop-color="#8282a8"/><stop offset="0.0995" stop-color="#908db1"/><stop offset="0.1048" stop-color="#9b95b5"/><stop offset="0.1137" stop-color="#aca2bd"/><stop offset="0.1172" stop-color="#b2a7c0"/><stop offset="0.1226" stop-color="#b7aac2"/><stop offset="0.1261" stop-color="#bbacc3"/><stop offset="0.1314" stop-color="#bbaac1"/><stop offset="0.1332" stop-color="#bba9c1"/><stop offset="0.1403" stop-color="#bca7be"/><stop offset="0.1474" stop-color="#b49fb9"/><stop offset="0.1528" stop-color="#af9ab6"/><stop offset="0.1581" stop-color="#9d8fb0"/><stop offset="0.1652" stop-color="#998eaf"/><stop offset="0.1705" stop-color="#958cae"/><stop offset="0.1758" stop-color="#a495b2"/><stop offset="0.1829" stop-color="#b39db6"/><stop offset="0.1883" stop-color="#bfa2b8"/><stop offset="0.1972" stop-color="#c9a5b8"/><stop offset="0.2007" stop-color="#caa5b8"/><stop offset="0.2060" stop-color="#cda5b8"/><stop offset="0.2149" stop-color="#cfa3b7"/><stop offset="0.2185" stop-color="#d0a2b6"/><stop offset="0.2238" stop-color="#c9a0b8"/><stop offset="0.2256" stop-color="#bc9ab5"/><stop offset="0.2327" stop-color="#8583ab"/><stop offset="0.2362" stop-color="#63719f"/><stop offset="0.2433" stop-color="#4d6394"/><stop offset="0.2504" stop-color="#485e8e"/><stop offset="0.2522" stop-color="#3f7fb7"/><stop offset="0.3037" stop-color="#3979b1"/><stop offset="0.3925" stop-color="#3473ab"/><stop offset="0.4813" stop-color="#2f6ba1"/><stop offset="0.5258" stop-color="#2c689e"/><stop offset="0.5702" stop-color="#29659b"/><stop offset="0.6234" stop-color="#265f92"/><stop offset="0.6501" stop-color="#245c8e"/><stop offset="0.6590" stop-color="#245b8d"/><stop offset="0.7034" stop-color="#1e4e7f"/><stop offset="0.7123" stop-color="#1d4c7c"/><stop offset="0.7478" stop-color="#194371"/><stop offset="0.8366" stop-color="#173f6b"/><stop offset="0.9254" stop-color="#163c67"/><stop offset="0.9698" stop-color="#153b65"/><stop offset="1.0000" stop-color="#153a64"/></linearGradient><linearGradient id="c51" x1="0" y1="0" x2="0" y2="1"><stop offset="0.0000" stop-color="#2c4c80"/><stop offset="0.0195" stop-color="#2f5188"/><stop offset="0.0284" stop-color="#315189"/><stop offset="0.0373" stop-color="#335189"/><stop offset="0.0462" stop-color="#36518a"/><stop offset="0.0551" stop-color="#395388"/><stop offset="0.0586" stop-color="#3b5388"/><stop offset="0.0657" stop-color="#3e5587"/><stop offset="0.0693" stop-color="#3f5687"/><stop offset="0.0728" stop-color="#415686"/><stop offset="0.0764" stop-color="#4a5c8b"/><stop offset="0.0782" stop-color="#4e608e"/><stop offset="0.0835" stop-color="#5c6996"/><stop offset="0.0853" stop-color="#606c98"/><stop offset="0.0906" stop-color="#6e75a0"/><stop offset="0.0995" stop-color="#7d81aa"/><stop offset="0.1048" stop-color="#8889af"/><stop offset="0.1137" stop-color="#9b97b8"/><stop offset="0.1172" stop-color="#a39cbb"/><stop offset="0.1226" stop-color="#aca2bf"/><stop offset="0.1261" stop-color="#b1a6c2"/><stop offset="0.1314" stop-color="#b4a5c0"/><stop offset="0.1332" stop-color="#b4a5c0"/><stop offset="0.1403" stop-color="#b7a3bd"/><stop offset="0.1474" stop-color="#b6a0ba"/><stop offset="0.1528" stop-color="#b59db8"/><stop offset="0.1581" stop-color="#a593b3"/><stop offset="0.1652" stop-color="#988daf"/><stop offset="0.1705" stop-color="#8e88ac"/><stop offset="0.1758" stop-color="#9c91b0"/><stop offset="0.1829" stop-color="#ae9ab5"/><stop offset="0.1883" stop-color="#bba1b8"/><stop offset="0.1972" stop-color="#c4a4b8"/><stop offset="0.2007" stop-color="#c7a4b8"/><stop offset="0.2060" stop-color="#cba5b8"/><stop offset="0.2149" stop-color="#cea3b7"/><stop offset="0.2185" stop-color="#cfa2b6"/><stop offset="0.2238" stop-color="#cda1b7"/><stop offset="0.2256" stop-color="#bc9ab3"/><stop offset="0.2327" stop-color="#7a7ba3"/><stop offset="0.2362" stop-color="#576998"/><stop offset="0.2433" stop-color="#4b6292"/><stop offset="0.2504" stop-color="#495f8f"/><stop offset="0.2522" stop-color="#3e7eb6"/><stop offset="0.3037" stop-color="#3878b0"/><stop offset="0.3925" stop-color="#3372aa"/><stop offset="0.4813" stop-color="#2e6aa0"/><stop offset="0.5258" stop-color="#2b679d"/><stop offset="0.5702" stop-color="#28649a"/><stop offset="0.6234" stop-color="#255e92"/><stop offset="0.6501" stop-color="#245b8e"/><stop offset="0.6590" stop-color="#235a8c"/><stop offset="0.7034" stop-color="#1d4d7e"/><stop offset="0.7123" stop-color="#1c4b7c"/><stop offset="0.7478" stop-color="#184270"/><stop offset="0.8366" stop-color="#163e6a"/><stop offset="0.9254" stop-color="#153b66"/><stop offset="0.9698" stop-color="#153a65"/><stop offset="1.0000" stop-color="#143963"/></linearGradient><linearGradient id="c52" x1="0" y1="0" x2="0" y2="1"><stop offset="0.0000" stop-color="#2c4c80"/><stop offset="0.0195" stop-color="#2e5088"/><stop offset="0.0284" stop-color="#305089"/><stop offset="0.0373" stop-color="#325089"/><stop offset="0.0462" stop-color="#34508a"/><stop offset="0.0551" stop-color="#365187"/><stop offset="0.0586" stop-color="#375186"/><stop offset="0.0657" stop-color="#385184"/><stop offset="0.0693" stop-color="#395283"/><stop offset="0.0728" stop-color="#3a5282"/><stop offset="0.0764" stop-color="#405787"/><stop offset="0.0782" stop-color="#445989"/><stop offset="0.0835" stop-color="#4d6090"/><stop offset="0.0853" stop-color="#506292"/><stop offset="0.0906" stop-color="#5a6999"/><stop offset="0.0995" stop-color="#6a74a4"/><stop offset="0.1048" stop-color="#767daa"/><stop offset="0.1137" stop-color="#8b8bb3"/><stop offset="0.1172" stop-color="#9391b7"/><stop offset="0.1226" stop-color="#a09abc"/><stop offset="0.1261" stop-color="#a8a0c0"/><stop offset="0.1314" stop-color="#aca0bf"/><stop offset="0.1332" stop-color="#ada0be"/><stop offset="0.1403" stop-color="#b3a0bd"/><stop offset="0.1474" stop-color="#b8a0bb"/><stop offset="0.1528" stop-color="#bca0ba"/><stop offset="0.1581" stop-color="#ac98b5"/><stop offset="0.1652" stop-color="#968caf"/><stop offset="0.1705" stop-color="#8684aa"/><stop offset="0.1758" stop-color="#958cae"/><stop offset="0.1829" stop-color="#a998b4"/><stop offset="0.1883" stop-color="#b8a0b8"/><stop offset="0.1972" stop-color="#c0a2b8"/><stop offset="0.2007" stop-color="#c3a3b8"/><stop offset="0.2060" stop-color="#c8a4b8"/><stop offset="0.2149" stop-color="#cca3b7"/><stop offset="0.2185" stop-color="#cea3b7"/><stop offset="0.2238" stop-color="#d0a2b6"/><stop offset="0.2256" stop-color="#bd99b1"/><stop offset="0.2327" stop-color="#70739b"/><stop offset="0.2362" stop-color="#4a6090"/><stop offset="0.2433" stop-color="#4a6090"/><stop offset="0.2504" stop-color="#4a6090"/><stop offset="0.2522" stop-color="#3e7eb6"/><stop offset="0.3037" stop-color="#3878b0"/><stop offset="0.3925" stop-color="#3372aa"/><stop offset="0.4813" stop-color="#2e6aa0"/><stop offset="0.5258" stop-color="#2b679d"/><stop offset="0.5702" stop-color="#28649a"/><stop offset="0.6234" stop-color="#255e92"/><stop offset="0.6501" stop-color="#245b8d"/><stop offset="0.6590" stop-color="#235a8c"/><stop offset="0.7034" stop-color="#1d4d7e"/><stop offset="0.7123" stop-color="#1c4b7b"/><stop offset="0.7478" stop-color="#184270"/><stop offset="0.8366" stop-color="#163e6a"/><stop offset="0.9254" stop-color="#153b66"/><stop offset="0.9698" stop-color="#143a64"/><stop offset="1.0000" stop-color="#143963"/></linearGradient><linearGradient id="c53" x1="0" y1="0" x2="0" y2="1"><stop offset="0.0000" stop-color="#2c4c80"/><stop offset="0.0195" stop-color="#2e5088"/><stop offset="0.0284" stop-color="#305089"/><stop offset="0.0373" stop-color="#325089"/><stop offset="0.0462" stop-color="#34508a"/><stop offset="0.0551" stop-color="#365187"/><stop offset="0.0586" stop-color="#375186"/><stop offset="0.0657" stop-color="#385184"/><stop offset="0.0693" stop-color="#395283"/><stop offset="0.0728" stop-color="#3a5282"/><stop offset="0.0764" stop-color="#405787"/><stop offset="0.0782" stop-color="#445989"/><stop offset="0.0835" stop-color="#4d6090"/><stop offset="0.0853" stop-color="#506292"/><stop offset="0.0906" stop-color="#5a6999"/><stop offset="0.0995" stop-color="#6a74a4"/><stop offset="0.1048" stop-color="#767daa"/><stop offset="0.1137" stop-color="#8b8bb3"/><stop offset="0.1172" stop-color="#9391b7"/><stop offset="0.1226" stop-color="#a09abc"/><stop offset="0.1261" stop-color="#a8a0c0"/><stop offset="0.1314" stop-color="#aca0bf"/><stop offset="0.1332" stop-color="#ada0be"/><stop offset="0.1403" stop-color="#b3a0bd"/><stop offset="0.1474" stop-color="#b8a0bb"/><stop offset="0.1528" stop-color="#bca0ba"/><stop offset="0.1581" stop-color="#ac98b5"/><stop offset="0.1652" stop-color="#968caf"/><stop offset="0.1705" stop-color="#8684aa"/><stop offset="0.1758" stop-color="#958cae"/><stop offset="0.1829" stop-color="#a998b4"/><stop offset="0.1883" stop-color="#b8a0b8"/><stop offset="0.1972" stop-color="#c0a2b8"/><stop offset="0.2007" stop-color="#c3a3b8"/><stop offset="0.2060" stop-color="#c8a4b8"/><stop offset="0.2149" stop-color="#cca3b7"/><stop offset="0.2185" stop-color="#cea3b7"/><stop offset="0.2238" stop-color="#d0a2b6"/><stop offset="0.2256" stop-color="#bd99b1"/><stop offset="0.2327" stop-color="#70739b"/><stop offset="0.2362" stop-color="#4a6090"/><stop offset="0.2433" stop-color="#4a6090"/><stop offset="0.2504" stop-color="#4a6090"/><stop offset="0.2522" stop-color="#3e7eb6"/><stop offset="0.3037" stop-color="#3878b0"/><stop offset="0.3925" stop-color="#3372aa"/><stop offset="0.4813" stop-color="#2e6aa0"/><stop offset="0.5258" stop-color="#2b679d"/><stop offset="0.5702" stop-color="#28649a"/><stop offset="0.6234" stop-color="#255e92"/><stop offset="0.6501" stop-color="#245b8d"/><stop offset="0.6590" stop-color="#235a8c"/><stop offset="0.7034" stop-color="#1d4d7e"/><stop offset="0.7123" stop-color="#1c4b7b"/><stop offset="0.7478" stop-color="#184270"/><stop offset="0.8366" stop-color="#163e6a"/><stop offset="0.9254" stop-color="#153b66"/><stop offset="0.9698" stop-color="#143a64"/><stop offset="1.0000" stop-color="#143963"/></linearGradient><linearGradient id="c54" x1="0" y1="0" x2="0" y2="1"><stop offset="0.0000" stop-color="#2c4c80"/><stop offset="0.0195" stop-color="#2e5088"/><stop offset="0.0284" stop-color="#305089"/><stop offset="0.0373" stop-color="#325089"/><stop offset="0.0462" stop-color="#34508a"/><stop offset="0.0551" stop-color="#365187"/><stop offset="0.0586" stop-color="#375186"/><stop offset="0.0657" stop-color="#385184"/><stop offset="0.0693" stop-color="#395283"/><stop offset="0.0728" stop-color="#3a5282"/><stop offset="0.0764" stop-color="#405787"/><stop offset="0.0782" stop-color="#445989"/><stop offset="0.0835" stop-color="#4d6090"/><stop offset="0.0853" stop-color="#506292"/><stop offset="0.0906" stop-color="#5a6999"/><stop offset="0.0995" stop-color="#6a74a4"/><stop offset="0.1048" stop-color="#767daa"/><stop offset="0.1137" stop-color="#8b8bb3"/><stop offset="0.1172" stop-color="#9391b7"/><stop offset="0.1226" stop-color="#a09abc"/><stop offset="0.1261" stop-color="#a8a0c0"/><stop offset="0.1314" stop-color="#aca0bf"/><stop offset="0.1332" stop-color="#ada0be"/><stop offset="0.1403" stop-color="#b3a0bd"/><stop offset="0.1474" stop-color="#b8a0bb"/><stop offset="0.1528" stop-color="#bca0ba"/><stop offset="0.1581" stop-color="#ac98b5"/><stop offset="0.1652" stop-color="#968caf"/><stop offset="0.1705" stop-color="#8684aa"/><stop offset="0.1758" stop-color="#958cae"/><stop offset="0.1829" stop-color="#a998b4"/><stop offset="0.1883" stop-color="#b8a0b8"/><stop offset="0.1972" stop-color="#c0a2b8"/><stop offset="0.2007" stop-color="#c3a3b8"/><stop offset="0.2060" stop-color="#c8a4b8"/><stop offset="0.2149" stop-color="#cca3b7"/><stop offset="0.2185" stop-color="#cea3b7"/><stop offset="0.2238" stop-color="#d0a2b6"/><stop offset="0.2256" stop-color="#bd99b1"/><stop offset="0.2327" stop-color="#70739b"/><stop offset="0.2362" stop-color="#4a6090"/><stop offset="0.2433" stop-color="#4a6090"/><stop offset="0.2504" stop-color="#4a6090"/><stop offset="0.2522" stop-color="#3e7eb6"/><stop offset="0.3037" stop-color="#3878b0"/><stop offset="0.3925" stop-color="#3372aa"/><stop offset="0.4813" stop-color="#2e6aa0"/><stop offset="0.5258" stop-color="#2b679d"/><stop offset="0.5702" stop-color="#28649a"/><stop offset="0.6234" stop-color="#255e92"/><stop offset="0.6501" stop-color="#245b8d"/><stop offset="0.6590" stop-color="#235a8c"/><stop offset="0.7034" stop-color="#1d4d7e"/><stop offset="0.7123" stop-color="#1c4b7b"/><stop offset="0.7478" stop-color="#184270"/><stop offset="0.8366" stop-color="#163e6a"/><stop offset="0.9254" stop-color="#153b66"/><stop offset="0.9698" stop-color="#143a64"/><stop offset="1.0000" stop-color="#143963"/></linearGradient>
<filter id="hb" x="-40" y="0" width="880" height="563" filterUnits="userSpaceOnUse"><feGaussianBlur stdDeviation="8 0"/></filter>
<filter id="b2" x="-50%" y="-50%" width="200%" height="200%"><feGaussianBlur stdDeviation="2"/></filter>
<filter id="b1" x="-50%" y="-50%" width="200%" height="200%"><feGaussianBlur stdDeviation="1.2"/></filter>
<filter id="b4" x="-50%" y="-50%" width="200%" height="200%"><feGaussianBlur stdDeviation="4"/></filter>
<filter id="b5" x="-50%" y="-50%" width="200%" height="200%"><feGaussianBlur stdDeviation="5"/></filter>
<filter id="b8" x="-50%" y="-50%" width="200%" height="200%"><feGaussianBlur stdDeviation="8"/></filter>
</defs>
<g filter="url(#hb)"><rect x="-40" y="0" width="16" height="563" fill="url(#c0)" shape-rendering="crispEdges"/><rect x="-24" y="0" width="16" height="563" fill="url(#c1)" shape-rendering="crispEdges"/><rect x="-8" y="0" width="16" height="563" fill="url(#c2)" shape-rendering="crispEdges"/><rect x="8" y="0" width="16" height="563" fill="url(#c3)" shape-rendering="crispEdges"/><rect x="24" y="0" width="16" height="563" fill="url(#c4)" shape-rendering="crispEdges"/><rect x="40" y="0" width="16" height="563" fill="url(#c5)" shape-rendering="crispEdges"/><rect x="56" y="0" width="16" height="563" fill="url(#c6)" shape-rendering="crispEdges"/><rect x="72" y="0" width="16" height="563" fill="url(#c7)" shape-rendering="crispEdges"/><rect x="88" y="0" width="16" height="563" fill="url(#c8)" shape-rendering="crispEdges"/><rect x="104" y="0" width="16" height="563" fill="url(#c9)" shape-rendering="crispEdges"/><rect x="120" y="0" width="16" height="563" fill="url(#c10)" shape-rendering="crispEdges"/><rect x="136" y="0" width="16" height="563" fill="url(#c11)" shape-rendering="crispEdges"/><rect x="152" y="0" width="16" height="563" fill="url(#c12)" shape-rendering="crispEdges"/><rect x="168" y="0" width="16" height="563" fill="url(#c13)" shape-rendering="crispEdges"/><rect x="184" y="0" width="16" height="563" fill="url(#c14)" shape-rendering="crispEdges"/><rect x="200" y="0" width="16" height="563" fill="url(#c15)" shape-rendering="crispEdges"/><rect x="216" y="0" width="16" height="563" fill="url(#c16)" shape-rendering="crispEdges"/><rect x="232" y="0" width="16" height="563" fill="url(#c17)" shape-rendering="crispEdges"/><rect x="248" y="0" width="16" height="563" fill="url(#c18)" shape-rendering="crispEdges"/><rect x="264" y="0" width="16" height="563" fill="url(#c19)" shape-rendering="crispEdges"/><rect x="280" y="0" width="16" height="563" fill="url(#c20)" shape-rendering="crispEdges"/><rect x="296" y="0" width="16" height="563" fill="url(#c21)" shape-rendering="crispEdges"/><rect x="312" y="0" width="16" height="563" fill="url(#c22)" shape-rendering="crispEdges"/><rect x="328" y="0" width="16" height="563" fill="url(#c23)" shape-rendering="crispEdges"/><rect x="344" y="0" width="16" height="563" fill="url(#c24)" shape-rendering="crispEdges"/><rect x="360" y="0" width="16" height="563" fill="url(#c25)" shape-rendering="crispEdges"/><rect x="376" y="0" width="16" height="563" fill="url(#c26)" shape-rendering="crispEdges"/><rect x="392" y="0" width="16" height="563" fill="url(#c27)" shape-rendering="crispEdges"/><rect x="408" y="0" width="16" height="563" fill="url(#c28)" shape-rendering="crispEdges"/><rect x="424" y="0" width="16" height="563" fill="url(#c29)" shape-rendering="crispEdges"/><rect x="440" y="0" width="16" height="563" fill="url(#c30)" shape-rendering="crispEdges"/><rect x="456" y="0" width="16" height="563" fill="url(#c31)" shape-rendering="crispEdges"/><rect x="472" y="0" width="16" height="563" fill="url(#c32)" shape-rendering="crispEdges"/><rect x="488" y="0" width="16" height="563" fill="url(#c33)" shape-rendering="crispEdges"/><rect x="504" y="0" width="16" height="563" fill="url(#c34)" shape-rendering="crispEdges"/><rect x="520" y="0" width="16" height="563" fill="url(#c35)" shape-rendering="crispEdges"/><rect x="536" y="0" width="16" height="563" fill="url(#c36)" shape-rendering="crispEdges"/><rect x="552" y="0" width="16" height="563" fill="url(#c37)" shape-rendering="crispEdges"/><rect x="568" y="0" width="16" height="563" fill="url(#c38)" shape-rendering="crispEdges"/><rect x="584" y="0" width="16" height="563" fill="url(#c39)" shape-rendering="crispEdges"/><rect x="600" y="0" width="16" height="563" fill="url(#c40)" shape-rendering="crispEdges"/><rect x="616" y="0" width="16" height="563" fill="url(#c41)" shape-rendering="crispEdges"/><rect x="632" y="0" width="16" height="563" fill="url(#c42)" shape-rendering="crispEdges"/><rect x="648" y="0" width="16" height="563" fill="url(#c43)" shape-rendering="crispEdges"/><rect x="664" y="0" width="16" height="563" fill="url(#c44)" shape-rendering="crispEdges"/><rect x="680" y="0" width="16" height="563" fill="url(#c45)" shape-rendering="crispEdges"/><rect x="696" y="0" width="16" height="563" fill="url(#c46)" shape-rendering="crispEdges"/><rect x="712" y="0" width="16" height="563" fill="url(#c47)" shape-rendering="crispEdges"/><rect x="728" y="0" width="16" height="563" fill="url(#c48)" shape-rendering="crispEdges"/><rect x="744" y="0" width="16" height="563" fill="url(#c49)" shape-rendering="crispEdges"/><rect x="760" y="0" width="16" height="563" fill="url(#c50)" shape-rendering="crispEdges"/><rect x="776" y="0" width="16" height="563" fill="url(#c51)" shape-rendering="crispEdges"/><rect x="792" y="0" width="16" height="563" fill="url(#c52)" shape-rendering="crispEdges"/><rect x="808" y="0" width="16" height="563" fill="url(#c53)" shape-rendering="crispEdges"/><rect x="824" y="0" width="16" height="563" fill="url(#c54)" shape-rendering="crispEdges"/></g>
<!-- cloud texture -->
<g filter="url(#b4)">
 <ellipse cx="345" cy="11" rx="50" ry="7" fill="#44649a" opacity="0.7"/>
 <ellipse cx="540" cy="13" rx="35" ry="8" fill="#44649a" opacity="0.6"/>
 <ellipse cx="650" cy="23" rx="30" ry="9" fill="#7a88b4" opacity="0.7"/>
 <ellipse cx="170" cy="31" rx="30" ry="4" fill="#8a90b4" opacity="0.6"/>
 <ellipse cx="410" cy="31" rx="20" ry="3" fill="#9a90b0" opacity="0.6"/>
 <ellipse cx="690" cy="19" rx="35" ry="8" fill="#6a7aaa" opacity="0.7"/>
 <ellipse cx="775" cy="39" rx="40" ry="8" fill="#33467a" opacity="0.8"/>
 <ellipse cx="700" cy="43" rx="30" ry="6" fill="#a098b8" opacity="0.7"/>
 <ellipse cx="710" cy="65" rx="55" ry="10" fill="#dcc4cc" opacity="0.8"/>
 <ellipse cx="748" cy="71" rx="18" ry="7" fill="#f0dcd2" opacity="0.85"/>
 <ellipse cx="785" cy="66" rx="25" ry="10" fill="#8a90b8" opacity="0.6"/>
 <ellipse cx="720" cy="90" rx="90" ry="4" fill="#827ea6" opacity="0.7"/>
 <ellipse cx="690" cy="101" rx="40" ry="4" fill="#c8a8bc" opacity="0.6"/>
 <ellipse cx="660" cy="46" rx="15" ry="8" fill="#b0a0bc" opacity="0.6"/>
</g>
<g filter="url(#b2)">
 <ellipse cx="60" cy="51" rx="80" ry="5" fill="#b4b2cc" opacity="0.6"/>
 <ellipse cx="120" cy="89" rx="35" ry="5" fill="#d0a0b4" opacity="0.5"/>
 <ellipse cx="20" cy="37" rx="25" ry="4" fill="#5a6ea0" opacity="0.6"/>
</g>
<!-- distant mountains -->
<path d="M-10 123 L20 124 L37 128 L55 126 L75 124.80000000000001 L95 127 L112 130 L130 128 L150 126.6 L200 129 L200 142 L-10 142 Z" fill="#7a80aa" filter="url(#b1)"/>
<path d="M-10 142 L-10 135 L60 137 L150 138 L150 142 Z" fill="#747aa6" opacity="0.5" filter="url(#b1)"/>
<path d="M600 131 L650 129 L670 124 L705 121 L725 122 L740 124 L790 124 L810 125 L810 142 L600 142 Z" fill="#9290ba" filter="url(#b1)"/>
<path d="M650 142 L650 137 L700 136 L715 141 Z" fill="#8488b2" opacity="0.6" filter="url(#b1)"/>
<path d="M712 142 L735 137 L745 133 L760 136 L785 132 L810 132 L810 142 Z" fill="#465c8c" filter="url(#b1)"/>
<rect x="0" y="141" width="800" height="1.5" fill="#6f7aa6" opacity="0.4"/>
<g filter="url(#b5)">
 <ellipse cx="8" cy="381" rx="72" ry="12" fill="#62a6d6" opacity="0.8"/>
 <ellipse cx="50" cy="411" rx="90" ry="9" fill="#3a6a9c" opacity="0.5"/>
</g>
<!-- dark rock below menu -->
<path d="M298 563 L302 549 L520 549 L518 563 Z" fill="#141822"/>
<g opacity="0.45"><rect x="385.5" y="557.0" width="4.6" height="2.8" fill="#50586e"/><rect x="356.1" y="551.1" width="7.9" height="1.8" fill="#c4cadc"/><rect x="377.6" y="558.9" width="5.8" height="2.6" fill="#e0e4ee"/><rect x="453.6" y="552.7" width="6.4" height="3.6" fill="#50586e"/><rect x="411.3" y="551.2" width="7.4" height="1.5" fill="#50586e"/><rect x="352.3" y="559.6" width="7.8" height="1.8" fill="#50586e"/><rect x="467.2" y="560.7" width="7.0" height="3.8" fill="#e0e4ee"/><rect x="468.8" y="557.3" width="8.7" height="1.4" fill="#6a7290"/><rect x="361.6" y="552.5" width="3.5" height="3.9" fill="#e0e4ee"/><rect x="477.4" y="560.4" width="4.9" height="3.5" fill="#50586e"/><rect x="404.7" y="557.4" width="6.1" height="3.7" fill="#9aa2bc"/><rect x="490.6" y="561.9" width="6.7" height="1.5" fill="#6a7290"/><rect x="509.0" y="561.0" width="6.0" height="3.1" fill="#c4cadc"/><rect x="452.6" y="561.9" width="3.9" height="1.4" fill="#e0e4ee"/><rect x="490.2" y="561.9" width="2.6" height="3.4" fill="#e0e4ee"/><rect x="497.5" y="551.2" width="5.0" height="2.2" fill="#9aa2bc"/><rect x="352.5" y="557.8" width="2.3" height="3.2" fill="#6a7290"/><rect x="438.6" y="561.1" width="4.0" height="1.7" fill="#9aa2bc"/><rect x="397.6" y="551.8" width="6.2" height="1.1" fill="#c4cadc"/><rect x="510.1" y="554.2" width="3.8" height="3.1" fill="#6a7290"/><rect x="398.4" y="561.5" width="8.3" height="2.1" fill="#e0e4ee"/><rect x="492.9" y="555.2" width="8.1" height="3.0" fill="#9aa2bc"/><rect x="450.4" y="561.3" width="5.5" height="2.3" fill="#c4cadc"/><rect x="504.2" y="555.8" width="3.8" height="1.9" fill="#6a7290"/><rect x="346.9" y="555.6" width="6.1" height="1.1" fill="#50586e"/><rect x="445.2" y="552.5" width="6.4" height="2.0" fill="#6a7290"/><rect x="460.5" y="554.9" width="6.9" height="3.2" fill="#9aa2bc"/><rect x="445.2" y="561.5" width="2.1" height="2.1" fill="#e0e4ee"/><rect x="395.8" y="557.6" width="3.2" height="1.6" fill="#6a7290"/><rect x="488.5" y="553.9" width="7.5" height="1.3" fill="#9aa2bc"/><rect x="510.1" y="558.5" width="2.9" height="2.5" fill="#6a7290"/><rect x="385.6" y="553.1" width="5.0" height="3.1" fill="#9aa2bc"/><rect x="447.1" y="561.4" width="6.7" height="1.7" fill="#c4cadc"/><rect x="358.6" y="559.2" width="3.5" height="2.7" fill="#6a7290"/><rect x="383.3" y="552.3" width="5.7" height="1.6" fill="#50586e"/><rect x="376.2" y="554.1" width="7.7" height="2.9" fill="#50586e"/><rect x="403.7" y="552.4" width="4.0" height="3.4" fill="#6a7290"/><rect x="424.0" y="558.0" width="4.0" height="2.7" fill="#9aa2bc"/><rect x="501.5" y="552.7" width="2.0" height="3.8" fill="#50586e"/><rect x="512.8" y="555.8" width="8.7" height="3.8" fill="#c4cadc"/><rect x="350.5" y="556.0" width="7.3" height="3.2" fill="#6a7290"/><rect x="437.5" y="560.8" width="8.0" height="3.6" fill="#6a7290"/><rect x="365.4" y="553.7" width="2.2" height="3.4" fill="#50586e"/><rect x="502.1" y="560.9" width="8.3" height="2.7" fill="#9aa2bc"/><rect x="426.8" y="552.3" width="5.5" height="1.7" fill="#9aa2bc"/><rect x="434.2" y="555.6" width="8.6" height="2.8" fill="#6a7290"/><rect x="366.3" y="561.7" width="5.8" height="3.4" fill="#9aa2bc"/><rect x="404.8" y="553.2" width="5.7" height="3.5" fill="#c4cadc"/><rect x="385.7" y="554.0" width="8.2" height="1.4" fill="#9aa2bc"/><rect x="427.9" y="557.3" width="4.8" height="3.3" fill="#c4cadc"/><rect x="390.7" y="556.8" width="5.0" height="2.4" fill="#9aa2bc"/><rect x="490.7" y="559.5" width="2.3" height="1.1" fill="#e0e4ee"/><rect x="510.7" y="560.4" width="2.6" height="2.5" fill="#6a7290"/><rect x="371.7" y="551.8" width="4.7" height="2.2" fill="#6a7290"/><rect x="406.3" y="553.1" width="4.3" height="1.4" fill="#50586e"/><rect x="345.6" y="559.0" width="7.6" height="2.7" fill="#9aa2bc"/><rect x="408.5" y="557.6" width="7.5" height="2.1" fill="#9aa2bc"/><rect x="450.9" y="555.7" width="4.6" height="2.5" fill="#6a7290"/><rect x="416.5" y="558.6" width="5.2" height="1.7" fill="#50586e"/><rect x="390.9" y="557.5" width="7.6" height="1.7" fill="#c4cadc"/><rect x="494.5" y="561.3" width="4.6" height="3.7" fill="#6a7290"/><rect x="365.6" y="558.6" width="8.6" height="3.2" fill="#50586e"/><rect x="479.7" y="558.3" width="7.1" height="2.7" fill="#9aa2bc"/><rect x="483.0" y="558.9" width="5.3" height="1.7" fill="#e0e4ee"/><rect x="352.5" y="552.0" width="2.7" height="3.6" fill="#c4cadc"/><rect x="484.3" y="554.8" width="8.0" height="1.1" fill="#9aa2bc"/><rect x="459.5" y="560.2" width="8.7" height="2.7" fill="#9aa2bc"/><rect x="351.2" y="559.4" width="5.6" height="3.1" fill="#9aa2bc"/><rect x="439.3" y="552.1" width="5.9" height="2.7" fill="#50586e"/><rect x="375.7" y="551.9" width="9.0" height="2.9" fill="#e0e4ee"/><rect x="449.7" y="559.3" width="4.8" height="2.1" fill="#e0e4ee"/><rect x="504.6" y="557.1" width="8.8" height="2.1" fill="#c4cadc"/><rect x="510.4" y="555.5" width="7.2" height="1.5" fill="#50586e"/><rect x="473.5" y="558.4" width="5.6" height="2.5" fill="#e0e4ee"/><rect x="497.6" y="552.6" width="2.7" height="3.2" fill="#50586e"/><rect x="506.6" y="557.5" width="8.0" height="1.4" fill="#c4cadc"/><rect x="369.9" y="556.7" width="8.5" height="3.6" fill="#50586e"/><rect x="507.1" y="554.3" width="6.9" height="2.2" fill="#50586e"/><rect x="444.4" y="553.9" width="3.5" height="1.1" fill="#e0e4ee"/><rect x="481.7" y="553.2" width="6.0" height="1.7" fill="#e0e4ee"/><rect x="476.6" y="552.6" width="8.9" height="2.4" fill="#50586e"/><rect x="380.0" y="557.4" width="8.3" height="3.0" fill="#9aa2bc"/><rect x="426.8" y="558.9" width="8.0" height="2.2" fill="#9aa2bc"/><rect x="424.5" y="553.5" width="3.6" height="3.2" fill="#9aa2bc"/><rect x="508.0" y="560.4" width="3.7" height="1.6" fill="#6a7290"/><rect x="368.4" y="557.8" width="6.7" height="1.1" fill="#6a7290"/><rect x="373.9" y="551.5" width="3.3" height="1.3" fill="#9aa2bc"/><rect x="365.1" y="553.9" width="8.4" height="1.1" fill="#e0e4ee"/><rect x="443.7" y="558.4" width="2.0" height="2.0" fill="#e0e4ee"/><rect x="409.5" y="551.9" width="6.5" height="3.2" fill="#e0e4ee"/></g>
</svg></div>
<div id="desk">
  <svg style="position:absolute;left:15px;top:36px" width="30" height="34" viewBox="0 0 30 34">
   <defs><linearGradient id="rb" x1="0" y1="0" x2="1" y2="0"><stop offset="0" stop-color="#c8ced6"/><stop offset="0.5" stop-color="#eef1f4"/><stop offset="1" stop-color="#b8c0ca"/></linearGradient></defs>
   <path d="M1.5 2 L28.5 2 L26.5 33.5 L3.5 33.5 Z" fill="url(#rb)" opacity="0.9"/>
   <path d="M1 2 L29 2 L28.7 5 L1.3 5Z" fill="#dfe4ea"/>
   <g><path d="M15.97 12.99 A5.6 5.6 0 0 1 20.58 18.99" stroke="#2a6fd4" stroke-width="4" fill="none"/><path d="M23.57 19.25 L20.26 20.42 L17.59 18.73Z" fill="#2a6fd4"/><path d="M19.29 22.10 A5.6 5.6 0 0 1 11.79 23.09" stroke="#3a8ff0" stroke-width="4" fill="none"/><path d="M10.07 25.54 L10.71 22.10 L13.51 20.63Z" fill="#3a8ff0"/><path d="M9.74 20.42 A5.6 5.6 0 0 1 12.63 13.42" stroke="#2a78e0" stroke-width="4" fill="none"/><path d="M11.37 10.71 L14.03 12.99 L13.90 16.14Z" fill="#2a78e0"/></g>
  </svg>
  <span class="dt" style="left:7px;top:76.5px;font-size:9.2px">Recycle Bin</span>
  <svg style="position:absolute;left:10.5px;top:111.5px" width="40" height="38" viewBox="0 0 26 26">
   <defs><linearGradient id="eg1c" x1="0" y1="0" x2="1" y2="0.6"><stop offset="0" stop-color="#1b9de2"/><stop offset="0.5" stop-color="#33bcd0"/><stop offset="1" stop-color="#5ad85a"/></linearGradient>
   <linearGradient id="eg2c" x1="0" y1="0" x2="1" y2="1"><stop offset="0" stop-color="#2277d6"/><stop offset="1" stop-color="#1b4ea8"/></linearGradient></defs>
   <circle cx="13" cy="13" r="12.6" fill="url(#eg1c)"/>
   <path d="M0.5 13 C0.8 8.5 4.5 6.2 8 6.5 C11.5 6.8 13.8 9 13.9 11.2 C12.5 10.3 9.6 10.8 9.4 14 C9.3 17.5 12.5 19.3 16 19.4 C19 19.5 22 18.6 24.6 17 C22.5 22.5 18 25.6 13 25.6 C6 25.6 0.5 20 0.5 13Z" fill="url(#eg2c)"/>
   <ellipse cx="12.3" cy="14.5" rx="2.7" ry="3.6" fill="#aa9ab8"/><path d="M14.5 17.9 C18 18.6 21.5 17.8 24.6 16.4 L24.6 17 C22 18.6 19 19.5 16 19.4 C15.4 19.4 14.9 19.3 14.5 19.2Z" fill="#aa9ab8" opacity="0.55"/>
  </svg>
  <svg style="position:absolute;left:12px;top:138px" width="10" height="10" viewBox="0 0 10 10"><rect width="10" height="10" fill="#fff"/><path d="M2.5 7.5 L7 3 M4 3 L7 3 L7 6" fill="none" stroke="#1a6fd0" stroke-width="1.3"/></svg>
  <span class="dt" style="left:10px;top:153.5px;font-size:9.6px">Microsoft</span>
  <span class="dt" style="left:19px;top:164.5px;font-size:9.6px">Edge</span>
  <div style="position:absolute;left:746.5px;top:39.5px;width:29.5px;height:28.5px;background:#383d47;border-radius:4px"></div>
  <svg style="position:absolute;left:749px;top:42px" width="25" height="24" viewBox="0 0 25 24" fill="none" stroke="#f4f4f4" stroke-width="1.4">
   <circle cx="12.5" cy="11.8" r="10.5"/><path d="M4.5 18.5 L11 11.5 L20 19"/><circle cx="16.5" cy="6.8" r="1.5" stroke-width="1.1"/>
  </svg>
  <span class="dt" style="left:736px;top:78px;font-size:9.3px">Learn about</span>
  <span class="dt" style="left:738.5px;top:88px;font-size:9.4px">this picture</span>
  <svg style="position:absolute;left:479.5px;top:29.5px" width="12" height="16" viewBox="0 0 12 16"><path d="M1 1 L1 12.3 L3.8 9.8 L5.9 14.2 L7.7 13.4 L5.7 9.1 L9.3 9.1 Z" fill="#fff" stroke="#111" stroke-width="0.9" stroke-linejoin="round"/></svg>
</div>
<div id="start">
  <div id="search"><svg class="sico" width="14" height="14" viewBox="0 0 14 14"><defs><linearGradient id="sg" x1="0" y1="1" x2="1" y2="0"><stop offset="0" stop-color="#2550b8"/><stop offset="0.5" stop-color="#2a78c8"/><stop offset="1" stop-color="#40a088"/></linearGradient></defs><circle cx="6.2" cy="5.9" r="4.6" fill="none" stroke="url(#sg)" stroke-width="1.5"/><path d="M9.4 9.1 L12 11.7" stroke="#2850b0" stroke-width="1.6" stroke-linecap="round"/></svg><div id="caret"></div><span class="t" id="sph">Search for apps, settings, and documents</span></div>
  <span class="t hd" style="left:49.5px;top:85.5px">Pinned</span>
  <div id="allapps"><span class="t" style="left:6px;top:4.5px;font-size:9.3px;color:#1b1b1b">All apps</span><svg style="position:absolute;left:49.3px;top:6px" width="5" height="7" viewBox="0 0 5 7"><path d="M1 0.8 L4 3.5 L1 6.2" fill="none" stroke="#333" stroke-width="1"/></svg></div>
  <div class="ph" style="left:125.0px;top:118px"></div>
  <div class="pl" style="left:119.0px;top:150.5px"></div>
  <div class="ph" style="left:200.0px;top:118px"></div>
  <div class="pl" style="left:194.0px;top:150.5px"></div>
  <div class="ph" style="left:275.0px;top:118px"></div>
  <div class="pl" style="left:269.0px;top:150.5px"></div>
  <div class="ph" style="left:350.0px;top:118px"></div>
  <div class="pl" style="left:344.0px;top:150.5px"></div>
  <div class="ph" style="left:50.0px;top:183.5px"></div>
  <div class="pl" style="left:44.0px;top:216px"></div>
  <div class="ph" style="left:125.0px;top:183.5px"></div>
  <div class="pl" style="left:119.0px;top:216px"></div>
  <div class="ph" style="left:200.0px;top:183.5px"></div>
  <div class="pl" style="left:194.0px;top:216px"></div>
  <div class="ph" style="left:275.0px;top:183.5px"></div>
  <div class="pl" style="left:269.0px;top:216px"></div>
  <div class="ph" style="left:350.0px;top:183.5px"></div>
  <div class="pl" style="left:344.0px;top:216px"></div>
  <div class="ph" style="left:425.0px;top:183.5px"></div>
  <div class="pl" style="left:419.0px;top:216px"></div>
  <div class="ph" style="left:50.0px;top:249.5px"></div>
  <div class="pl" style="left:44.0px;top:281.5px"></div>
  <div class="ph" style="left:125.0px;top:249.5px"></div>
  <div class="pl" style="left:119.0px;top:281.5px"></div>
  <div class="ph" style="left:200.0px;top:249.5px"></div>
  <div class="pl" style="left:194.0px;top:281.5px"></div>
  <div class="ph" style="left:275.0px;top:249.5px"></div>
  <div class="pl" style="left:269.0px;top:281.5px"></div>
  <div class="ph" style="left:350.0px;top:249.5px"></div>
  <div class="pl" style="left:344.0px;top:281.5px"></div>
  <div class="ph" style="left:425.0px;top:249.5px"></div>
  <div class="pl" style="left:419.0px;top:281.5px"></div>
  <svg style="position:absolute;left:49.5px;top:117.5px" width="26" height="26" viewBox="0 0 26 26">
<defs><linearGradient id="eg1" x1="0" y1="0" x2="1" y2="0.6"><stop offset="0" stop-color="#1b9de2"/><stop offset="0.5" stop-color="#33bcd0"/><stop offset="1" stop-color="#5ad85a"/></linearGradient>
<linearGradient id="eg2" x1="0" y1="0" x2="1" y2="1"><stop offset="0" stop-color="#2277d6"/><stop offset="1" stop-color="#1b4ea8"/></linearGradient></defs>
<circle cx="13" cy="13" r="12.6" fill="url(#eg1)"/>
<path d="M0.5 13 C0.8 8.5 4.5 6.2 8 6.5 C11.5 6.8 13.8 9 13.9 11.2 C12.5 10.3 9.6 10.8 9.4 14 C9.3 17.5 12.5 19.3 16 19.4 C19 19.5 22 18.6 24.6 17 C22.5 22.5 18 25.6 13 25.6 C6 25.6 0.5 20 0.5 13Z" fill="url(#eg2)"/>
<ellipse cx="12.3" cy="14.5" rx="2.7" ry="3.6" fill="#f4f6f8"/><path d="M14.5 17.9 C18 18.6 21.5 17.8 24.6 16.4 L24.6 17 C22 18.6 19 19.5 16 19.4 C15.4 19.4 14.9 19.3 14.5 19.2Z" fill="#f4f6f8" opacity="0.55"/>
</svg>
  <span class="t" style="left:52px;top:150px;font-size:9px;color:#222">Edge</span>
  <svg style="position:absolute;left:424.8px;top:118.5px" width="25" height="25" viewBox="0 0 25 25">
<path d="M21.14 8.31 L24.48 9.73 L24.48 15.27 L21.14 16.69 L20.45 17.89 L20.89 21.50 L16.10 24.26 L13.19 22.08 L11.81 22.08 L8.90 24.26 L4.11 21.50 L4.55 17.89 L3.86 16.69 L0.52 15.27 L0.52 9.73 L3.86 8.31 L4.55 7.11 L4.11 3.50 L8.90 0.74 L11.81 2.92 L13.19 2.92 L16.10 0.74 L20.89 3.50 L20.45 7.11Z" fill="#6d7178" stroke="#6d7178" stroke-width="0.6" stroke-linejoin="round"/>
<circle cx="12.5" cy="12.5" r="6.4" fill="#dbe8f6"/>
<circle cx="12.5" cy="12.5" r="4.6" fill="#1f5ec2"/>
</svg>
  <span class="t" style="left:420px;top:149px;font-size:9.4px">Settings</span>
  <div class="dot" style="left:485px;top:200px"></div><div class="dot" style="left:485.5px;top:209.5px;width:3px;height:3px"></div>
  <span class="t hd" style="left:49.5px;top:336px">Recommended</span>
  <svg style="position:absolute;left:50px;top:368.5px" width="25" height="25" viewBox="0 0 25 25">
<defs><linearGradient id="gsg" x1="0" y1="0" x2="1" y2="0"><stop offset="0" stop-color="#2566c8"/><stop offset="0.5" stop-color="#2a7ad8"/><stop offset="0.51" stop-color="#3a98e8"/><stop offset="1" stop-color="#3aa2ee"/></linearGradient></defs>
<circle cx="12.3" cy="12.2" r="12.2" fill="url(#gsg)"/>
<path d="M4.8 6.2 Q10 8.2 11.5 8 Q13.5 7.5 19.8 4.2 Q16.5 9.5 16.6 11.5 Q16.8 13.8 19.6 19.6 Q14.5 16.5 12.5 16.6 Q10.5 16.8 4.6 19.8 Q8 14.8 8 12.8 Q7.8 10.8 4.8 6.2Z" fill="#e6eef7"/>
<circle cx="12.4" cy="12.3" r="2.1" fill="#2a78d4"/>
</svg>
  <span class="t" style="left:84.5px;top:372px;font-size:9.2px;color:#222">Get Started</span>
  <span class="t" style="left:84.5px;top:383px;font-size:9.5px;color:#666">Welcome to Windows</span>
  <div id="footer">
    <div id="avatar"><svg width="24" height="24" viewBox="0 0 24 24"><circle cx="12" cy="9.3" r="3.3" fill="#8a8a8a"/><path d="M6.3 15.2 Q6.3 13.3 8.3 13.3 L15.7 13.3 Q17.7 13.3 17.7 15.2 Q17.7 18.8 12 18.8 Q6.3 18.8 6.3 15.2Z" fill="#8a8a8a"/></svg></div>
    <span class="t" style="left:84.5px;top:20px;font-size:9.6px;color:#1f1f1f">developer</span>
    <svg style="position:absolute;left:437px;top:17.5px" width="14" height="14" viewBox="0 0 14 14"><path d="M4.3 3.8 A5.1 5.1 0 1 0 9.7 3.8" fill="none" stroke="#4a4a4a" stroke-width="1" stroke-linecap="round"/><path d="M7 1.3 L7 6.8" stroke="#4a4a4a" stroke-width="1" stroke-linecap="round"/></svg>
  </div>
</div>
<div id="taskbar">
  <svg style="position:absolute;left:15px;top:8px" width="20" height="20" viewBox="0 0 20 20">
   <defs><radialGradient id="wg" cx="0.35" cy="0.3" r="0.8"><stop offset="0" stop-color="#b8bcc2"/><stop offset="1" stop-color="#7a7d82"/></radialGradient></defs>
   <circle cx="10" cy="9.5" r="8.3" fill="url(#wg)"/>
   <ellipse cx="13.2" cy="13.5" rx="4.2" ry="3.3" fill="#f4f4f4"/><circle cx="11.5" cy="12.5" r="2.6" fill="#f8f8f8"/>
  </svg>
  <div style="position:absolute;left:212px;top:3.5px;width:29px;height:29.5px;background:#f7f7f7;border-radius:4px;box-shadow:0 0 0 0.5px #e6e6e6"></div>
  <svg style="position:absolute;left:217.5px;top:9px" width="19" height="19" viewBox="0 0 19 19">
   <defs><linearGradient id="wl" gradientUnits="userSpaceOnUse" x1="0" y1="0" x2="18.5" y2="18.5"><stop offset="0" stop-color="#62cdfa"/><stop offset="0.5" stop-color="#3aa4ee"/><stop offset="1" stop-color="#1866d6"/></linearGradient></defs>
   <rect x="0" y="0" width="8.9" height="8.9" fill="url(#wl)"/><rect x="9.6" y="0" width="8.9" height="8.9" fill="url(#wl)"/>
   <rect x="0" y="9.6" width="8.9" height="8.9" fill="url(#wl)"/><rect x="9.6" y="9.6" width="8.9" height="8.9" fill="url(#wl)"/>
  </svg>
  <div style="position:absolute;left:247px;top:6px;width:169px;height:24px;background:#fbfbfb;border-radius:12px;box-shadow:0 0 0 1px #e5e5e5"></div>
  <svg style="position:absolute;left:254px;top:11.5px" width="14" height="14" viewBox="0 0 14 14"><circle cx="5.8" cy="5.8" r="4.2" fill="none" stroke="#2a2a2a" stroke-width="1.5"/><path d="M8.8 8.8 L12.2 12.2" stroke="#2a2a2a" stroke-width="1.6" stroke-linecap="round"/></svg>
  <span class="t" style="left:275px;top:13px;font-size:9.9px;color:#5a5a5a">Search</span>
  <svg style="position:absolute;left:426px;top:8.5px" width="21" height="20" viewBox="0 0 21 20">
   <rect x="6" y="0.5" width="13.5" height="13" rx="1.2" fill="#f7f7f7" stroke="#e8e8e8" stroke-width="0.6"/>
   <rect x="1.5" y="5" width="13.5" height="13" rx="1" fill="#222"/>
   <rect x="6" y="5" width="9" height="8.5" fill="#c2c2c2"/>
  </svg>
  <svg style="position:absolute;left:462px;top:9px" width="20" height="18" viewBox="0 0 20 18">
   <defs><linearGradient id="cp1" x1="0.8" y1="0" x2="0.2" y2="1"><stop offset="0" stop-color="#1e5ee0"/><stop offset="0.3" stop-color="#2a9ef0"/><stop offset="0.65" stop-color="#40c870"/><stop offset="1" stop-color="#f0c020"/></linearGradient>
   <linearGradient id="cp2" x1="0.8" y1="0" x2="0.2" y2="1"><stop offset="0" stop-color="#9a50e8"/><stop offset="0.45" stop-color="#e050a8"/><stop offset="1" stop-color="#f06020"/></linearGradient></defs>
   <path d="M6.5 1.8 Q7.2 0.4 9 0.4 L13 0.4 Q14.6 0.4 14.2 2 L11.5 12 Q10.8 14.2 8.6 14.2 L3 14.2 Q1.3 14.2 1.8 12.5 Z" fill="url(#cp1)"/>
   <path d="M13.5 16.2 Q12.8 17.6 11 17.6 L7 17.6 Q5.4 17.6 5.8 16 L8.5 6 Q9.2 3.8 11.4 3.8 L17 3.8 Q18.7 3.8 18.2 5.5 Z" fill="url(#cp2)"/>
  </svg>
  <svg style="position:absolute;left:495.5px;top:9px" width="20" height="18" viewBox="0 0 20 18">
   <path d="M0.5 2 Q0.5 0.7 1.8 0.7 L6.5 0.7 L8.5 2.7 L18 2.7 Q19.3 2.7 19.3 4 L19.3 16.5 Q19.3 17.5 18.3 17.5 L1.5 17.5 Q0.5 17.5 0.5 16.5Z" fill="#e8a825"/>
   <path d="M0.5 5.5 L19.3 4.8 L19.3 16.5 Q19.3 17.5 18.3 17.5 L1.5 17.5 Q0.5 17.5 0.5 16.5Z" fill="#f8cf48"/>
   <rect x="4.5" y="12.8" width="11" height="4.7" rx="0.8" fill="#1f6fd2"/>
  </svg>
  <svg style="position:absolute;left:530px;top:9px" width="20" height="19" viewBox="0 0 26 26">
   <defs><linearGradient id="eg1b" x1="0" y1="0" x2="1" y2="0.6"><stop offset="0" stop-color="#1b9de2"/><stop offset="0.5" stop-color="#33bcd0"/><stop offset="1" stop-color="#5ad85a"/></linearGradient>
   <linearGradient id="eg2b" x1="0" y1="0" x2="1" y2="1"><stop offset="0" stop-color="#2277d6"/><stop offset="1" stop-color="#1b4ea8"/></linearGradient></defs>
   <circle cx="13" cy="13" r="12.6" fill="url(#eg1b)"/>
   <path d="M0.5 13 C0.8 8.5 4.5 6.2 8 6.5 C11.5 6.8 13.8 9 13.9 11.2 C12.5 10.3 9.6 10.8 9.4 14 C9.3 17.5 12.5 19.3 16 19.4 C19 19.5 22 18.6 24.6 17 C22.5 22.5 18 25.6 13 25.6 C6 25.6 0.5 20 0.5 13Z" fill="url(#eg2b)"/>
   <ellipse cx="12.3" cy="14.5" rx="2.7" ry="3.6" fill="#f0f2f4"/><path d="M14.5 17.9 C18 18.6 21.5 17.8 24.6 16.4 L24.6 17 C22 18.6 19 19.5 16 19.4 C15.4 19.4 14.9 19.3 14.5 19.2Z" fill="#f0f2f4" opacity="0.55"/>
  </svg>
  <svg style="position:absolute;left:565px;top:8.5px" width="18" height="19" viewBox="0 0 18 19">
   <path d="M5 4 L5 2.5 Q5 0.8 7 0.8 L11 0.8 Q13 0.8 13 2.5 L13 4" fill="none" stroke="#58a8f0" stroke-width="1.4"/>
   <rect x="0.5" y="3.5" width="17" height="15" rx="1.8" fill="#1d4f9e"/>
   <rect x="5.2" y="7.6" width="3.4" height="3.4" fill="#f05030"/><rect x="9.4" y="7.6" width="3.4" height="3.4" fill="#7cbc30"/>
   <rect x="5.2" y="11.8" width="3.4" height="3.4" fill="#30a0f0"/><rect x="9.4" y="11.8" width="3.4" height="3.4" fill="#f8b820"/>
  </svg>
  <svg style="position:absolute;left:648px;top:13.5px" width="14" height="8" viewBox="0 0 14 8"><path d="M2.5 6 L7 1.8 L11.5 6" fill="none" stroke="#333" stroke-width="1.2"/></svg>
  <svg style="position:absolute;left:672px;top:10px" width="16" height="16" viewBox="0 0 16 16" fill="none" stroke="#333" stroke-width="1">
   <circle cx="7.2" cy="7.2" r="5.8"/><ellipse cx="7.2" cy="7.2" rx="2.6" ry="5.8"/><path d="M1.5 5.2 L13 5.2 M1.5 9.2 L9 9.2"/>
   <circle cx="11.2" cy="11.2" r="3.3" fill="#eeeeee"/><path d="M9.2 13.2 L13.2 9.2"/>
  </svg>
  <svg style="position:absolute;left:691px;top:10.5px" width="17" height="14" viewBox="0 0 17 14" fill="none" stroke="#333" stroke-width="1">
   <path d="M1.5 5 L4 5 L7.5 1.8 L7.5 12.2 L4 9 L1.5 9 Z"/><path d="M10 5 Q11 7 10 9 M12 3.2 Q14 7 12 10.8 M14 1.5 Q16.8 7 14 12.5"/>
  </svg>
  <span class="t" style="left:731.5px;top:5.5px;font-size:9.5px;color:#222">9:40 AM</span>
  <span class="t" style="left:718px;top:18.8px;font-size:9.7px;color:#222">11/27/2024</span>
  <svg style="position:absolute;left:772px;top:9.8px" width="14" height="14" viewBox="0 0 14 14">
   <path d="M0.8 10.8 Q2.3 9.5 2.3 6 Q2.3 1.4 6 1.4 Q9.7 1.4 9.7 6 Q9.7 9.5 11.2 10.8 Z" fill="#1a1a1a"/>
   <rect x="4" y="3.6" width="4" height="5" rx="1" fill="#e8e8e8"/><rect x="5.2" y="5.6" width="1.6" height="1" fill="#1a1a1a"/>
   <ellipse cx="6" cy="12.3" rx="1.6" ry="0.9" fill="#1a1a1a"/>
   <path d="M9.8 1 L12.2 1 L9.9 3.6 L12.3 3.6" fill="none" stroke="#333" stroke-width="0.9"/>
  </svg>
</div>
</body></html>
